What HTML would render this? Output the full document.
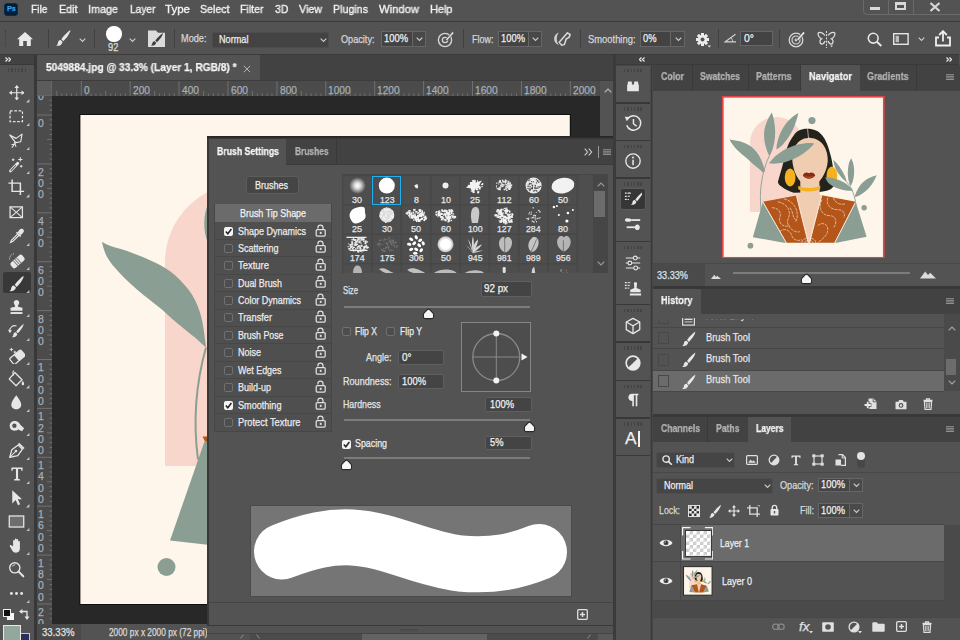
<!DOCTYPE html>
<html><head><meta charset="utf-8"><title>Photoshop</title>
<style>
*{box-sizing:border-box;margin:0;padding:0}
html,body{width:960px;height:640px;overflow:hidden;background:#535353;font-family:"Liberation Sans",sans-serif;color:#ddd;font-size:11px}
.a{position:absolute;display:block}
.t{position:absolute;white-space:nowrap;line-height:1;display:block;-webkit-text-stroke:0.25px currentColor}
</style></head><body>
<div class="a" style="left:0px;top:0px;width:960px;height:21px;background:#535353;"></div>
<div class="a" style="left:0px;top:21px;width:960px;height:1px;background:#3a3a3a;"></div>
<div class="a" style="left:4px;top:3px;width:14px;height:13px;background:#001e36;border-radius:3px;border:1px solid #0b2c4a"></div>
<span class="t" style="left:6.6px;top:5.3px;font-size:8px;color:#31a8ff;font-weight:bold;will-change:transform;transform:scaleX(0.899);transform-origin:0 0;">Ps</span>
<span class="t" style="left:31px;top:4.45px;font-size:11.4px;color:#f2f2f2;transform:scaleX(0.898);transform-origin:0 0;will-change:transform;-webkit-text-stroke:0.35px #f2f2f2;">File</span>
<span class="t" style="left:58.5px;top:4.45px;font-size:11.4px;color:#f2f2f2;transform:scaleX(0.942);transform-origin:0 0;will-change:transform;-webkit-text-stroke:0.35px #f2f2f2;">Edit</span>
<span class="t" style="left:88px;top:4.45px;font-size:11.4px;color:#f2f2f2;transform:scaleX(0.947);transform-origin:0 0;will-change:transform;-webkit-text-stroke:0.35px #f2f2f2;">Image</span>
<span class="t" style="left:129.5px;top:4.45px;font-size:11.4px;color:#f2f2f2;transform:scaleX(0.894);transform-origin:0 0;will-change:transform;-webkit-text-stroke:0.35px #f2f2f2;">Layer</span>
<span class="t" style="left:165px;top:4.45px;font-size:11.4px;color:#f2f2f2;transform:scaleX(1.012);transform-origin:0 0;will-change:transform;-webkit-text-stroke:0.35px #f2f2f2;">Type</span>
<span class="t" style="left:199.5px;top:4.45px;font-size:11.4px;color:#f2f2f2;transform:scaleX(0.931);transform-origin:0 0;will-change:transform;-webkit-text-stroke:0.35px #f2f2f2;">Select</span>
<span class="t" style="left:239.5px;top:4.45px;font-size:11.4px;color:#f2f2f2;transform:scaleX(0.928);transform-origin:0 0;will-change:transform;-webkit-text-stroke:0.35px #f2f2f2;">Filter</span>
<span class="t" style="left:274.5px;top:4.45px;font-size:11.4px;color:#f2f2f2;transform:scaleX(0.926);transform-origin:0 0;will-change:transform;-webkit-text-stroke:0.35px #f2f2f2;">3D</span>
<span class="t" style="left:298.5px;top:4.45px;font-size:11.4px;color:#f2f2f2;transform:scaleX(0.939);transform-origin:0 0;will-change:transform;-webkit-text-stroke:0.35px #f2f2f2;">View</span>
<span class="t" style="left:332.5px;top:4.45px;font-size:11.4px;color:#f2f2f2;transform:scaleX(0.936);transform-origin:0 0;will-change:transform;-webkit-text-stroke:0.35px #f2f2f2;">Plugins</span>
<span class="t" style="left:378.5px;top:4.45px;font-size:11.4px;color:#f2f2f2;transform:scaleX(0.987);transform-origin:0 0;will-change:transform;-webkit-text-stroke:0.35px #f2f2f2;">Window</span>
<span class="t" style="left:429.5px;top:4.45px;font-size:11.4px;color:#f2f2f2;transform:scaleX(0.960);transform-origin:0 0;will-change:transform;-webkit-text-stroke:0.35px #f2f2f2;">Help</span>
<div class="a" style="left:862.5px;top:-4px;width:101px;height:18.5px;background:transparent;border:1px solid #6a6a6a;border-radius:4px"></div>
<div class="a" style="left:887.5px;top:0px;width:1px;height:14px;background:#6a6a6a;"></div>
<div class="a" style="left:912.5px;top:0px;width:1px;height:14px;background:#6a6a6a;"></div>
<div class="a" style="left:870px;top:7px;width:10px;height:3px;background:#d8d8d8;"></div>
<div class="a" style="left:895px;top:2px;width:11px;height:8px;background:transparent;border:2px solid #d8d8d8;border-top-width:3px"></div>
<svg class="a" style="left:929px;top:1.5px;" width="12" height="10" viewBox="0 0 12 10"><path d="M1.5 1 L10.5 9 M10.5 1 L1.5 9" stroke="#d8d8d8" stroke-width="2.2" fill="none"/></svg>
<div class="a" style="left:0px;top:22px;width:960px;height:32px;background:#535353;"></div>
<div class="a" style="left:0px;top:53.5px;width:960px;height:1.5px;background:#3a3a3a;"></div>
<div class="a" style="left:5px;top:30px;width:1px;height:16px;background:transparent;border-left:1px dotted #3e3e3e"></div>
<svg class="a" style="left:16px;top:31px;" width="18" height="16" viewBox="0 0 18 16"><path d="M9 1 L1 8.2 L3.2 8.2 L3.2 15 L7.2 15 L7.2 10 L10.8 10 L10.8 15 L14.8 15 L14.8 8.2 L17 8.2 Z" fill="#e8e8e8"/></svg>
<div class="a" style="left:47.5px;top:29px;width:1px;height:19px;background:#404040;"></div>
<div class="a" style="left:93.5px;top:29px;width:1px;height:19px;background:#404040;"></div>
<div class="a" style="left:174px;top:29px;width:1px;height:19px;background:#404040;"></div>
<div class="a" style="left:462.5px;top:29px;width:1px;height:19px;background:#404040;"></div>
<div class="a" style="left:580px;top:29px;width:1px;height:19px;background:#404040;"></div>
<div class="a" style="left:717.5px;top:29px;width:1px;height:19px;background:#404040;"></div>
<div class="a" style="left:778.5px;top:29px;width:1px;height:19px;background:#404040;"></div>
<svg class="a" style="left:55px;top:29px;" width="17" height="18" viewBox="0 0 17 18"><path d="M15.5 1 C13 2.5 8.5 7 6.3 10.2 L8.3 12.2 C11.2 9.5 15 4.5 15.5 1 Z" fill="#e8e8e8"/><path d="M5.6 11 C3.5 11 3 13 2.8 14.5 C2.6 15.8 1.8 16.3 1 16.6 C3.6 17.4 6.6 16.5 7.6 13 Z" fill="#e8e8e8"/></svg>
<svg class="a" style="left:79px;top:37.5px;" width="7" height="5" viewBox="0 0 7 5"><path d="M0.7 0.7 L3.5 3.5 L6.3 0.7" stroke="#cfcfcf" stroke-width="1.1" fill="none"/></svg>
<div class="a" style="left:106.3px;top:26.4px;width:15.3px;height:15.3px;background:#ffffff;border-radius:50%"></div>
<span class="t" style="left:108px;top:43.4px;font-size:10px;color:#dedede;transform:scaleX(0.926);transform-origin:0 0;">92</span>
<svg class="a" style="left:129px;top:37.5px;" width="7" height="5" viewBox="0 0 7 5"><path d="M0.7 0.7 L3.5 3.5 L6.3 0.7" stroke="#cfcfcf" stroke-width="1.1" fill="none"/></svg>
<svg class="a" style="left:148px;top:30px;" width="17" height="17" viewBox="0 0 17 17"><path d="M0 0.5 L8 0.5 L10 2.8 L17 2.8 L17 17 L0 17 Z" fill="#dcdcdc"/><path d="M15 3 C12.5 4.5 9 8 7.3 10.6 L8.9 12.2 C11.4 10 14.5 6 15 3 Z" fill="#3c3c3c"/><path d="M6.6 11.2 C4.8 11.2 4.4 12.8 4.2 13.8 C4 14.8 3.4 15.2 2.8 15.4 C5 16 7.4 15.4 8.2 12.8 Z" fill="#3c3c3c"/></svg>
<span class="t" style="left:181px;top:32.8px;font-size:11px;color:#d6d6d6;transform:scaleX(0.834);transform-origin:0 0;">Mode:</span>
<div class="a" style="left:212px;top:32px;width:116.5px;height:16px;background:#434343;border-radius:2px;border:1px solid #4c4c4c"></div>
<span class="t" style="left:219px;top:34px;font-size:11px;color:#f0f0f0;transform:scaleX(0.832);transform-origin:0 0;">Normal</span>
<svg class="a" style="left:319.5px;top:38px;" width="7" height="5" viewBox="0 0 7 5"><path d="M0.7 0.7 L3.5 3.5 L6.3 0.7" stroke="#cfcfcf" stroke-width="1.1" fill="none"/></svg>
<span class="t" style="left:341px;top:33.8px;font-size:11px;color:#d6d6d6;transform:scaleX(0.830);transform-origin:0 0;">Opacity:</span>
<div class="a" style="left:381px;top:31px;width:31.5px;height:15.5px;background:#434343;border:1px solid #666"></div>
<div class="a" style="left:412.5px;top:31px;width:13.5px;height:15.5px;background:#484848;border:1px solid #666;border-left:none"></div>
<span class="t" style="left:384px;top:32.9px;font-size:11px;color:#f2f2f2;transform:scaleX(0.853);transform-origin:0 0;">100%</span>
<svg class="a" style="left:415.75px;top:37px;" width="7" height="5" viewBox="0 0 7 5"><path d="M0.7 0.7 L3.5 3.5 L6.3 0.7" stroke="#cfcfcf" stroke-width="1.1" fill="none"/></svg>
<svg class="a" style="left:437px;top:30px;" width="18" height="18" viewBox="0 0 18 18"><circle cx="8" cy="10" r="6.6" fill="none" stroke="#d4d4d4" stroke-width="1.4"/><circle cx="8" cy="10" r="2.6" fill="none" stroke="#d4d4d4" stroke-width="1.3"/><path d="M8.5 9.5 L15.6 1.6 L17.2 3 L10 10.8 Z" fill="#e8e8e8" stroke="#535353" stroke-width="0.8"/></svg>
<span class="t" style="left:471.5px;top:33.8px;font-size:11px;color:#d6d6d6;transform:scaleX(0.818);transform-origin:0 0;">Flow:</span>
<div class="a" style="left:498px;top:31px;width:31px;height:15.5px;background:#434343;border:1px solid #666"></div>
<div class="a" style="left:529px;top:31px;width:13px;height:15.5px;background:#484848;border:1px solid #666;border-left:none"></div>
<span class="t" style="left:501px;top:32.9px;font-size:11px;color:#f2f2f2;transform:scaleX(0.853);transform-origin:0 0;">100%</span>
<svg class="a" style="left:532px;top:37px;" width="7" height="5" viewBox="0 0 7 5"><path d="M0.7 0.7 L3.5 3.5 L6.3 0.7" stroke="#cfcfcf" stroke-width="1.1" fill="none"/></svg>
<svg class="a" style="left:552px;top:31px;" width="20" height="16" viewBox="0 0 20 16"><path d="M7 1.5 C0.5 3.5 0.5 12 7 14 C4 11 4 4.5 7 1.5 Z" fill="#d0d0d0"/><path d="M7.2 11.2 L15.5 1.8 L18.2 3.6 L17 6.4 L14.2 8 L12.4 13.4 L9.8 14.4 Z" fill="none" stroke="#dcdcdc" stroke-width="1.5" stroke-linejoin="round"/></svg>
<span class="t" style="left:587.5px;top:33.8px;font-size:11px;color:#d6d6d6;transform:scaleX(0.854);transform-origin:0 0;">Smoothing:</span>
<div class="a" style="left:640px;top:31px;width:31px;height:15.5px;background:#434343;border:1px solid #666"></div>
<div class="a" style="left:671px;top:31px;width:14px;height:15.5px;background:#484848;border:1px solid #666;border-left:none"></div>
<span class="t" style="left:643px;top:32.9px;font-size:11px;color:#f2f2f2;transform:scaleX(0.849);transform-origin:0 0;">0%</span>
<svg class="a" style="left:674.5px;top:37px;" width="7" height="5" viewBox="0 0 7 5"><path d="M0.7 0.7 L3.5 3.5 L6.3 0.7" stroke="#cfcfcf" stroke-width="1.1" fill="none"/></svg>
<svg class="a" style="left:695.5px;top:32.5px;" width="16" height="16" viewBox="0 0 16 16"><g transform="translate(6.5,6.5)"><rect x="-1.5" y="-6.5" width="3" height="13" fill="#ececec" transform="rotate(0)"/><rect x="-1.5" y="-6.5" width="3" height="13" fill="#ececec" transform="rotate(45)"/><rect x="-1.5" y="-6.5" width="3" height="13" fill="#ececec" transform="rotate(90)"/><rect x="-1.5" y="-6.5" width="3" height="13" fill="#ececec" transform="rotate(135)"/><circle r="4.4" fill="#ececec"/><circle r="2" fill="#535353"/></g><path d="M11.5 12.5 L15 12.5 L13.25 14.6 Z" fill="#e8e8e8"/></svg>
<svg class="a" style="left:724px;top:33px;" width="13" height="10" viewBox="0 0 13 10"><path d="M11.5 1.2 L1.2 8.8 L12 8.8" stroke="#d4d4d4" stroke-width="1.2" fill="none"/><path d="M7 4.8 C8.2 6 8.6 7.4 8.6 8.8" stroke="#d4d4d4" stroke-width="1" fill="none"/></svg>
<div class="a" style="left:740px;top:30.5px;width:32.5px;height:15.5px;background:#434343;border:1px solid #666"></div>
<span class="t" style="left:744px;top:32.9px;font-size:11px;color:#f2f2f2;transform:scaleX(0.951);transform-origin:0 0;">0°</span>
<svg class="a" style="left:787.5px;top:30px;" width="18" height="18" viewBox="0 0 18 18"><circle cx="8" cy="10" r="6.8" fill="none" stroke="#d4d4d4" stroke-width="1.3"/><circle cx="8" cy="10" r="4" fill="none" stroke="#d4d4d4" stroke-width="1.2"/><circle cx="8" cy="10" r="1.4" fill="#d4d4d4"/><path d="M8.6 9.2 L15.4 1.4 L17.2 3 L10.2 10.8 Z" fill="#e8e8e8" stroke="#535353" stroke-width="0.8"/></svg>
<svg class="a" style="left:816.5px;top:30.5px;" width="19" height="17" viewBox="0 0 19 17"><path d="M8 4.5 C6 1.5 2.5 0.8 1.2 2 C0.8 4.5 2.5 7 4.5 7.8 C2.8 8.5 2.6 11 3.6 12.6 C5.2 13.6 7.4 12.4 8 10" fill="none" stroke="#dcdcdc" stroke-width="1.3"/><path d="M11 4.5 C13 1.5 16.5 0.8 17.8 2 C18.2 4.5 16.5 7 14.5 7.8 C16.2 8.5 16.4 11 15.4 12.6 C13.8 13.6 11.6 12.4 11 10" fill="none" stroke="#dcdcdc" stroke-width="1.3"/><path d="M9.5 0 L9.5 17" stroke="#dcdcdc" stroke-width="1" stroke-dasharray="2 1.2"/><path d="M13 14.5 L16 14.5 L14.5 16.3 Z" fill="#dcdcdc"/></svg>
<svg class="a" style="left:866.5px;top:31.5px;" width="16" height="15" viewBox="0 0 16 15"><circle cx="6.2" cy="6.2" r="4.9" fill="none" stroke="#e6e6e6" stroke-width="1.6"/><path d="M9.8 9.8 L14.4 14" stroke="#e6e6e6" stroke-width="2"/></svg>
<svg class="a" style="left:892.5px;top:33px;" width="16" height="12" viewBox="0 0 16 12"><rect x="0.7" y="0.7" width="14.4" height="10.6" fill="none" stroke="#e6e6e6" stroke-width="1.4"/><rect x="2.6" y="2.8" width="3.4" height="6.4" fill="#bdbdbd"/></svg>
<svg class="a" style="left:917.5px;top:37px;" width="7" height="5" viewBox="0 0 7 5"><path d="M0.7 0.7 L3.5 3.5 L6.3 0.7" stroke="#cfcfcf" stroke-width="1.1" fill="none"/></svg>
<svg class="a" style="left:934.5px;top:29.5px;" width="16" height="17" viewBox="0 0 16 17"><path d="M4 7.5 L1 7.5 L1 15.5 L15 15.5 L15 7.5 L12 7.5" fill="none" stroke="#f0f0f0" stroke-width="1.8"/><path d="M8 11.5 L8 2" stroke="#f0f0f0" stroke-width="1.8"/><path d="M4.2 5 L8 1.2 L11.8 5" fill="none" stroke="#f0f0f0" stroke-width="1.8"/></svg>
<div class="a" style="left:0px;top:55px;width:960px;height:10px;background:#424242;"></div>
<div class="a" style="left:35px;top:55px;width:579px;height:26px;background:#424242;"></div>
<div class="a" style="left:34px;top:55px;width:3px;height:585px;background:#383838;"></div>
<div class="a" style="left:37px;top:55px;width:222.5px;height:26px;background:#535353;"></div>
<span class="t" style="left:46px;top:62.25px;font-size:10.5px;color:#f4f4f4;font-weight:bold;will-change:transform;transform:scaleX(0.967);transform-origin:0 0;">5049884.jpg @ 33.3% (Layer 1, RGB/8) *</span>
<svg class="a" style="left:243px;top:64.5px;" width="8" height="8" viewBox="0 0 8 8"><path d="M0.8 0.8 L7.2 7.2 M7.2 0.8 L0.8 7.2" stroke="#b4b4b4" stroke-width="1" fill="none"/></svg>
<svg class="a" style="left:5.3px;top:56.6px;" width="6.2" height="5" viewBox="0 0 6.2 5"><path d="M0.5 0.5 L2.5 2.5 L0.5 4.5 M3.5 0.5 L5.5 2.5 L3.5 4.5" stroke="#e4e4e4" stroke-width="1.3" fill="none"/></svg>
<svg class="a" style="left:946.3px;top:56.6px;" width="6.2" height="5" viewBox="0 0 6.2 5"><path d="M0.5 0.5 L2.5 2.5 L0.5 4.5 M3.5 0.5 L5.5 2.5 L3.5 4.5" stroke="#e4e4e4" stroke-width="1.3" fill="none"/></svg>
<svg class="a" style="left:638.5px;top:56.6px;" width="6.2" height="5" viewBox="0 0 6.2 5"><path d="M2.5 0.5 L0.5 2.5 L2.5 4.5 M5.5 0.5 L3.5 2.5 L5.5 4.5" stroke="#e4e4e4" stroke-width="1.3" fill="none"/></svg>
<div class="a" style="left:0px;top:64px;width:34px;height:1.6px;background:#383838;"></div>
<div class="a" style="left:37px;top:80px;width:577px;height:1.2px;background:#3c3c3c;"></div>
<div class="a" style="left:0px;top:65px;width:34px;height:575px;background:#535353;"></div>
<div class="a" style="left:8px;top:68.3px;width:18px;height:3.6px;background:transparent;background-image:repeating-linear-gradient(90deg,#444 0 1.4px,transparent 1.4px 3.3px)"></div>
<div class="a" style="left:3px;top:272px;width:27.5px;height:21px;background:#383838;border-radius:2px"></div>
<svg class="a" style="left:8.95px;top:84.85px;" width="15.5" height="15.5" viewBox="0 0 20 20"><path d="M10 1 L10 19 M1 10 L19 10" stroke="#e6e6e6" fill="none" stroke-width="1.6"/><path d="M10 0 L13 3.8 L7 3.8 Z M10 20 L13 16.2 L7 16.2 Z M0 10 L3.8 7 L3.8 13 Z M20 10 L16.2 7 L16.2 13 Z" fill="#e6e6e6"/></svg>
<svg class="a" style="left:26.3px;top:99.4px;" width="3.4" height="3.4" viewBox="0 0 3.4 3.4"><path d="M3.4 0 L3.4 3.4 L0 3.4 Z" fill="#c4c4c4"/></svg>
<svg class="a" style="left:8.45px;top:107.75px;" width="16.5" height="16.5" viewBox="0 0 20 20"><rect x="2.5" y="3.5" width="15" height="13" stroke="#e6e6e6" fill="none" stroke-width="1.5" stroke-dasharray="3.2 2"/></svg>
<svg class="a" style="left:26.3px;top:122.8px;" width="3.4" height="3.4" viewBox="0 0 3.4 3.4"><path d="M3.4 0 L3.4 3.4 L0 3.4 Z" fill="#c4c4c4"/></svg>
<svg class="a" style="left:8.2px;top:131.5px;" width="17" height="17" viewBox="0 0 20 20"><path d="M2 3.5 L9.5 7.5 L16.5 2.5 L15 11.5 L9 12.5 Z" stroke="#e6e6e6" fill="none" stroke-width="1.4" stroke-linejoin="round"/><path d="M9 12.5 L4.5 18.5 M7.5 12 L9.5 17.5 M4 15 L8 14" stroke="#e6e6e6" fill="none" stroke-width="1.2"/></svg>
<svg class="a" style="left:26.3px;top:146.8px;" width="3.4" height="3.4" viewBox="0 0 3.4 3.4"><path d="M3.4 0 L3.4 3.4 L0 3.4 Z" fill="#c4c4c4"/></svg>
<svg class="a" style="left:8.2px;top:155.5px;" width="17" height="17" viewBox="0 0 20 20"><path d="M3 17.5 L11.5 8.5" stroke="#e6e6e6" stroke-width="3.4" stroke-linecap="round"/><path d="M3.6 16.9 L9 11.2" stroke="#535353" stroke-width="1.2" stroke-linecap="round"/><path d="M14.5 1.5 L14.5 6.5 M12 4 L17 4 M6 3 L6 6 M4.5 4.5 L7.5 4.5 M15.5 10.5 L15.5 13.5 M14 12 L17 12" stroke="#e6e6e6" fill="none" stroke-width="1.2"/></svg>
<svg class="a" style="left:26.3px;top:170.8px;" width="3.4" height="3.4" viewBox="0 0 3.4 3.4"><path d="M3.4 0 L3.4 3.4 L0 3.4 Z" fill="#c4c4c4"/></svg>
<svg class="a" style="left:8.45px;top:179.25px;" width="16.5" height="16.5" viewBox="0 0 20 20"><path d="M5 0.5 L5 15 L19.5 15 M0.5 5 L15 5 L15 19.5" stroke="#e6e6e6" fill="none" stroke-width="1.8"/></svg>
<svg class="a" style="left:26.3px;top:194.3px;" width="3.4" height="3.4" viewBox="0 0 3.4 3.4"><path d="M3.4 0 L3.4 3.4 L0 3.4 Z" fill="#c4c4c4"/></svg>
<svg class="a" style="left:8.45px;top:203.75px;" width="16.5" height="16.5" viewBox="0 0 20 20"><rect x="2.5" y="3.5" width="15" height="13" stroke="#e6e6e6" fill="none" stroke-width="1.5"/><path d="M2.5 3.5 L17.5 16.5 M17.5 3.5 L2.5 16.5" stroke="#e6e6e6" fill="none" stroke-width="1.3"/></svg>
<svg class="a" style="left:8.2px;top:227.5px;" width="17" height="17" viewBox="0 0 20 20"><path d="M13.5 2 C15 0.5 17.5 0.8 18.3 2.2 C19.2 3.6 18.6 5 17.5 6 L15 8.5 L11.5 5 Z" fill="#e6e6e6"/><path d="M10 5 L15 10" stroke="#e6e6e6" stroke-width="2"/><path d="M11.5 7 L4 14.5 L3 17 L5.5 16 L13 8.5" stroke="#e6e6e6" fill="none" stroke-width="1.4"/></svg>
<svg class="a" style="left:26.3px;top:242.8px;" width="3.4" height="3.4" viewBox="0 0 3.4 3.4"><path d="M3.4 0 L3.4 3.4 L0 3.4 Z" fill="#c4c4c4"/></svg>
<svg class="a" style="left:8.2px;top:251.5px;" width="17" height="17" viewBox="0 0 20 20"><g transform="rotate(-42 11 11)"><rect x="2" y="7" width="18" height="8.5" rx="3" fill="#e6e6e6"/><path d="M8 7 V15.5 M10.5 7 V15.5 M13 7 V15.5" stroke="#535353" stroke-width="1"/></g><path d="M2 9 A6 6 0 0 1 8 2" stroke="#e6e6e6" fill="none" stroke-width="1" stroke-dasharray="1.4 1.2"/></svg>
<svg class="a" style="left:26.3px;top:266.8px;" width="3.4" height="3.4" viewBox="0 0 3.4 3.4"><path d="M3.4 0 L3.4 3.4 L0 3.4 Z" fill="#c4c4c4"/></svg>
<svg class="a" style="left:8.2px;top:274.5px;" width="17" height="17" viewBox="0 0 20 20"><path d="M18.5 0.8 C15.5 2.6 10.4 7.8 7.8 11.6 L10.2 14 C13.6 10.8 18 5 18.5 0.8 Z" fill="#e6e6e6"/><path d="M7 12.4 C4.4 12.4 3.8 14.8 3.6 16.4 C3.4 17.8 2.4 18.6 1.4 18.9 C4.6 19.8 8.2 18.8 9.4 14.8 Z" fill="#e6e6e6"/></svg>
<svg class="a" style="left:26.3px;top:289.8px;" width="3.4" height="3.4" viewBox="0 0 3.4 3.4"><path d="M3.4 0 L3.4 3.4 L0 3.4 Z" fill="#c4c4c4"/></svg>
<svg class="a" style="left:8.2px;top:298.5px;" width="17" height="17" viewBox="0 0 20 20"><path d="M6.8 4.2 C6.8 0 13.2 0 13.2 4.2 C13.2 6 11.8 7 11.6 9 L17 10.4 L17 13.8 L3 13.8 L3 10.4 L8.4 9 C8.2 7 6.8 6 6.8 4.2 Z" fill="#e6e6e6"/><rect x="3" y="15.4" width="14" height="2.2" fill="#e6e6e6"/></svg>
<svg class="a" style="left:26.3px;top:313.8px;" width="3.4" height="3.4" viewBox="0 0 3.4 3.4"><path d="M3.4 0 L3.4 3.4 L0 3.4 Z" fill="#c4c4c4"/></svg>
<svg class="a" style="left:8.2px;top:322.5px;" width="17" height="17" viewBox="0 0 20 20"><path d="M18.5 1 C16 2.6 11.8 7 9.6 10.2 L11.6 12.2 C14.4 9.4 18 4.6 18.5 1 Z" fill="#e6e6e6"/><path d="M9 11 C7 11 6.4 13 6.2 14.4 C6 15.6 5.2 16.2 4.4 16.5 C7 17.3 10 16.4 11 13 Z" fill="#e6e6e6"/><path d="M2 10 A6 6 0 0 1 10 3.5" stroke="#e6e6e6" fill="none" stroke-width="1.2"/><path d="M0 8 L4.5 8.5 L2.2 12 Z" fill="#e6e6e6"/></svg>
<svg class="a" style="left:26.3px;top:337.8px;" width="3.4" height="3.4" viewBox="0 0 3.4 3.4"><path d="M3.4 0 L3.4 3.4 L0 3.4 Z" fill="#c4c4c4"/></svg>
<svg class="a" style="left:8.2px;top:346.5px;" width="17" height="17" viewBox="0 0 20 20"><g transform="rotate(-40 11 12)"><rect x="2.5" y="7.5" width="17" height="9" rx="1.5" stroke="#e6e6e6" fill="none" stroke-width="1.5"/><rect x="9.5" y="7.5" width="10" height="9" rx="1" fill="#e6e6e6"/></g><path d="M4 1 L4 5 M2 3 L6 3 M8 4.5 L8 7.5 M6.5 6 L9.5 6" stroke="#e6e6e6" fill="none" stroke-width="1.1"/></svg>
<svg class="a" style="left:26.3px;top:361.8px;" width="3.4" height="3.4" viewBox="0 0 3.4 3.4"><path d="M3.4 0 L3.4 3.4 L0 3.4 Z" fill="#c4c4c4"/></svg>
<svg class="a" style="left:8.2px;top:370px;" width="17" height="17" viewBox="0 0 20 20"><path d="M8 3 L16.5 11.5 L9.5 18.5 L1.5 10.5 Z" stroke="#e6e6e6" fill="none" stroke-width="1.5" stroke-linejoin="round"/><path d="M7 1 C5.5 1.5 5.5 4 6.5 6.5" stroke="#e6e6e6" fill="none" stroke-width="1.3"/><path d="M17.5 12.5 C19.5 15.5 19.5 18 17.5 18 C15.5 18 15.5 15.5 17.5 12.5 Z" fill="#e6e6e6"/></svg>
<svg class="a" style="left:26.3px;top:385.3px;" width="3.4" height="3.4" viewBox="0 0 3.4 3.4"><path d="M3.4 0 L3.4 3.4 L0 3.4 Z" fill="#c4c4c4"/></svg>
<svg class="a" style="left:8.45px;top:393.75px;" width="16.5" height="16.5" viewBox="0 0 20 20"><path d="M10 1.5 C14 7 16 10 16 13 C16 16.5 13.3 18.5 10 18.5 C6.7 18.5 4 16.5 4 13 C4 10 6 7 10 1.5 Z" fill="#e6e6e6"/></svg>
<svg class="a" style="left:26.3px;top:408.8px;" width="3.4" height="3.4" viewBox="0 0 3.4 3.4"><path d="M3.4 0 L3.4 3.4 L0 3.4 Z" fill="#c4c4c4"/></svg>
<svg class="a" style="left:8.2px;top:417.5px;" width="17" height="17" viewBox="0 0 20 20"><path d="M2 9 C2 5 5.5 3 9 3.5 C12 4 13.5 6 14.5 8 L19 12 L16.5 15.5 L12 13.5 C10 15 7 15.5 4.5 14 C2.8 13 2 11 2 9 Z" fill="#e6e6e6"/><circle cx="7.5" cy="9.2" r="2.6" fill="#535353"/></svg>
<svg class="a" style="left:26.3px;top:432.8px;" width="3.4" height="3.4" viewBox="0 0 3.4 3.4"><path d="M3.4 0 L3.4 3.4 L0 3.4 Z" fill="#c4c4c4"/></svg>
<svg class="a" style="left:8.2px;top:441.5px;" width="17" height="17" viewBox="0 0 20 20"><path d="M2 18 L4.5 9 L12 3.5 L17 8.5 L11.5 16 Z" stroke="#e6e6e6" fill="none" stroke-width="1.5" stroke-linejoin="round"/><path d="M2 18 L8.8 11.2" stroke="#e6e6e6" fill="none" stroke-width="1.2"/><circle cx="9.4" cy="10.6" r="1.5" fill="#e6e6e6"/><path d="M12.5 1.5 L18.8 7.8" stroke="#e6e6e6" fill="none" stroke-width="2"/></svg>
<svg class="a" style="left:26.3px;top:456.8px;" width="3.4" height="3.4" viewBox="0 0 3.4 3.4"><path d="M3.4 0 L3.4 3.4 L0 3.4 Z" fill="#c4c4c4"/></svg>
<svg class="a" style="left:8.7px;top:466px;" width="16" height="16" viewBox="0 0 20 20"><path d="M3 2 L17 2 L17 6 L15.6 6 L15 3.8 L11.3 3.8 L11.3 16 L13.6 16.6 L13.6 18 L6.4 18 L6.4 16.6 L8.7 16 L8.7 3.8 L5 3.8 L4.4 6 L3 6 Z" fill="#e6e6e6"/></svg>
<svg class="a" style="left:26.3px;top:480.8px;" width="3.4" height="3.4" viewBox="0 0 3.4 3.4"><path d="M3.4 0 L3.4 3.4 L0 3.4 Z" fill="#c4c4c4"/></svg>
<svg class="a" style="left:8.2px;top:489px;" width="17" height="17" viewBox="0 0 20 20"><path d="M5 1.5 L5 17 L9 13 L11.8 19 L14.3 17.8 L11.5 12 L16.5 12 Z" fill="#e6e6e6"/></svg>
<svg class="a" style="left:26.3px;top:504.3px;" width="3.4" height="3.4" viewBox="0 0 3.4 3.4"><path d="M3.4 0 L3.4 3.4 L0 3.4 Z" fill="#c4c4c4"/></svg>
<svg class="a" style="left:8.2px;top:512.5px;" width="17" height="17" viewBox="0 0 20 20"><rect x="1.5" y="3.5" width="17" height="13" fill="#6e6e6e" stroke="#e6e6e6" stroke-width="1.5"/></svg>
<svg class="a" style="left:26.3px;top:527.8px;" width="3.4" height="3.4" viewBox="0 0 3.4 3.4"><path d="M3.4 0 L3.4 3.4 L0 3.4 Z" fill="#c4c4c4"/></svg>
<svg class="a" style="left:8.2px;top:536.5px;" width="17" height="17" viewBox="0 0 20 20"><path d="M6 11 L6 4.5 C6 3.2 8 3.2 8 4.5 L8 9 L8 2.8 C8 1.5 10 1.5 10 2.8 L10 9 L10 3.4 C10 2.1 12 2.1 12 3.4 L12 9.5 L12 5.6 C12 4.3 14 4.3 14 5.6 L14 13 C14 16.5 12.5 18.5 9.5 18.5 C7 18.5 5.6 17.4 4.4 15 L2.2 10.8 C1.6 9.6 3.2 8.8 4 9.9 Z" fill="#e6e6e6"/></svg>
<svg class="a" style="left:26.3px;top:551.8px;" width="3.4" height="3.4" viewBox="0 0 3.4 3.4"><path d="M3.4 0 L3.4 3.4 L0 3.4 Z" fill="#c4c4c4"/></svg>
<svg class="a" style="left:8.2px;top:560.5px;" width="17" height="17" viewBox="0 0 20 20"><circle cx="8" cy="8" r="6" stroke="#e6e6e6" fill="none" stroke-width="1.6"/><path d="M12.5 12.5 L18 18" stroke="#e6e6e6" stroke-width="2.4" stroke-linecap="round"/><path d="M5 6.5 A3.5 3.5 0 0 1 8.5 4.5" stroke="#e6e6e6" fill="none" stroke-width="1"/></svg>
<svg class="a" style="left:8.2px;top:584.5px;" width="17" height="17" viewBox="0 0 20 20"><circle cx="4" cy="10" r="1.7" fill="#e6e6e6"/><circle cx="10" cy="10" r="1.7" fill="#e6e6e6"/><circle cx="16" cy="10" r="1.7" fill="#e6e6e6"/></svg>
<svg class="a" style="left:26.3px;top:599.8px;" width="3.4" height="3.4" viewBox="0 0 3.4 3.4"><path d="M3.4 0 L3.4 3.4 L0 3.4 Z" fill="#c4c4c4"/></svg>
<div class="a" style="left:6.5px;top:612.5px;width:7px;height:7px;background:#f4f4f4;"></div>
<div class="a" style="left:3px;top:609px;width:7.5px;height:7.5px;background:#111;border:1.2px solid #f0f0f0"></div>
<svg class="a" style="left:19px;top:609px;" width="11" height="11" viewBox="0 0 11 11"><path d="M3 2.5 L8 2.5 L8 8" stroke="#e6e6e6" stroke-width="1.3" fill="none"/><path d="M0 2.5 L3.4 0 L3.4 5 Z M8 11 L5.5 7.6 L10.5 7.6 Z" fill="#e6e6e6"/></svg>
<div class="a" style="left:20px;top:632.5px;width:9.5px;height:8px;background:#28305a;border:1px solid #c8c8c8"></div>
<div class="a" style="left:3px;top:625px;width:18px;height:17px;background:#93a79c;border:1px solid #e8e8e8"></div>
<div class="a" style="left:37px;top:81px;width:577px;height:559px;background:#535353;"></div>
<div class="a" style="left:52px;top:96px;width:548px;height:528px;background:#282828;"></div>
<div class="a" style="left:37px;top:81px;width:563px;height:15px;background:#4b4b4b;"></div>
<div class="a" style="left:37px;top:96px;width:15px;height:528px;background:#4b4b4b;"></div>
<div class="a" style="left:37px;top:81px;width:15px;height:15px;background:#5c5c5c;border-right:1px dotted #707070;border-bottom:1px dotted #707070"></div>
<svg class="a" style="left:37px;top:81px;" width="563" height="15" viewBox="0 0 563 15"><rect x="19.35" y="10.00" width="1" height="5.00" fill="#707070"/><rect x="24.24" y="12.50" width="1" height="2.50" fill="#707070"/><rect x="29.13" y="12.50" width="1" height="2.50" fill="#707070"/><rect x="34.02" y="12.50" width="1" height="2.50" fill="#707070"/><rect x="38.91" y="12.50" width="1" height="2.50" fill="#707070"/><rect x="43.80" y="0.00" width="1" height="15.00" fill="#707070"/><rect x="48.69" y="12.50" width="1" height="2.50" fill="#707070"/><rect x="53.58" y="12.50" width="1" height="2.50" fill="#707070"/><rect x="58.47" y="12.50" width="1" height="2.50" fill="#707070"/><rect x="63.36" y="12.50" width="1" height="2.50" fill="#707070"/><rect x="68.25" y="10.00" width="1" height="5.00" fill="#707070"/><rect x="73.14" y="12.50" width="1" height="2.50" fill="#707070"/><rect x="78.03" y="12.50" width="1" height="2.50" fill="#707070"/><rect x="82.92" y="12.50" width="1" height="2.50" fill="#707070"/><rect x="87.81" y="12.50" width="1" height="2.50" fill="#707070"/><rect x="92.70" y="0.00" width="1" height="15.00" fill="#707070"/><rect x="97.59" y="12.50" width="1" height="2.50" fill="#707070"/><rect x="102.48" y="12.50" width="1" height="2.50" fill="#707070"/><rect x="107.37" y="12.50" width="1" height="2.50" fill="#707070"/><rect x="112.26" y="12.50" width="1" height="2.50" fill="#707070"/><rect x="117.15" y="10.00" width="1" height="5.00" fill="#707070"/><rect x="122.04" y="12.50" width="1" height="2.50" fill="#707070"/><rect x="126.93" y="12.50" width="1" height="2.50" fill="#707070"/><rect x="131.82" y="12.50" width="1" height="2.50" fill="#707070"/><rect x="136.71" y="12.50" width="1" height="2.50" fill="#707070"/><rect x="141.60" y="0.00" width="1" height="15.00" fill="#707070"/><rect x="146.49" y="12.50" width="1" height="2.50" fill="#707070"/><rect x="151.38" y="12.50" width="1" height="2.50" fill="#707070"/><rect x="156.27" y="12.50" width="1" height="2.50" fill="#707070"/><rect x="161.16" y="12.50" width="1" height="2.50" fill="#707070"/><rect x="166.05" y="10.00" width="1" height="5.00" fill="#707070"/><rect x="170.94" y="12.50" width="1" height="2.50" fill="#707070"/><rect x="175.83" y="12.50" width="1" height="2.50" fill="#707070"/><rect x="180.72" y="12.50" width="1" height="2.50" fill="#707070"/><rect x="185.61" y="12.50" width="1" height="2.50" fill="#707070"/><rect x="190.50" y="0.00" width="1" height="15.00" fill="#707070"/><rect x="195.39" y="12.50" width="1" height="2.50" fill="#707070"/><rect x="200.28" y="12.50" width="1" height="2.50" fill="#707070"/><rect x="205.17" y="12.50" width="1" height="2.50" fill="#707070"/><rect x="210.06" y="12.50" width="1" height="2.50" fill="#707070"/><rect x="214.95" y="10.00" width="1" height="5.00" fill="#707070"/><rect x="219.84" y="12.50" width="1" height="2.50" fill="#707070"/><rect x="224.73" y="12.50" width="1" height="2.50" fill="#707070"/><rect x="229.62" y="12.50" width="1" height="2.50" fill="#707070"/><rect x="234.51" y="12.50" width="1" height="2.50" fill="#707070"/><rect x="239.40" y="0.00" width="1" height="15.00" fill="#707070"/><rect x="244.29" y="12.50" width="1" height="2.50" fill="#707070"/><rect x="249.18" y="12.50" width="1" height="2.50" fill="#707070"/><rect x="254.07" y="12.50" width="1" height="2.50" fill="#707070"/><rect x="258.96" y="12.50" width="1" height="2.50" fill="#707070"/><rect x="263.85" y="10.00" width="1" height="5.00" fill="#707070"/><rect x="268.74" y="12.50" width="1" height="2.50" fill="#707070"/><rect x="273.63" y="12.50" width="1" height="2.50" fill="#707070"/><rect x="278.52" y="12.50" width="1" height="2.50" fill="#707070"/><rect x="283.41" y="12.50" width="1" height="2.50" fill="#707070"/><rect x="288.30" y="0.00" width="1" height="15.00" fill="#707070"/><rect x="293.19" y="12.50" width="1" height="2.50" fill="#707070"/><rect x="298.08" y="12.50" width="1" height="2.50" fill="#707070"/><rect x="302.97" y="12.50" width="1" height="2.50" fill="#707070"/><rect x="307.86" y="12.50" width="1" height="2.50" fill="#707070"/><rect x="312.75" y="10.00" width="1" height="5.00" fill="#707070"/><rect x="317.64" y="12.50" width="1" height="2.50" fill="#707070"/><rect x="322.53" y="12.50" width="1" height="2.50" fill="#707070"/><rect x="327.42" y="12.50" width="1" height="2.50" fill="#707070"/><rect x="332.31" y="12.50" width="1" height="2.50" fill="#707070"/><rect x="337.20" y="0.00" width="1" height="15.00" fill="#707070"/><rect x="342.09" y="12.50" width="1" height="2.50" fill="#707070"/><rect x="346.98" y="12.50" width="1" height="2.50" fill="#707070"/><rect x="351.87" y="12.50" width="1" height="2.50" fill="#707070"/><rect x="356.76" y="12.50" width="1" height="2.50" fill="#707070"/><rect x="361.65" y="10.00" width="1" height="5.00" fill="#707070"/><rect x="366.54" y="12.50" width="1" height="2.50" fill="#707070"/><rect x="371.43" y="12.50" width="1" height="2.50" fill="#707070"/><rect x="376.32" y="12.50" width="1" height="2.50" fill="#707070"/><rect x="381.21" y="12.50" width="1" height="2.50" fill="#707070"/><rect x="386.10" y="0.00" width="1" height="15.00" fill="#707070"/><rect x="390.99" y="12.50" width="1" height="2.50" fill="#707070"/><rect x="395.88" y="12.50" width="1" height="2.50" fill="#707070"/><rect x="400.77" y="12.50" width="1" height="2.50" fill="#707070"/><rect x="405.66" y="12.50" width="1" height="2.50" fill="#707070"/><rect x="410.55" y="10.00" width="1" height="5.00" fill="#707070"/><rect x="415.44" y="12.50" width="1" height="2.50" fill="#707070"/><rect x="420.33" y="12.50" width="1" height="2.50" fill="#707070"/><rect x="425.22" y="12.50" width="1" height="2.50" fill="#707070"/><rect x="430.11" y="12.50" width="1" height="2.50" fill="#707070"/><rect x="435.00" y="0.00" width="1" height="15.00" fill="#707070"/><rect x="439.89" y="12.50" width="1" height="2.50" fill="#707070"/><rect x="444.78" y="12.50" width="1" height="2.50" fill="#707070"/><rect x="449.67" y="12.50" width="1" height="2.50" fill="#707070"/><rect x="454.56" y="12.50" width="1" height="2.50" fill="#707070"/><rect x="459.45" y="10.00" width="1" height="5.00" fill="#707070"/><rect x="464.34" y="12.50" width="1" height="2.50" fill="#707070"/><rect x="469.23" y="12.50" width="1" height="2.50" fill="#707070"/><rect x="474.12" y="12.50" width="1" height="2.50" fill="#707070"/><rect x="479.01" y="12.50" width="1" height="2.50" fill="#707070"/><rect x="483.90" y="0.00" width="1" height="15.00" fill="#707070"/><rect x="488.79" y="12.50" width="1" height="2.50" fill="#707070"/><rect x="493.68" y="12.50" width="1" height="2.50" fill="#707070"/><rect x="498.57" y="12.50" width="1" height="2.50" fill="#707070"/><rect x="503.46" y="12.50" width="1" height="2.50" fill="#707070"/><rect x="508.35" y="10.00" width="1" height="5.00" fill="#707070"/><rect x="513.24" y="12.50" width="1" height="2.50" fill="#707070"/><rect x="518.13" y="12.50" width="1" height="2.50" fill="#707070"/><rect x="523.02" y="12.50" width="1" height="2.50" fill="#707070"/><rect x="527.91" y="12.50" width="1" height="2.50" fill="#707070"/><rect x="532.80" y="0.00" width="1" height="15.00" fill="#707070"/><rect x="537.69" y="12.50" width="1" height="2.50" fill="#707070"/><rect x="542.58" y="12.50" width="1" height="2.50" fill="#707070"/><rect x="547.47" y="12.50" width="1" height="2.50" fill="#707070"/><rect x="552.36" y="12.50" width="1" height="2.50" fill="#707070"/><rect x="557.25" y="10.00" width="1" height="5.00" fill="#707070"/></svg>
<span class="t" style="left:83.9px;top:85px;font-size:11px;color:#a6aeb6;transform:scaleX(0.915);transform-origin:0 0;">0</span>
<span class="t" style="left:132.8px;top:85px;font-size:11px;color:#a6aeb6;transform:scaleX(0.926);transform-origin:0 0;">200</span>
<span class="t" style="left:181.7px;top:85px;font-size:11px;color:#a6aeb6;transform:scaleX(0.926);transform-origin:0 0;">400</span>
<span class="t" style="left:230.6px;top:85px;font-size:11px;color:#a6aeb6;transform:scaleX(0.926);transform-origin:0 0;">600</span>
<span class="t" style="left:279.5px;top:85px;font-size:11px;color:#a6aeb6;transform:scaleX(0.926);transform-origin:0 0;">800</span>
<span class="t" style="left:328.4px;top:85px;font-size:11px;color:#a6aeb6;transform:scaleX(0.924);transform-origin:0 0;">1000</span>
<span class="t" style="left:377.3px;top:85px;font-size:11px;color:#a6aeb6;transform:scaleX(0.924);transform-origin:0 0;">1200</span>
<span class="t" style="left:426.2px;top:85px;font-size:11px;color:#a6aeb6;transform:scaleX(0.924);transform-origin:0 0;">1400</span>
<span class="t" style="left:475.1px;top:85px;font-size:11px;color:#a6aeb6;transform:scaleX(0.924);transform-origin:0 0;">1600</span>
<span class="t" style="left:524px;top:85px;font-size:11px;color:#a6aeb6;transform:scaleX(0.924);transform-origin:0 0;">1800</span>
<span class="t" style="left:572.9px;top:85px;font-size:11px;color:#a6aeb6;transform:scaleX(0.924);transform-origin:0 0;">2000</span>
<svg class="a" style="left:37px;top:96px;" width="15" height="528" viewBox="0 0 15 528"><rect y="3.83" x="12.50" height="1" width="2.50" fill="#707070"/><rect y="8.72" x="12.50" height="1" width="2.50" fill="#707070"/><rect y="13.61" x="12.50" height="1" width="2.50" fill="#707070"/><rect y="18.50" x="0.00" height="1" width="15.00" fill="#707070"/><rect y="23.39" x="12.50" height="1" width="2.50" fill="#707070"/><rect y="28.28" x="12.50" height="1" width="2.50" fill="#707070"/><rect y="33.17" x="12.50" height="1" width="2.50" fill="#707070"/><rect y="38.06" x="12.50" height="1" width="2.50" fill="#707070"/><rect y="42.95" x="10.00" height="1" width="5.00" fill="#707070"/><rect y="47.84" x="12.50" height="1" width="2.50" fill="#707070"/><rect y="52.73" x="12.50" height="1" width="2.50" fill="#707070"/><rect y="57.62" x="12.50" height="1" width="2.50" fill="#707070"/><rect y="62.51" x="12.50" height="1" width="2.50" fill="#707070"/><rect y="67.40" x="0.00" height="1" width="15.00" fill="#707070"/><rect y="72.29" x="12.50" height="1" width="2.50" fill="#707070"/><rect y="77.18" x="12.50" height="1" width="2.50" fill="#707070"/><rect y="82.07" x="12.50" height="1" width="2.50" fill="#707070"/><rect y="86.96" x="12.50" height="1" width="2.50" fill="#707070"/><rect y="91.85" x="10.00" height="1" width="5.00" fill="#707070"/><rect y="96.74" x="12.50" height="1" width="2.50" fill="#707070"/><rect y="101.63" x="12.50" height="1" width="2.50" fill="#707070"/><rect y="106.52" x="12.50" height="1" width="2.50" fill="#707070"/><rect y="111.41" x="12.50" height="1" width="2.50" fill="#707070"/><rect y="116.30" x="0.00" height="1" width="15.00" fill="#707070"/><rect y="121.19" x="12.50" height="1" width="2.50" fill="#707070"/><rect y="126.08" x="12.50" height="1" width="2.50" fill="#707070"/><rect y="130.97" x="12.50" height="1" width="2.50" fill="#707070"/><rect y="135.86" x="12.50" height="1" width="2.50" fill="#707070"/><rect y="140.75" x="10.00" height="1" width="5.00" fill="#707070"/><rect y="145.64" x="12.50" height="1" width="2.50" fill="#707070"/><rect y="150.53" x="12.50" height="1" width="2.50" fill="#707070"/><rect y="155.42" x="12.50" height="1" width="2.50" fill="#707070"/><rect y="160.31" x="12.50" height="1" width="2.50" fill="#707070"/><rect y="165.20" x="0.00" height="1" width="15.00" fill="#707070"/><rect y="170.09" x="12.50" height="1" width="2.50" fill="#707070"/><rect y="174.98" x="12.50" height="1" width="2.50" fill="#707070"/><rect y="179.87" x="12.50" height="1" width="2.50" fill="#707070"/><rect y="184.76" x="12.50" height="1" width="2.50" fill="#707070"/><rect y="189.65" x="10.00" height="1" width="5.00" fill="#707070"/><rect y="194.54" x="12.50" height="1" width="2.50" fill="#707070"/><rect y="199.43" x="12.50" height="1" width="2.50" fill="#707070"/><rect y="204.32" x="12.50" height="1" width="2.50" fill="#707070"/><rect y="209.21" x="12.50" height="1" width="2.50" fill="#707070"/><rect y="214.10" x="0.00" height="1" width="15.00" fill="#707070"/><rect y="218.99" x="12.50" height="1" width="2.50" fill="#707070"/><rect y="223.88" x="12.50" height="1" width="2.50" fill="#707070"/><rect y="228.77" x="12.50" height="1" width="2.50" fill="#707070"/><rect y="233.66" x="12.50" height="1" width="2.50" fill="#707070"/><rect y="238.55" x="10.00" height="1" width="5.00" fill="#707070"/><rect y="243.44" x="12.50" height="1" width="2.50" fill="#707070"/><rect y="248.33" x="12.50" height="1" width="2.50" fill="#707070"/><rect y="253.22" x="12.50" height="1" width="2.50" fill="#707070"/><rect y="258.11" x="12.50" height="1" width="2.50" fill="#707070"/><rect y="263.00" x="0.00" height="1" width="15.00" fill="#707070"/><rect y="267.89" x="12.50" height="1" width="2.50" fill="#707070"/><rect y="272.78" x="12.50" height="1" width="2.50" fill="#707070"/><rect y="277.67" x="12.50" height="1" width="2.50" fill="#707070"/><rect y="282.56" x="12.50" height="1" width="2.50" fill="#707070"/><rect y="287.45" x="10.00" height="1" width="5.00" fill="#707070"/><rect y="292.34" x="12.50" height="1" width="2.50" fill="#707070"/><rect y="297.23" x="12.50" height="1" width="2.50" fill="#707070"/><rect y="302.12" x="12.50" height="1" width="2.50" fill="#707070"/><rect y="307.01" x="12.50" height="1" width="2.50" fill="#707070"/><rect y="311.90" x="0.00" height="1" width="15.00" fill="#707070"/><rect y="316.79" x="12.50" height="1" width="2.50" fill="#707070"/><rect y="321.68" x="12.50" height="1" width="2.50" fill="#707070"/><rect y="326.57" x="12.50" height="1" width="2.50" fill="#707070"/><rect y="331.46" x="12.50" height="1" width="2.50" fill="#707070"/><rect y="336.35" x="10.00" height="1" width="5.00" fill="#707070"/><rect y="341.24" x="12.50" height="1" width="2.50" fill="#707070"/><rect y="346.13" x="12.50" height="1" width="2.50" fill="#707070"/><rect y="351.02" x="12.50" height="1" width="2.50" fill="#707070"/><rect y="355.91" x="12.50" height="1" width="2.50" fill="#707070"/><rect y="360.80" x="0.00" height="1" width="15.00" fill="#707070"/><rect y="365.69" x="12.50" height="1" width="2.50" fill="#707070"/><rect y="370.58" x="12.50" height="1" width="2.50" fill="#707070"/><rect y="375.47" x="12.50" height="1" width="2.50" fill="#707070"/><rect y="380.36" x="12.50" height="1" width="2.50" fill="#707070"/><rect y="385.25" x="10.00" height="1" width="5.00" fill="#707070"/><rect y="390.14" x="12.50" height="1" width="2.50" fill="#707070"/><rect y="395.03" x="12.50" height="1" width="2.50" fill="#707070"/><rect y="399.92" x="12.50" height="1" width="2.50" fill="#707070"/><rect y="404.81" x="12.50" height="1" width="2.50" fill="#707070"/><rect y="409.70" x="0.00" height="1" width="15.00" fill="#707070"/><rect y="414.59" x="12.50" height="1" width="2.50" fill="#707070"/><rect y="419.48" x="12.50" height="1" width="2.50" fill="#707070"/><rect y="424.37" x="12.50" height="1" width="2.50" fill="#707070"/><rect y="429.26" x="12.50" height="1" width="2.50" fill="#707070"/><rect y="434.15" x="10.00" height="1" width="5.00" fill="#707070"/><rect y="439.04" x="12.50" height="1" width="2.50" fill="#707070"/><rect y="443.93" x="12.50" height="1" width="2.50" fill="#707070"/><rect y="448.82" x="12.50" height="1" width="2.50" fill="#707070"/><rect y="453.71" x="12.50" height="1" width="2.50" fill="#707070"/><rect y="458.60" x="0.00" height="1" width="15.00" fill="#707070"/><rect y="463.49" x="12.50" height="1" width="2.50" fill="#707070"/><rect y="468.38" x="12.50" height="1" width="2.50" fill="#707070"/><rect y="473.27" x="12.50" height="1" width="2.50" fill="#707070"/><rect y="478.16" x="12.50" height="1" width="2.50" fill="#707070"/><rect y="483.05" x="10.00" height="1" width="5.00" fill="#707070"/><rect y="487.94" x="12.50" height="1" width="2.50" fill="#707070"/><rect y="492.83" x="12.50" height="1" width="2.50" fill="#707070"/><rect y="497.72" x="12.50" height="1" width="2.50" fill="#707070"/><rect y="502.61" x="12.50" height="1" width="2.50" fill="#707070"/><rect y="507.50" x="0.00" height="1" width="15.00" fill="#707070"/><rect y="512.39" x="12.50" height="1" width="2.50" fill="#707070"/><rect y="517.28" x="12.50" height="1" width="2.50" fill="#707070"/><rect y="522.17" x="12.50" height="1" width="2.50" fill="#707070"/></svg>
<div class="a" style="left:37px;top:96px;width:15px;height:528px;overflow:hidden">
<span class="t" style="left:0.7px;top:-4.6px;font-size:11px;color:#a6aeb6;transform:scaleX(0.948);transform-origin:0 0;">0</span>
<span class="t" style="left:0.7px;top:21.9px;font-size:11px;color:#a6aeb6;transform:scaleX(0.948);transform-origin:0 0;">0</span>
<span class="t" style="left:0.7px;top:70.8px;font-size:11px;color:#a6aeb6;transform:scaleX(0.948);transform-origin:0 0;">2</span>
<span class="t" style="left:0.7px;top:82px;font-size:11px;color:#a6aeb6;transform:scaleX(0.948);transform-origin:0 0;">0</span>
<span class="t" style="left:0.7px;top:93.2px;font-size:11px;color:#a6aeb6;transform:scaleX(0.948);transform-origin:0 0;">0</span>
<span class="t" style="left:0.7px;top:119.7px;font-size:11px;color:#a6aeb6;transform:scaleX(0.948);transform-origin:0 0;">4</span>
<span class="t" style="left:0.7px;top:130.9px;font-size:11px;color:#a6aeb6;transform:scaleX(0.948);transform-origin:0 0;">0</span>
<span class="t" style="left:0.7px;top:142.1px;font-size:11px;color:#a6aeb6;transform:scaleX(0.948);transform-origin:0 0;">0</span>
<span class="t" style="left:0.7px;top:168.6px;font-size:11px;color:#a6aeb6;transform:scaleX(0.948);transform-origin:0 0;">6</span>
<span class="t" style="left:0.7px;top:179.8px;font-size:11px;color:#a6aeb6;transform:scaleX(0.948);transform-origin:0 0;">0</span>
<span class="t" style="left:0.7px;top:191px;font-size:11px;color:#a6aeb6;transform:scaleX(0.948);transform-origin:0 0;">0</span>
<span class="t" style="left:0.7px;top:217.5px;font-size:11px;color:#a6aeb6;transform:scaleX(0.948);transform-origin:0 0;">8</span>
<span class="t" style="left:0.7px;top:228.7px;font-size:11px;color:#a6aeb6;transform:scaleX(0.948);transform-origin:0 0;">0</span>
<span class="t" style="left:0.7px;top:239.9px;font-size:11px;color:#a6aeb6;transform:scaleX(0.948);transform-origin:0 0;">0</span>
<span class="t" style="left:0.7px;top:266.4px;font-size:11px;color:#a6aeb6;transform:scaleX(0.948);transform-origin:0 0;">1</span>
<span class="t" style="left:0.7px;top:277.6px;font-size:11px;color:#a6aeb6;transform:scaleX(0.948);transform-origin:0 0;">0</span>
<span class="t" style="left:0.7px;top:288.8px;font-size:11px;color:#a6aeb6;transform:scaleX(0.948);transform-origin:0 0;">0</span>
<span class="t" style="left:0.7px;top:300px;font-size:11px;color:#a6aeb6;transform:scaleX(0.948);transform-origin:0 0;">0</span>
<span class="t" style="left:0.7px;top:315.3px;font-size:11px;color:#a6aeb6;transform:scaleX(0.948);transform-origin:0 0;">1</span>
<span class="t" style="left:0.7px;top:326.5px;font-size:11px;color:#a6aeb6;transform:scaleX(0.948);transform-origin:0 0;">2</span>
<span class="t" style="left:0.7px;top:337.7px;font-size:11px;color:#a6aeb6;transform:scaleX(0.948);transform-origin:0 0;">0</span>
<span class="t" style="left:0.7px;top:348.9px;font-size:11px;color:#a6aeb6;transform:scaleX(0.948);transform-origin:0 0;">0</span>
<span class="t" style="left:0.7px;top:364.2px;font-size:11px;color:#a6aeb6;transform:scaleX(0.948);transform-origin:0 0;">1</span>
<span class="t" style="left:0.7px;top:375.4px;font-size:11px;color:#a6aeb6;transform:scaleX(0.948);transform-origin:0 0;">4</span>
<span class="t" style="left:0.7px;top:386.6px;font-size:11px;color:#a6aeb6;transform:scaleX(0.948);transform-origin:0 0;">0</span>
<span class="t" style="left:0.7px;top:397.8px;font-size:11px;color:#a6aeb6;transform:scaleX(0.948);transform-origin:0 0;">0</span>
<span class="t" style="left:0.7px;top:413.1px;font-size:11px;color:#a6aeb6;transform:scaleX(0.948);transform-origin:0 0;">1</span>
<span class="t" style="left:0.7px;top:424.3px;font-size:11px;color:#a6aeb6;transform:scaleX(0.948);transform-origin:0 0;">6</span>
<span class="t" style="left:0.7px;top:435.5px;font-size:11px;color:#a6aeb6;transform:scaleX(0.948);transform-origin:0 0;">0</span>
<span class="t" style="left:0.7px;top:446.7px;font-size:11px;color:#a6aeb6;transform:scaleX(0.948);transform-origin:0 0;">0</span>
<span class="t" style="left:0.7px;top:462px;font-size:11px;color:#a6aeb6;transform:scaleX(0.948);transform-origin:0 0;">1</span>
<span class="t" style="left:0.7px;top:473.2px;font-size:11px;color:#a6aeb6;transform:scaleX(0.948);transform-origin:0 0;">8</span>
<span class="t" style="left:0.7px;top:484.4px;font-size:11px;color:#a6aeb6;transform:scaleX(0.948);transform-origin:0 0;">0</span>
<span class="t" style="left:0.7px;top:495.6px;font-size:11px;color:#a6aeb6;transform:scaleX(0.948);transform-origin:0 0;">0</span>
<span class="t" style="left:0.7px;top:510.9px;font-size:11px;color:#a6aeb6;transform:scaleX(0.948);transform-origin:0 0;">2</span>
<span class="t" style="left:0.7px;top:522.1px;font-size:11px;color:#a6aeb6;transform:scaleX(0.948);transform-origin:0 0;">0</span>
</div>
<svg class="a" style="left:79px;top:114px" width="493" height="491" viewBox="0 0 493 491"><rect x="0.4" y="0" width="491.4" height="491" fill="#101010"/><rect x="1.4" y="1" width="489.4" height="489" fill="#fef6ea"/><g transform="translate(1.5,0.5)"><path d="M84.5 351.5 L84.5 147.5 A78.5 78.5 0 0 1 241.5 147.5 L241.5 351.5 Z" fill="#f8d6cc"/><path d="M21.5 127.25 C27 131 33 132.5 39.5 134.25 C45 136 51 138 57 140.5 C65 143.5 72 146.5 79.5 150.5 C87 154.5 94 159.5 99.5 165.5 C106 172 111 178.5 114.5 185.5 C118 193 120.5 200 122 208 C123.5 216 124.5 224 125.5 233 C121 229 118 226 114.5 223 C110 219.5 106 216.5 102 213 C95 207.5 88.5 201.5 82 195.5 C73 188.5 65 182 57 175.5 C48 167.5 39.5 159.5 32 150.5 C28.5 146 26 142 24.5 138 C23 134 22 130.5 21.5 127.25 Z" fill="#8b9e94"/><path d="M125.5 233 C116.5 265 111.5 300 117.5 345" stroke="#8b9e94" stroke-width="2" fill="none"/><path d="M127.5 90 C122.5 100 122.5 118 127.5 128 Z" fill="#8b9e94"/><path d="M122 322 L128 322 L128 334 Z" fill="#b4551a"/><path d="M124 327 L89.5 426 L160 434 L160 327 Z" fill="#8b9e94"/><circle cx="86" cy="452.5" r="9" fill="#8b9e94"/></g></svg>
<div class="a" style="left:600px;top:81px;width:14px;height:543px;background:#535353;"></div>
<svg class="a" style="left:603.5px;top:88px;" width="8" height="5" viewBox="0 0 8 5"><path d="M0.7 4.3 L4 1 L7.3 4.3" stroke="#bdbdbd" stroke-width="1.1" fill="none"/></svg>
<div class="a" style="left:37px;top:624px;width:577px;height:16px;background:#535353;"></div>
<div class="a" style="left:37px;top:624px;width:44px;height:16px;background:#4a4a4a;"></div>
<span class="t" style="left:41.5px;top:626.8px;font-size:11px;color:#e2e2e2;transform:scaleX(0.871);transform-origin:0 0;">33.33%</span>
<span class="t" style="left:108.5px;top:627.1px;font-size:11px;color:#dcdcdc;transform:scaleX(0.756);transform-origin:0 0;">2000 px x 2000 px (72 ppi)</span>
<div class="a" style="left:207px;top:136px;width:408px;height:490px;background:#383838;"></div>
<div class="a" style="left:207px;top:136px;width:408px;height:1px;background:#262626;"></div>
<div class="a" style="left:207px;top:137px;width:408px;height:1px;background:#2f2f2f;"></div>
<div class="a" style="left:208.6px;top:139px;width:405.4px;height:485.5px;background:#535353;"></div>
<div class="a" style="left:208.6px;top:139px;width:405.4px;height:26px;background:#424242;"></div>
<div class="a" style="left:208.6px;top:139px;width:77.9px;height:26.5px;background:#535353;"></div>
<div class="a" style="left:336px;top:139px;width:1px;height:26px;background:#393939;"></div>
<div class="a" style="left:286.5px;top:164px;width:327.5px;height:1px;background:#3a3a3a;"></div>
<span class="t" style="left:217px;top:145.55px;font-size:10.5px;color:#f6f6f6;font-weight:bold;will-change:transform;transform:scaleX(0.830);transform-origin:0 0;">Brush Settings</span>
<span class="t" style="left:294.5px;top:145.55px;font-size:10.5px;color:#b4b4b4;font-weight:bold;will-change:transform;transform:scaleX(0.797);transform-origin:0 0;">Brushes</span>
<svg class="a" style="left:584px;top:147.5px;" width="9" height="8" viewBox="0 0 9 8"><path d="M0.7 0.7 L3.6 4 L0.7 7.3 M4.7 0.7 L7.6 4 L4.7 7.3" stroke="#cfcfcf" stroke-width="1.1" fill="none"/></svg>
<div class="a" style="left:597.5px;top:145.5px;width:1px;height:12px;background:#9a9a9a;"></div>
<svg class="a" style="left:603px;top:148.5px;" width="8" height="6" viewBox="0 0 8 6"><path d="M0 0.7 H8 M0 2.3 H8 M0 3.9 H8 M0 5.5 H8" stroke="#8e8e8e" stroke-width="1"/></svg>
<div class="a" style="left:245.5px;top:175.5px;width:53px;height:18.5px;background:#454545;border:1px solid #5c5c5c;border-radius:3px"></div>
<span class="t" style="left:255px;top:179.5px;font-size:11px;color:#f0f0f0;transform:scaleX(0.818);transform-origin:0 0;">Brushes</span>
<div class="a" style="left:214px;top:203.5px;width:118px;height:228px;background:#4f4f4f;border:1px solid #474747"></div>
<div class="a" style="left:215px;top:204px;width:116px;height:17.5px;background:#6b6b6b;"></div>
<span class="t" style="left:240px;top:207.7px;font-size:11px;color:#f2f2f2;transform:scaleX(0.812);transform-origin:0 0;">Brush Tip Shape</span>
<div class="a" style="left:224px;top:227.11px;width:9px;height:9px;background:#f4f4f4;border-radius:2px"></div>
<svg class="a" style="left:224px;top:227.11px;" width="9" height="9" viewBox="0 0 9 9"><path d="M1.8 4.6 L3.8 6.8 L7.4 2" stroke="#222" stroke-width="1.5" fill="none"/></svg>
<span class="t" style="left:237.5px;top:226.11px;font-size:11px;color:#ececec;transform:scaleX(0.818);transform-origin:0 0;">Shape Dynamics</span>
<svg class="a" style="left:315.3px;top:223.71px;" width="11.5" height="13" viewBox="0 0 11.5 13"><rect x="1.2" y="5.6" width="9" height="6.4" rx="1" fill="none" stroke="#e0e0e0" stroke-width="1.25"/><path d="M2.9 4.4 L2.9 3.6 C2.9 0.2 8 0.2 8 3.6 L8 5.4" fill="none" stroke="#e0e0e0" stroke-width="1.25"/><rect x="4.8" y="7.8" width="1.8" height="2.1" fill="#e0e0e0"/></svg>
<div class="a" style="left:215px;top:238.92px;width:116px;height:1px;background:#474747;"></div>
<div class="a" style="left:224px;top:243.73px;width:9px;height:9px;background:#4d4d4d;border:1px solid #707070;border-radius:2px"></div>
<span class="t" style="left:237.5px;top:242.73px;font-size:11px;color:#ececec;transform:scaleX(0.818);transform-origin:0 0;">Scattering</span>
<svg class="a" style="left:315.3px;top:240.33px;" width="11.5" height="13" viewBox="0 0 11.5 13"><rect x="1.2" y="5.6" width="9" height="6.4" rx="1" fill="none" stroke="#e0e0e0" stroke-width="1.25"/><path d="M2.9 4.4 L2.9 3.6 C2.9 0.2 8 0.2 8 3.6 L8 5.4" fill="none" stroke="#e0e0e0" stroke-width="1.25"/><rect x="4.8" y="7.8" width="1.8" height="2.1" fill="#e0e0e0"/></svg>
<div class="a" style="left:215px;top:256.34px;width:116px;height:1px;background:#474747;"></div>
<div class="a" style="left:224px;top:261.15px;width:9px;height:9px;background:#4d4d4d;border:1px solid #707070;border-radius:2px"></div>
<span class="t" style="left:237.5px;top:260.15px;font-size:11px;color:#ececec;transform:scaleX(0.859);transform-origin:0 0;">Texture</span>
<svg class="a" style="left:315.3px;top:257.75px;" width="11.5" height="13" viewBox="0 0 11.5 13"><rect x="1.2" y="5.6" width="9" height="6.4" rx="1" fill="none" stroke="#e0e0e0" stroke-width="1.25"/><path d="M2.9 4.4 L2.9 3.6 C2.9 0.2 8 0.2 8 3.6 L8 5.4" fill="none" stroke="#e0e0e0" stroke-width="1.25"/><rect x="4.8" y="7.8" width="1.8" height="2.1" fill="#e0e0e0"/></svg>
<div class="a" style="left:215px;top:273.76px;width:116px;height:1px;background:#474747;"></div>
<div class="a" style="left:224px;top:278.57px;width:9px;height:9px;background:#4d4d4d;border:1px solid #707070;border-radius:2px"></div>
<span class="t" style="left:237.5px;top:277.57px;font-size:11px;color:#ececec;transform:scaleX(0.809);transform-origin:0 0;">Dual Brush</span>
<svg class="a" style="left:315.3px;top:275.17px;" width="11.5" height="13" viewBox="0 0 11.5 13"><rect x="1.2" y="5.6" width="9" height="6.4" rx="1" fill="none" stroke="#e0e0e0" stroke-width="1.25"/><path d="M2.9 4.4 L2.9 3.6 C2.9 0.2 8 0.2 8 3.6 L8 5.4" fill="none" stroke="#e0e0e0" stroke-width="1.25"/><rect x="4.8" y="7.8" width="1.8" height="2.1" fill="#e0e0e0"/></svg>
<div class="a" style="left:215px;top:291.18px;width:116px;height:1px;background:#474747;"></div>
<div class="a" style="left:224px;top:295.99px;width:9px;height:9px;background:#4d4d4d;border:1px solid #707070;border-radius:2px"></div>
<span class="t" style="left:237.5px;top:294.99px;font-size:11px;color:#ececec;transform:scaleX(0.812);transform-origin:0 0;">Color Dynamics</span>
<svg class="a" style="left:315.3px;top:292.59px;" width="11.5" height="13" viewBox="0 0 11.5 13"><rect x="1.2" y="5.6" width="9" height="6.4" rx="1" fill="none" stroke="#e0e0e0" stroke-width="1.25"/><path d="M2.9 4.4 L2.9 3.6 C2.9 0.2 8 0.2 8 3.6 L8 5.4" fill="none" stroke="#e0e0e0" stroke-width="1.25"/><rect x="4.8" y="7.8" width="1.8" height="2.1" fill="#e0e0e0"/></svg>
<div class="a" style="left:215px;top:308.6px;width:116px;height:1px;background:#474747;"></div>
<div class="a" style="left:224px;top:313.41px;width:9px;height:9px;background:#4d4d4d;border:1px solid #707070;border-radius:2px"></div>
<span class="t" style="left:237.5px;top:312.41px;font-size:11px;color:#ececec;transform:scaleX(0.839);transform-origin:0 0;">Transfer</span>
<svg class="a" style="left:315.3px;top:310.01px;" width="11.5" height="13" viewBox="0 0 11.5 13"><rect x="1.2" y="5.6" width="9" height="6.4" rx="1" fill="none" stroke="#e0e0e0" stroke-width="1.25"/><path d="M2.9 4.4 L2.9 3.6 C2.9 0.2 8 0.2 8 3.6 L8 5.4" fill="none" stroke="#e0e0e0" stroke-width="1.25"/><rect x="4.8" y="7.8" width="1.8" height="2.1" fill="#e0e0e0"/></svg>
<div class="a" style="left:215px;top:326.02px;width:116px;height:1px;background:#474747;"></div>
<div class="a" style="left:224px;top:330.83px;width:9px;height:9px;background:#4d4d4d;border:1px solid #707070;border-radius:2px"></div>
<span class="t" style="left:237.5px;top:329.83px;font-size:11px;color:#ececec;transform:scaleX(0.800);transform-origin:0 0;">Brush Pose</span>
<svg class="a" style="left:315.3px;top:327.43px;" width="11.5" height="13" viewBox="0 0 11.5 13"><rect x="1.2" y="5.6" width="9" height="6.4" rx="1" fill="none" stroke="#e0e0e0" stroke-width="1.25"/><path d="M2.9 4.4 L2.9 3.6 C2.9 0.2 8 0.2 8 3.6 L8 5.4" fill="none" stroke="#e0e0e0" stroke-width="1.25"/><rect x="4.8" y="7.8" width="1.8" height="2.1" fill="#e0e0e0"/></svg>
<div class="a" style="left:215px;top:343.44px;width:116px;height:1px;background:#474747;"></div>
<div class="a" style="left:224px;top:348.25px;width:9px;height:9px;background:#4d4d4d;border:1px solid #707070;border-radius:2px"></div>
<span class="t" style="left:237.5px;top:347.25px;font-size:11px;color:#ececec;transform:scaleX(0.818);transform-origin:0 0;">Noise</span>
<svg class="a" style="left:315.3px;top:344.85px;" width="11.5" height="13" viewBox="0 0 11.5 13"><rect x="1.2" y="5.6" width="9" height="6.4" rx="1" fill="none" stroke="#e0e0e0" stroke-width="1.25"/><path d="M2.9 4.4 L2.9 3.6 C2.9 0.2 8 0.2 8 3.6 L8 5.4" fill="none" stroke="#e0e0e0" stroke-width="1.25"/><rect x="4.8" y="7.8" width="1.8" height="2.1" fill="#e0e0e0"/></svg>
<div class="a" style="left:215px;top:360.86px;width:116px;height:1px;background:#474747;"></div>
<div class="a" style="left:224px;top:365.67px;width:9px;height:9px;background:#4d4d4d;border:1px solid #707070;border-radius:2px"></div>
<span class="t" style="left:237.5px;top:364.67px;font-size:11px;color:#ececec;transform:scaleX(0.812);transform-origin:0 0;">Wet Edges</span>
<svg class="a" style="left:315.3px;top:362.27px;" width="11.5" height="13" viewBox="0 0 11.5 13"><rect x="1.2" y="5.6" width="9" height="6.4" rx="1" fill="none" stroke="#e0e0e0" stroke-width="1.25"/><path d="M2.9 4.4 L2.9 3.6 C2.9 0.2 8 0.2 8 3.6 L8 5.4" fill="none" stroke="#e0e0e0" stroke-width="1.25"/><rect x="4.8" y="7.8" width="1.8" height="2.1" fill="#e0e0e0"/></svg>
<div class="a" style="left:215px;top:378.28px;width:116px;height:1px;background:#474747;"></div>
<div class="a" style="left:224px;top:383.09px;width:9px;height:9px;background:#4d4d4d;border:1px solid #707070;border-radius:2px"></div>
<span class="t" style="left:237.5px;top:382.09px;font-size:11px;color:#ececec;transform:scaleX(0.818);transform-origin:0 0;">Build-up</span>
<svg class="a" style="left:315.3px;top:379.69px;" width="11.5" height="13" viewBox="0 0 11.5 13"><rect x="1.2" y="5.6" width="9" height="6.4" rx="1" fill="none" stroke="#e0e0e0" stroke-width="1.25"/><path d="M2.9 4.4 L2.9 3.6 C2.9 0.2 8 0.2 8 3.6 L8 5.4" fill="none" stroke="#e0e0e0" stroke-width="1.25"/><rect x="4.8" y="7.8" width="1.8" height="2.1" fill="#e0e0e0"/></svg>
<div class="a" style="left:215px;top:395.7px;width:116px;height:1px;background:#474747;"></div>
<div class="a" style="left:224px;top:400.51px;width:9px;height:9px;background:#f4f4f4;border-radius:2px"></div>
<svg class="a" style="left:224px;top:400.51px;" width="9" height="9" viewBox="0 0 9 9"><path d="M1.8 4.6 L3.8 6.8 L7.4 2" stroke="#222" stroke-width="1.5" fill="none"/></svg>
<span class="t" style="left:237.5px;top:399.51px;font-size:11px;color:#ececec;transform:scaleX(0.827);transform-origin:0 0;">Smoothing</span>
<svg class="a" style="left:315.3px;top:397.11px;" width="11.5" height="13" viewBox="0 0 11.5 13"><rect x="1.2" y="5.6" width="9" height="6.4" rx="1" fill="none" stroke="#e0e0e0" stroke-width="1.25"/><path d="M2.9 4.4 L2.9 3.6 C2.9 0.2 8 0.2 8 3.6 L8 5.4" fill="none" stroke="#e0e0e0" stroke-width="1.25"/><rect x="4.8" y="7.8" width="1.8" height="2.1" fill="#e0e0e0"/></svg>
<div class="a" style="left:215px;top:413.12px;width:116px;height:1px;background:#474747;"></div>
<div class="a" style="left:224px;top:417.93px;width:9px;height:9px;background:#4d4d4d;border:1px solid #707070;border-radius:2px"></div>
<span class="t" style="left:237.5px;top:416.93px;font-size:11px;color:#ececec;transform:scaleX(0.847);transform-origin:0 0;">Protect Texture</span>
<svg class="a" style="left:315.3px;top:414.53px;" width="11.5" height="13" viewBox="0 0 11.5 13"><rect x="1.2" y="5.6" width="9" height="6.4" rx="1" fill="none" stroke="#e0e0e0" stroke-width="1.25"/><path d="M2.9 4.4 L2.9 3.6 C2.9 0.2 8 0.2 8 3.6 L8 5.4" fill="none" stroke="#e0e0e0" stroke-width="1.25"/><rect x="4.8" y="7.8" width="1.8" height="2.1" fill="#e0e0e0"/></svg>
<div class="a" style="left:342px;top:174.3px;width:265.5px;height:98.7px;background:#474747;"></div>
<svg class="a" style="left:342px;top:175px" width="265" height="98" viewBox="0 0 265 98">
<rect x="1.30" y="1.20" width="28" height="28.1" fill="#4e4e4e"/><rect x="1.30" y="30.55" width="28" height="28.1" fill="#4e4e4e"/><rect x="1.30" y="59.90" width="28" height="28.1" fill="#4e4e4e"/><rect x="1.30" y="89.25" width="28" height="28.1" fill="#4e4e4e"/><rect x="30.65" y="1.20" width="28" height="28.1" fill="#4e4e4e"/><rect x="30.65" y="30.55" width="28" height="28.1" fill="#4e4e4e"/><rect x="30.65" y="59.90" width="28" height="28.1" fill="#4e4e4e"/><rect x="30.65" y="89.25" width="28" height="28.1" fill="#4e4e4e"/><rect x="60.00" y="1.20" width="28" height="28.1" fill="#4e4e4e"/><rect x="60.00" y="30.55" width="28" height="28.1" fill="#4e4e4e"/><rect x="60.00" y="59.90" width="28" height="28.1" fill="#4e4e4e"/><rect x="60.00" y="89.25" width="28" height="28.1" fill="#4e4e4e"/><rect x="89.35" y="1.20" width="28" height="28.1" fill="#4e4e4e"/><rect x="89.35" y="30.55" width="28" height="28.1" fill="#4e4e4e"/><rect x="89.35" y="59.90" width="28" height="28.1" fill="#4e4e4e"/><rect x="89.35" y="89.25" width="28" height="28.1" fill="#4e4e4e"/><rect x="118.70" y="1.20" width="28" height="28.1" fill="#4e4e4e"/><rect x="118.70" y="30.55" width="28" height="28.1" fill="#4e4e4e"/><rect x="118.70" y="59.90" width="28" height="28.1" fill="#4e4e4e"/><rect x="118.70" y="89.25" width="28" height="28.1" fill="#4e4e4e"/><rect x="148.05" y="1.20" width="28" height="28.1" fill="#4e4e4e"/><rect x="148.05" y="30.55" width="28" height="28.1" fill="#4e4e4e"/><rect x="148.05" y="59.90" width="28" height="28.1" fill="#4e4e4e"/><rect x="148.05" y="89.25" width="28" height="28.1" fill="#4e4e4e"/><rect x="177.40" y="1.20" width="28" height="28.1" fill="#4e4e4e"/><rect x="177.40" y="30.55" width="28" height="28.1" fill="#4e4e4e"/><rect x="177.40" y="59.90" width="28" height="28.1" fill="#4e4e4e"/><rect x="177.40" y="89.25" width="28" height="28.1" fill="#4e4e4e"/><rect x="206.75" y="1.20" width="28" height="28.1" fill="#4e4e4e"/><rect x="206.75" y="30.55" width="28" height="28.1" fill="#4e4e4e"/><rect x="206.75" y="59.90" width="28" height="28.1" fill="#4e4e4e"/><rect x="206.75" y="89.25" width="28" height="28.1" fill="#4e4e4e"/><rect x="236.10" y="0" width="16" height="98" fill="#4e4e4e"/><defs><radialGradient id="soft"><stop offset="0" stop-color="#fff"/><stop offset="0.35" stop-color="#ddd"/><stop offset="1" stop-color="#4a4a4a"/></radialGradient><radialGradient id="soft2"><stop offset="0.6" stop-color="#fff"/><stop offset="1" stop-color="#bbb"/></radialGradient></defs><circle cx="15.5" cy="10.6" r="8.5" fill="url(#soft)"/><circle cx="44.8" cy="10.6" r="8" fill="#fff"/><path d="M72.2 10.6 l3 -1.5 l1 2 l-0.5 2.5 l-2 -0.5 Z" fill="#f0f0f0"/><circle cx="103.5" cy="10.6" r="3" fill="#f0f0f0"/><path d="M127.9 9.6 l4 -5 l2 3 l6 -2 l-3 5 l3 2 l-6 1 l-3 5 l-2 -5 l-5 -1 Z" fill="#f0f0f0"/><rect x="127.9" y="7.0" width="2.1" height="2.1" fill="#f4f4f4"/><rect x="132.4" y="4.8" width="0.8" height="1.5" fill="#f4f4f4"/><rect x="138.9" y="8.9" width="2.2" height="1.0" fill="#f4f4f4"/><rect x="129.0" y="11.2" width="1.7" height="1.6" fill="#f4f4f4"/><rect x="136.6" y="10.8" width="1.2" height="2.1" fill="#f4f4f4"/><rect x="133.2" y="8.2" width="2.1" height="1.0" fill="#f4f4f4"/><rect x="130.8" y="9.2" width="0.8" height="2.0" fill="#f4f4f4"/><rect x="133.8" y="13.3" width="2.4" height="2.0" fill="#f4f4f4"/><rect x="131.0" y="16.3" width="1.7" height="1.7" fill="#f4f4f4"/><rect x="135.1" y="16.2" width="1.9" height="2.2" fill="#f4f4f4"/><rect x="136.3" y="8.6" width="1.4" height="1.0" fill="#f4f4f4"/><rect x="134.1" y="11.8" width="1.3" height="1.6" fill="#f4f4f4"/><rect x="139.5" y="10.7" width="1.3" height="1.2" fill="#f4f4f4"/><rect x="135.2" y="6.8" width="1.3" height="1.5" fill="#f4f4f4"/><rect x="132.3" y="9.2" width="2.4" height="0.8" fill="#f4f4f4"/><rect x="132.9" y="5.1" width="0.8" height="1.9" fill="#f4f4f4"/><rect x="128.8" y="14.0" width="0.8" height="0.9" fill="#f4f4f4"/><rect x="136.2" y="15.9" width="1.1" height="1.9" fill="#f4f4f4"/><rect x="139.9" y="8.1" width="1.4" height="1.3" fill="#f4f4f4"/><rect x="125.9" y="9.8" width="1.0" height="1.8" fill="#f4f4f4"/><rect x="135.0" y="5.3" width="0.9" height="2.1" fill="#f4f4f4"/><rect x="136.8" y="12.5" width="1.8" height="2.1" fill="#f4f4f4"/><rect x="128.8" y="15.5" width="1.7" height="1.2" fill="#f4f4f4"/><rect x="131.5" y="12.9" width="0.9" height="1.0" fill="#f4f4f4"/><rect x="129.9" y="5.0" width="1.1" height="0.9" fill="#f4f4f4"/><rect x="163.2" y="4.8" width="1.4" height="1.1" fill="#e8e8e8"/><rect x="167.7" y="9.6" width="1.4" height="1.7" fill="#e8e8e8"/><rect x="156.3" y="13.1" width="1.1" height="1.7" fill="#e8e8e8"/><rect x="160.6" y="6.1" width="1.5" height="1.6" fill="#e8e8e8"/><rect x="163.3" y="13.4" width="1.8" height="1.1" fill="#e8e8e8"/><rect x="163.4" y="5.3" width="1.9" height="1.2" fill="#e8e8e8"/><rect x="167.2" y="12.3" width="1.8" height="1.3" fill="#e8e8e8"/><rect x="164.2" y="11.0" width="1.6" height="1.1" fill="#e8e8e8"/><rect x="167.1" y="8.3" width="1.1" height="1.5" fill="#e8e8e8"/><rect x="156.3" y="13.7" width="2.0" height="1.4" fill="#e8e8e8"/><rect x="157.1" y="6.0" width="1.8" height="1.9" fill="#e8e8e8"/><rect x="166.0" y="10.2" width="1.6" height="1.1" fill="#e8e8e8"/><rect x="159.2" y="8.7" width="1.9" height="1.4" fill="#e8e8e8"/><rect x="166.1" y="12.6" width="1.2" height="1.0" fill="#e8e8e8"/><rect x="158.3" y="9.8" width="1.1" height="1.8" fill="#e8e8e8"/><rect x="160.9" y="9.0" width="1.8" height="0.8" fill="#e8e8e8"/><rect x="157.4" y="14.1" width="1.6" height="1.1" fill="#e8e8e8"/><rect x="157.6" y="12.0" width="1.0" height="1.9" fill="#e8e8e8"/><rect x="166.1" y="10.8" width="1.8" height="1.2" fill="#e8e8e8"/><rect x="165.2" y="9.3" width="2.1" height="1.8" fill="#e8e8e8"/><rect x="157.6" y="5.1" width="1.4" height="1.7" fill="#e8e8e8"/><rect x="162.9" y="5.8" width="1.4" height="1.6" fill="#e8e8e8"/><rect x="159.3" y="10.5" width="1.8" height="1.1" fill="#e8e8e8"/><rect x="154.2" y="10.0" width="1.0" height="0.8" fill="#e8e8e8"/><rect x="165.6" y="12.6" width="1.3" height="1.1" fill="#e8e8e8"/><rect x="153.9" y="11.2" width="1.1" height="1.3" fill="#e8e8e8"/><rect x="165.8" y="6.6" width="1.1" height="1.3" fill="#e8e8e8"/><rect x="158.2" y="9.9" width="1.3" height="1.1" fill="#e8e8e8"/><rect x="162.8" y="6.7" width="1.6" height="1.9" fill="#e8e8e8"/><rect x="165.6" y="8.0" width="1.6" height="1.2" fill="#e8e8e8"/><rect x="156.7" y="11.9" width="1.8" height="1.8" fill="#e8e8e8"/><rect x="161.1" y="10.0" width="1.4" height="0.9" fill="#e8e8e8"/><rect x="168.1" y="10.5" width="0.9" height="1.6" fill="#e8e8e8"/><rect x="156.2" y="13.7" width="1.9" height="0.9" fill="#e8e8e8"/><rect x="164.0" y="14.6" width="1.6" height="1.3" fill="#e8e8e8"/><rect x="162.7" y="4.7" width="1.4" height="1.3" fill="#e8e8e8"/><rect x="165.1" y="11.5" width="1.0" height="1.5" fill="#e8e8e8"/><rect x="158.8" y="8.3" width="1.6" height="0.9" fill="#e8e8e8"/><rect x="166.3" y="12.3" width="1.4" height="1.8" fill="#e8e8e8"/><rect x="156.6" y="6.3" width="1.0" height="1.7" fill="#e8e8e8"/><rect x="166.7" y="11.8" width="2.0" height="1.8" fill="#e8e8e8"/><rect x="165.4" y="7.3" width="1.7" height="1.7" fill="#e8e8e8"/><rect x="166.3" y="13.7" width="2.0" height="1.3" fill="#e8e8e8"/><rect x="162.2" y="6.0" width="1.2" height="1.6" fill="#e8e8e8"/><rect x="167.8" y="11.5" width="2.1" height="1.1" fill="#e8e8e8"/><rect x="163.4" y="9.0" width="1.9" height="1.1" fill="#e8e8e8"/><rect x="166.4" y="8.8" width="2.0" height="0.8" fill="#e8e8e8"/><rect x="167.4" y="12.1" width="1.6" height="1.4" fill="#e8e8e8"/><rect x="164.5" y="10.1" width="1.3" height="0.9" fill="#e8e8e8"/><rect x="168.2" y="9.4" width="2.0" height="1.6" fill="#e8e8e8"/><rect x="160.0" y="10.9" width="1.7" height="0.9" fill="#e8e8e8"/><rect x="156.0" y="8.5" width="1.4" height="0.9" fill="#e8e8e8"/><rect x="166.4" y="11.4" width="0.8" height="1.4" fill="#e8e8e8"/><rect x="163.7" y="12.0" width="1.0" height="1.4" fill="#e8e8e8"/><rect x="158.3" y="11.3" width="1.1" height="1.4" fill="#e8e8e8"/><rect x="165.6" y="7.7" width="1.0" height="1.2" fill="#e8e8e8"/><rect x="161.6" y="13.8" width="1.8" height="1.4" fill="#e8e8e8"/><rect x="163.0" y="12.5" width="1.3" height="1.3" fill="#e8e8e8"/><rect x="154.8" y="12.9" width="1.5" height="1.5" fill="#e8e8e8"/><rect x="159.9" y="5.3" width="1.8" height="1.2" fill="#e8e8e8"/><rect x="157.3" y="4.9" width="1.0" height="1.5" fill="#e8e8e8"/><rect x="159.7" y="10.5" width="0.9" height="1.7" fill="#e8e8e8"/><rect x="166.3" y="12.7" width="0.9" height="1.2" fill="#e8e8e8"/><rect x="167.0" y="10.4" width="1.8" height="1.1" fill="#e8e8e8"/><rect x="154.2" y="7.5" width="1.2" height="1.3" fill="#e8e8e8"/><rect x="160.0" y="4.6" width="1.0" height="1.5" fill="#e8e8e8"/><rect x="163.2" y="10.9" width="2.1" height="0.9" fill="#e8e8e8"/><rect x="167.3" y="7.3" width="1.7" height="1.6" fill="#e8e8e8"/><rect x="158.7" y="7.2" width="1.4" height="1.0" fill="#e8e8e8"/><rect x="165.7" y="5.8" width="1.8" height="1.0" fill="#e8e8e8"/><circle cx="191.6" cy="10.6" r="8" fill="#e9e9e9"/><rect x="189.9" y="12.5" width="1.3" height="0.8" fill="#4a4a4a"/><rect x="186.9" y="9.2" width="0.8" height="1.1" fill="#4a4a4a"/><rect x="195.6" y="11.2" width="0.9" height="0.9" fill="#4a4a4a"/><rect x="185.4" y="13.0" width="0.9" height="0.9" fill="#4a4a4a"/><rect x="186.3" y="5.2" width="1.2" height="1.0" fill="#4a4a4a"/><rect x="192.6" y="9.9" width="1.4" height="1.0" fill="#4a4a4a"/><rect x="192.6" y="12.0" width="1.0" height="1.3" fill="#4a4a4a"/><rect x="193.3" y="14.9" width="1.3" height="1.0" fill="#4a4a4a"/><rect x="189.4" y="9.6" width="0.8" height="0.9" fill="#4a4a4a"/><rect x="189.1" y="6.0" width="1.0" height="1.2" fill="#4a4a4a"/><rect x="187.4" y="11.2" width="1.4" height="1.2" fill="#4a4a4a"/><rect x="191.3" y="15.4" width="1.2" height="1.4" fill="#4a4a4a"/><rect x="190.6" y="6.4" width="1.5" height="0.9" fill="#4a4a4a"/><rect x="185.8" y="13.1" width="0.9" height="1.1" fill="#4a4a4a"/><rect x="196.6" y="11.5" width="1.4" height="1.2" fill="#4a4a4a"/><rect x="193.9" y="7.3" width="1.3" height="1.2" fill="#4a4a4a"/><rect x="186.9" y="7.8" width="1.4" height="1.4" fill="#4a4a4a"/><rect x="185.4" y="11.0" width="0.8" height="1.2" fill="#4a4a4a"/><rect x="186.9" y="4.5" width="1.4" height="1.0" fill="#4a4a4a"/><rect x="186.8" y="13.9" width="0.8" height="1.1" fill="#4a4a4a"/><rect x="192.3" y="12.2" width="0.8" height="1.3" fill="#4a4a4a"/><rect x="193.5" y="12.6" width="1.1" height="1.3" fill="#4a4a4a"/><rect x="195.2" y="12.4" width="1.2" height="1.4" fill="#4a4a4a"/><rect x="193.8" y="4.2" width="1.0" height="1.1" fill="#4a4a4a"/><rect x="186.9" y="15.2" width="1.5" height="0.9" fill="#4a4a4a"/><rect x="192.6" y="13.1" width="1.0" height="1.1" fill="#4a4a4a"/><rect x="188.0" y="8.2" width="0.8" height="1.1" fill="#4a4a4a"/><rect x="187.5" y="14.0" width="1.5" height="1.2" fill="#4a4a4a"/><rect x="185.6" y="9.6" width="1.3" height="0.8" fill="#4a4a4a"/><rect x="196.1" y="6.5" width="1.4" height="1.3" fill="#4a4a4a"/><rect x="187.6" y="12.9" width="0.9" height="1.2" fill="#4a4a4a"/><rect x="192.8" y="10.8" width="1.0" height="0.9" fill="#4a4a4a"/><rect x="190.2" y="11.5" width="0.8" height="0.9" fill="#4a4a4a"/><rect x="194.5" y="12.6" width="0.8" height="1.4" fill="#4a4a4a"/><rect x="189.0" y="8.3" width="1.0" height="1.0" fill="#4a4a4a"/><rect x="189.5" y="11.9" width="1.4" height="1.4" fill="#4a4a4a"/><rect x="186.3" y="11.1" width="0.9" height="0.9" fill="#4a4a4a"/><rect x="189.1" y="13.1" width="1.4" height="0.9" fill="#4a4a4a"/><rect x="197.8" y="11.1" width="1.2" height="0.9" fill="#4a4a4a"/><rect x="190.0" y="9.8" width="1.2" height="1.4" fill="#4a4a4a"/><rect x="194.9" y="5.7" width="1.0" height="1.0" fill="#4a4a4a"/><rect x="194.1" y="15.4" width="1.2" height="1.3" fill="#4a4a4a"/><rect x="189.5" y="13.0" width="1.4" height="1.4" fill="#4a4a4a"/><rect x="194.9" y="5.1" width="1.4" height="1.3" fill="#4a4a4a"/><rect x="191.8" y="15.1" width="1.1" height="0.8" fill="#4a4a4a"/><ellipse cx="220.9" cy="10.6" rx="11.5" ry="7.8" fill="#f2f2f2" transform="rotate(-10 220.9 10.6)"/><path d="M8.0 38.0 c1 -3 4 -5 7 -5.5 c3 -0.8 6 -1.2 7.5 0.2 c1 2 0 4 0.8 6 c0.8 2.5 0.2 5 -2 6.5 c-2.5 2 -5.5 3.5 -8.5 3.2 c-2.5 -0.6 -3.5 -3 -4.5 -5 c-0.8 -1.8 -1 -3.6 -0.3 -5.4 Z" fill="#fff"/><circle cx="44.8" cy="40.0" r="7.5" fill="#dcdcdc"/><rect x="38.7" y="40.4" width="1.4" height="0.9" fill="#f6f6f6"/><rect x="48.6" y="39.8" width="1.1" height="1.5" fill="#f6f6f6"/><rect x="42.3" y="34.0" width="1.3" height="1.4" fill="#f6f6f6"/><rect x="47.2" y="43.4" width="1.0" height="1.6" fill="#f6f6f6"/><rect x="50.2" y="41.9" width="0.9" height="1.4" fill="#f6f6f6"/><rect x="42.0" y="43.5" width="1.6" height="0.8" fill="#f6f6f6"/><rect x="50.5" y="42.1" width="1.3" height="0.9" fill="#f6f6f6"/><rect x="51.1" y="38.9" width="0.9" height="1.2" fill="#f6f6f6"/><rect x="46.9" y="42.6" width="1.4" height="0.9" fill="#f6f6f6"/><rect x="43.8" y="37.8" width="1.0" height="1.5" fill="#f6f6f6"/><rect x="40.7" y="42.3" width="1.4" height="1.2" fill="#f6f6f6"/><rect x="43.4" y="40.3" width="1.5" height="1.6" fill="#f6f6f6"/><rect x="50.0" y="38.5" width="1.1" height="1.1" fill="#f6f6f6"/><rect x="42.2" y="33.7" width="0.9" height="1.0" fill="#f6f6f6"/><rect x="41.1" y="43.5" width="1.6" height="1.2" fill="#f6f6f6"/><rect x="50.6" y="40.6" width="1.2" height="1.2" fill="#f6f6f6"/><rect x="45.1" y="44.3" width="1.2" height="1.4" fill="#f6f6f6"/><rect x="48.5" y="42.8" width="1.0" height="1.4" fill="#f6f6f6"/><rect x="47.9" y="40.4" width="1.1" height="1.3" fill="#f6f6f6"/><rect x="48.8" y="41.1" width="1.0" height="1.0" fill="#f6f6f6"/><rect x="37.5" y="40.5" width="1.3" height="1.6" fill="#f6f6f6"/><rect x="47.7" y="45.7" width="1.1" height="1.0" fill="#f6f6f6"/><rect x="44.3" y="32.3" width="0.8" height="1.0" fill="#f6f6f6"/><rect x="44.9" y="35.1" width="1.0" height="0.8" fill="#f6f6f6"/><rect x="49.7" y="40.9" width="1.7" height="1.6" fill="#f6f6f6"/><rect x="43.2" y="39.4" width="1.1" height="1.5" fill="#f6f6f6"/><rect x="47.1" y="34.2" width="1.0" height="1.2" fill="#f6f6f6"/><rect x="38.8" y="40.3" width="1.1" height="1.6" fill="#f6f6f6"/><rect x="46.5" y="37.6" width="1.1" height="1.5" fill="#f6f6f6"/><rect x="43.1" y="46.6" width="1.3" height="1.4" fill="#f6f6f6"/><rect x="43.4" y="36.1" width="1.1" height="1.0" fill="#f6f6f6"/><rect x="42.0" y="33.7" width="0.9" height="1.5" fill="#f6f6f6"/><rect x="41.3" y="41.2" width="1.2" height="1.6" fill="#f6f6f6"/><rect x="39.2" y="37.3" width="1.7" height="1.6" fill="#f6f6f6"/><rect x="44.6" y="34.6" width="1.4" height="1.6" fill="#f6f6f6"/><rect x="45.6" y="33.9" width="1.1" height="1.1" fill="#f6f6f6"/><rect x="43.9" y="33.8" width="0.8" height="1.4" fill="#f6f6f6"/><rect x="49.5" y="35.6" width="1.7" height="1.6" fill="#f6f6f6"/><rect x="38.3" y="38.0" width="1.2" height="0.9" fill="#f6f6f6"/><rect x="42.0" y="42.8" width="1.7" height="1.4" fill="#f6f6f6"/><rect x="72.7" y="41.7" width="1.9" height="2.0" fill="#f4f4f4"/><rect x="75.1" y="39.9" width="1.0" height="1.1" fill="#f4f4f4"/><rect x="72.8" y="36.3" width="1.7" height="1.1" fill="#f4f4f4"/><rect x="71.4" y="40.8" width="2.1" height="1.7" fill="#f4f4f4"/><rect x="78.4" y="38.2" width="1.0" height="2.0" fill="#f4f4f4"/><rect x="76.5" y="34.2" width="2.1" height="1.8" fill="#f4f4f4"/><rect x="81.6" y="36.7" width="1.2" height="2.0" fill="#f4f4f4"/><rect x="64.5" y="38.3" width="1.7" height="1.4" fill="#f4f4f4"/><rect x="68.9" y="40.2" width="1.3" height="1.0" fill="#f4f4f4"/><rect x="77.0" y="34.3" width="2.4" height="1.8" fill="#f4f4f4"/><rect x="65.0" y="36.6" width="1.0" height="1.7" fill="#f4f4f4"/><rect x="69.2" y="38.6" width="1.1" height="1.5" fill="#f4f4f4"/><rect x="73.0" y="41.0" width="1.8" height="1.4" fill="#f4f4f4"/><rect x="77.9" y="40.3" width="1.2" height="1.1" fill="#f4f4f4"/><rect x="75.2" y="40.5" width="0.9" height="1.7" fill="#f4f4f4"/><rect x="79.2" y="37.1" width="2.0" height="2.1" fill="#f4f4f4"/><rect x="76.8" y="38.4" width="2.1" height="2.0" fill="#f4f4f4"/><rect x="70.6" y="36.6" width="1.5" height="2.0" fill="#f4f4f4"/><rect x="79.9" y="35.3" width="1.1" height="2.0" fill="#f4f4f4"/><rect x="67.2" y="40.6" width="1.0" height="2.2" fill="#f4f4f4"/><rect x="66.4" y="35.6" width="1.1" height="1.7" fill="#f4f4f4"/><rect x="66.5" y="36.3" width="1.4" height="1.8" fill="#f4f4f4"/><rect x="70.2" y="40.0" width="1.1" height="1.8" fill="#f4f4f4"/><rect x="76.8" y="39.3" width="0.9" height="1.7" fill="#f4f4f4"/><rect x="66.3" y="36.8" width="0.9" height="1.4" fill="#f4f4f4"/><rect x="71.5" y="39.1" width="0.8" height="2.2" fill="#f4f4f4"/><rect x="77.1" y="39.7" width="1.2" height="1.6" fill="#f4f4f4"/><rect x="79.2" y="39.4" width="1.4" height="2.0" fill="#f4f4f4"/><rect x="79.0" y="38.0" width="1.6" height="2.2" fill="#f4f4f4"/><rect x="66.3" y="37.6" width="1.9" height="1.2" fill="#f4f4f4"/><rect x="80.1" y="38.6" width="2.3" height="1.8" fill="#f4f4f4"/><rect x="72.7" y="41.7" width="2.2" height="1.2" fill="#f4f4f4"/><rect x="68.1" y="36.5" width="1.2" height="1.2" fill="#f4f4f4"/><rect x="74.9" y="40.5" width="0.9" height="1.4" fill="#f4f4f4"/><rect x="80.6" y="40.0" width="1.8" height="0.8" fill="#f4f4f4"/><rect x="73.8" y="36.0" width="1.6" height="1.6" fill="#f4f4f4"/><rect x="70.5" y="40.1" width="1.5" height="1.0" fill="#f4f4f4"/><rect x="75.4" y="36.8" width="2.1" height="1.1" fill="#f4f4f4"/><rect x="71.1" y="40.6" width="0.9" height="1.0" fill="#f4f4f4"/><rect x="68.9" y="40.2" width="2.2" height="2.2" fill="#f4f4f4"/><rect x="80.2" y="38.8" width="1.0" height="1.9" fill="#f4f4f4"/><rect x="69.0" y="41.8" width="1.7" height="1.0" fill="#f4f4f4"/><rect x="78.2" y="38.0" width="2.2" height="1.0" fill="#f4f4f4"/><rect x="67.1" y="38.3" width="1.4" height="1.9" fill="#f4f4f4"/><rect x="75.1" y="41.7" width="1.9" height="2.1" fill="#f4f4f4"/><rect x="63.7" y="37.4" width="1.5" height="1.6" fill="#f4f4f4"/><rect x="66.5" y="35.1" width="2.2" height="1.0" fill="#f4f4f4"/><rect x="77.9" y="40.4" width="2.1" height="1.5" fill="#f4f4f4"/><rect x="70.2" y="42.2" width="1.3" height="0.9" fill="#f4f4f4"/><rect x="74.8" y="38.2" width="2.0" height="1.0" fill="#f4f4f4"/><rect x="71.2" y="33.9" width="2.4" height="1.9" fill="#f4f4f4"/><rect x="66.2" y="39.6" width="2.1" height="1.8" fill="#f4f4f4"/><rect x="71.0" y="41.8" width="1.0" height="1.2" fill="#f4f4f4"/><rect x="80.0" y="37.9" width="1.2" height="1.9" fill="#f4f4f4"/><rect x="72.6" y="38.0" width="0.8" height="1.2" fill="#f4f4f4"/><rect x="68.4" y="41.7" width="1.2" height="2.0" fill="#f4f4f4"/><rect x="77.1" y="35.6" width="2.4" height="1.9" fill="#f4f4f4"/><rect x="68.1" y="38.2" width="1.5" height="2.1" fill="#f4f4f4"/><rect x="68.9" y="37.5" width="1.4" height="1.5" fill="#f4f4f4"/><rect x="75.9" y="41.1" width="0.9" height="1.9" fill="#f4f4f4"/><rect x="81.4" y="44.0" width="1.8" height="2.1" fill="#f4f4f4"/><rect x="75.6" y="44.0" width="2.0" height="1.7" fill="#f4f4f4"/><rect x="74.0" y="45.1" width="1.4" height="1.9" fill="#f4f4f4"/><rect x="79.0" y="43.2" width="2.2" height="1.3" fill="#f4f4f4"/><rect x="75.7" y="45.5" width="1.8" height="1.0" fill="#f4f4f4"/><rect x="70.0" y="40.9" width="1.1" height="1.7" fill="#f4f4f4"/><rect x="79.5" y="43.6" width="0.9" height="1.1" fill="#f4f4f4"/><rect x="81.2" y="41.6" width="2.4" height="1.4" fill="#f4f4f4"/><rect x="70.3" y="39.6" width="1.9" height="1.0" fill="#f4f4f4"/><rect x="70.8" y="40.3" width="1.1" height="0.9" fill="#f4f4f4"/><rect x="80.2" y="39.9" width="1.1" height="1.4" fill="#f4f4f4"/><rect x="77.6" y="45.5" width="1.6" height="0.9" fill="#f4f4f4"/><rect x="77.2" y="40.9" width="1.2" height="0.8" fill="#f4f4f4"/><rect x="76.0" y="40.6" width="1.6" height="0.9" fill="#f4f4f4"/><rect x="69.6" y="42.4" width="1.7" height="1.4" fill="#f4f4f4"/><rect x="70.9" y="42.2" width="1.8" height="0.9" fill="#f4f4f4"/><rect x="72.3" y="42.3" width="2.2" height="2.1" fill="#f4f4f4"/><rect x="78.9" y="42.6" width="1.9" height="1.6" fill="#f4f4f4"/><rect x="82.8" y="42.4" width="2.3" height="1.4" fill="#f4f4f4"/><rect x="72.7" y="44.4" width="2.3" height="1.2" fill="#f4f4f4"/><rect x="75.1" y="43.6" width="1.8" height="1.5" fill="#f4f4f4"/><rect x="76.0" y="44.4" width="0.9" height="1.2" fill="#f4f4f4"/><rect x="82.3" y="41.6" width="1.3" height="2.1" fill="#f4f4f4"/><rect x="73.7" y="43.5" width="0.9" height="1.0" fill="#f4f4f4"/><rect x="77.4" y="43.8" width="2.2" height="1.2" fill="#f4f4f4"/><rect x="76.2" y="45.1" width="2.3" height="1.2" fill="#f4f4f4"/><rect x="76.5" y="39.5" width="1.7" height="1.6" fill="#f4f4f4"/><rect x="82.7" y="40.7" width="1.6" height="2.0" fill="#f4f4f4"/><rect x="72.9" y="43.8" width="2.3" height="1.6" fill="#f4f4f4"/><rect x="76.8" y="39.7" width="2.3" height="1.7" fill="#f4f4f4"/><rect x="76.3" y="45.8" width="1.6" height="1.3" fill="#f4f4f4"/><rect x="76.0" y="43.2" width="1.1" height="1.8" fill="#f4f4f4"/><rect x="78.8" y="43.5" width="1.5" height="1.6" fill="#f4f4f4"/><rect x="71.0" y="44.4" width="1.2" height="1.3" fill="#f4f4f4"/><rect x="73.6" y="42.6" width="1.2" height="1.0" fill="#f4f4f4"/><rect x="75.7" y="40.4" width="1.9" height="1.1" fill="#f4f4f4"/><rect x="72.3" y="39.4" width="1.4" height="2.1" fill="#f4f4f4"/><rect x="72.9" y="39.5" width="0.9" height="1.4" fill="#f4f4f4"/><rect x="75.6" y="44.7" width="2.3" height="2.0" fill="#f4f4f4"/><rect x="82.3" y="43.2" width="2.3" height="1.6" fill="#f4f4f4"/><rect x="103.6" y="37.8" width="2.0" height="1.0" fill="#f4f4f4"/><rect x="103.8" y="37.9" width="2.2" height="1.8" fill="#f4f4f4"/><rect x="108.8" y="34.4" width="1.2" height="1.3" fill="#f4f4f4"/><rect x="101.1" y="35.6" width="1.2" height="1.1" fill="#f4f4f4"/><rect x="108.4" y="34.7" width="2.1" height="1.1" fill="#f4f4f4"/><rect x="108.9" y="36.5" width="1.2" height="1.4" fill="#f4f4f4"/><rect x="100.1" y="38.6" width="1.7" height="1.3" fill="#f4f4f4"/><rect x="93.8" y="36.1" width="1.8" height="1.4" fill="#f4f4f4"/><rect x="109.1" y="34.6" width="1.6" height="2.1" fill="#f4f4f4"/><rect x="106.2" y="38.1" width="1.1" height="2.1" fill="#f4f4f4"/><rect x="99.4" y="34.4" width="1.3" height="1.5" fill="#f4f4f4"/><rect x="104.9" y="37.0" width="1.0" height="0.9" fill="#f4f4f4"/><rect x="93.5" y="38.8" width="1.7" height="1.4" fill="#f4f4f4"/><rect x="98.3" y="37.9" width="2.3" height="1.3" fill="#f4f4f4"/><rect x="103.0" y="40.4" width="2.1" height="1.2" fill="#f4f4f4"/><rect x="107.3" y="36.5" width="1.5" height="0.9" fill="#f4f4f4"/><rect x="110.0" y="35.7" width="1.6" height="1.0" fill="#f4f4f4"/><rect x="96.4" y="38.1" width="2.1" height="2.1" fill="#f4f4f4"/><rect x="102.2" y="35.5" width="0.9" height="2.1" fill="#f4f4f4"/><rect x="106.3" y="37.3" width="1.6" height="1.5" fill="#f4f4f4"/><rect x="104.6" y="37.8" width="0.9" height="2.0" fill="#f4f4f4"/><rect x="96.4" y="36.7" width="2.0" height="1.6" fill="#f4f4f4"/><rect x="100.7" y="35.8" width="0.9" height="0.8" fill="#f4f4f4"/><rect x="98.5" y="41.1" width="1.4" height="1.3" fill="#f4f4f4"/><rect x="96.4" y="35.4" width="1.8" height="1.2" fill="#f4f4f4"/><rect x="106.4" y="34.3" width="2.2" height="2.0" fill="#f4f4f4"/><rect x="110.7" y="38.3" width="1.4" height="1.3" fill="#f4f4f4"/><rect x="98.8" y="37.8" width="1.2" height="2.2" fill="#f4f4f4"/><rect x="97.9" y="41.7" width="1.9" height="1.2" fill="#f4f4f4"/><rect x="99.3" y="41.1" width="1.9" height="1.3" fill="#f4f4f4"/><rect x="106.4" y="38.6" width="2.2" height="1.8" fill="#f4f4f4"/><rect x="109.6" y="40.5" width="1.7" height="1.3" fill="#f4f4f4"/><rect x="105.3" y="37.0" width="1.0" height="1.3" fill="#f4f4f4"/><rect x="102.0" y="34.6" width="1.6" height="2.1" fill="#f4f4f4"/><rect x="95.5" y="40.4" width="0.8" height="1.9" fill="#f4f4f4"/><rect x="107.1" y="41.0" width="2.1" height="1.7" fill="#f4f4f4"/><rect x="96.0" y="36.4" width="2.0" height="1.3" fill="#f4f4f4"/><rect x="103.3" y="41.3" width="1.6" height="1.0" fill="#f4f4f4"/><rect x="95.8" y="37.4" width="1.1" height="1.8" fill="#f4f4f4"/><rect x="103.6" y="35.4" width="2.2" height="2.2" fill="#f4f4f4"/><rect x="99.2" y="35.5" width="1.2" height="1.0" fill="#f4f4f4"/><rect x="101.1" y="42.4" width="0.9" height="2.1" fill="#f4f4f4"/><rect x="99.6" y="34.2" width="1.0" height="1.7" fill="#f4f4f4"/><rect x="104.8" y="41.5" width="2.1" height="1.8" fill="#f4f4f4"/><rect x="93.4" y="37.0" width="1.2" height="1.0" fill="#f4f4f4"/><rect x="104.1" y="37.2" width="1.5" height="1.4" fill="#f4f4f4"/><rect x="106.9" y="36.0" width="1.7" height="1.5" fill="#f4f4f4"/><rect x="95.7" y="38.4" width="1.5" height="1.6" fill="#f4f4f4"/><rect x="96.6" y="39.2" width="2.3" height="2.2" fill="#f4f4f4"/><rect x="102.7" y="42.3" width="0.8" height="1.3" fill="#f4f4f4"/><rect x="105.8" y="36.9" width="1.9" height="2.2" fill="#f4f4f4"/><rect x="97.4" y="36.0" width="0.8" height="1.4" fill="#f4f4f4"/><rect x="93.9" y="38.8" width="1.4" height="1.9" fill="#f4f4f4"/><rect x="95.9" y="40.0" width="2.0" height="1.0" fill="#f4f4f4"/><rect x="108.9" y="37.1" width="1.6" height="2.2" fill="#f4f4f4"/><rect x="96.0" y="36.5" width="1.1" height="1.1" fill="#f4f4f4"/><rect x="103.0" y="34.8" width="1.9" height="1.8" fill="#f4f4f4"/><rect x="100.2" y="35.6" width="2.2" height="1.4" fill="#f4f4f4"/><rect x="106.7" y="41.7" width="2.2" height="1.0" fill="#f4f4f4"/><rect x="108.8" y="35.5" width="1.2" height="1.6" fill="#f4f4f4"/><rect x="101.9" y="44.1" width="1.5" height="1.4" fill="#f4f4f4"/><rect x="100.1" y="43.7" width="1.2" height="1.7" fill="#f4f4f4"/><rect x="109.9" y="42.1" width="1.3" height="1.0" fill="#f4f4f4"/><rect x="105.3" y="39.7" width="2.1" height="2.1" fill="#f4f4f4"/><rect x="105.4" y="45.7" width="2.1" height="1.7" fill="#f4f4f4"/><rect x="110.9" y="42.4" width="1.8" height="1.2" fill="#f4f4f4"/><rect x="106.2" y="44.1" width="1.2" height="1.9" fill="#f4f4f4"/><rect x="102.5" y="44.1" width="1.8" height="2.1" fill="#f4f4f4"/><rect x="105.1" y="42.8" width="2.4" height="2.0" fill="#f4f4f4"/><rect x="107.0" y="39.1" width="1.2" height="1.0" fill="#f4f4f4"/><rect x="103.7" y="44.5" width="0.9" height="1.8" fill="#f4f4f4"/><rect x="105.4" y="41.5" width="2.1" height="1.5" fill="#f4f4f4"/><rect x="110.3" y="40.6" width="2.1" height="1.4" fill="#f4f4f4"/><rect x="101.2" y="40.1" width="0.8" height="1.0" fill="#f4f4f4"/><rect x="106.1" y="44.5" width="1.4" height="1.6" fill="#f4f4f4"/><rect x="102.8" y="39.8" width="1.3" height="1.5" fill="#f4f4f4"/><rect x="112.3" y="40.9" width="1.8" height="1.9" fill="#f4f4f4"/><rect x="105.9" y="43.2" width="0.9" height="1.0" fill="#f4f4f4"/><rect x="111.8" y="42.1" width="2.3" height="1.0" fill="#f4f4f4"/><rect x="102.5" y="38.4" width="2.0" height="1.0" fill="#f4f4f4"/><rect x="102.9" y="40.4" width="1.1" height="0.8" fill="#f4f4f4"/><rect x="98.0" y="41.3" width="1.0" height="1.0" fill="#f4f4f4"/><rect x="104.3" y="42.5" width="1.5" height="1.8" fill="#f4f4f4"/><rect x="104.0" y="42.1" width="0.8" height="1.1" fill="#f4f4f4"/><rect x="101.7" y="38.6" width="1.6" height="0.9" fill="#f4f4f4"/><rect x="106.6" y="44.5" width="1.0" height="1.0" fill="#f4f4f4"/><rect x="98.8" y="43.4" width="1.2" height="2.0" fill="#f4f4f4"/><rect x="109.3" y="40.1" width="1.2" height="1.1" fill="#f4f4f4"/><rect x="101.9" y="38.8" width="2.2" height="1.1" fill="#f4f4f4"/><rect x="104.5" y="42.2" width="1.3" height="1.2" fill="#f4f4f4"/><rect x="107.1" y="42.7" width="2.4" height="1.2" fill="#f4f4f4"/><rect x="99.7" y="42.0" width="1.6" height="1.6" fill="#f4f4f4"/><rect x="99.9" y="41.9" width="0.9" height="1.7" fill="#f4f4f4"/><rect x="102.2" y="39.0" width="1.3" height="1.4" fill="#f4f4f4"/><rect x="107.9" y="38.7" width="0.9" height="1.3" fill="#f4f4f4"/><rect x="108.7" y="44.9" width="1.4" height="1.3" fill="#f4f4f4"/><rect x="106.4" y="44.6" width="1.9" height="1.7" fill="#f4f4f4"/><rect x="106.4" y="44.4" width="1.8" height="0.9" fill="#f4f4f4"/><rect x="106.5" y="41.6" width="1.8" height="1.0" fill="#f4f4f4"/><rect x="111.9" y="41.0" width="1.2" height="1.5" fill="#f4f4f4"/><path d="M128.9 42.0 c0 -8 2 -10 5 -10 c3 0 4 4 3 10 l-1 6 l-6 0 Z" fill="#c8c8c8"/><rect x="155.0" y="34.6" width="2.3" height="1.2" fill="#f4f4f4"/><rect x="161.8" y="32.9" width="1.9" height="1.0" fill="#f4f4f4"/><rect x="165.5" y="35.2" width="2.0" height="1.2" fill="#f4f4f4"/><rect x="157.3" y="34.9" width="2.2" height="2.1" fill="#f4f4f4"/><rect x="155.5" y="36.4" width="0.9" height="1.9" fill="#f4f4f4"/><rect x="163.2" y="34.3" width="1.9" height="1.6" fill="#f4f4f4"/><rect x="164.3" y="34.6" width="1.7" height="2.0" fill="#f4f4f4"/><rect x="158.7" y="33.9" width="0.9" height="2.1" fill="#f4f4f4"/><rect x="154.3" y="35.4" width="1.0" height="1.9" fill="#f4f4f4"/><rect x="163.8" y="32.7" width="0.8" height="1.3" fill="#f4f4f4"/><rect x="167.0" y="35.6" width="1.4" height="2.1" fill="#f4f4f4"/><rect x="156.9" y="36.5" width="2.2" height="1.1" fill="#f4f4f4"/><rect x="154.8" y="34.1" width="1.6" height="1.3" fill="#f4f4f4"/><rect x="160.6" y="37.2" width="1.1" height="1.6" fill="#f4f4f4"/><rect x="156.3" y="34.3" width="1.0" height="1.7" fill="#f4f4f4"/><rect x="164.6" y="34.2" width="1.3" height="2.1" fill="#f4f4f4"/><rect x="158.0" y="34.3" width="0.8" height="1.9" fill="#f4f4f4"/><rect x="158.5" y="36.3" width="1.2" height="1.7" fill="#f4f4f4"/><rect x="160.7" y="33.6" width="0.9" height="2.2" fill="#f4f4f4"/><rect x="162.1" y="34.8" width="1.7" height="1.8" fill="#f4f4f4"/><rect x="156.3" y="36.2" width="2.3" height="1.6" fill="#f4f4f4"/><rect x="158.8" y="35.6" width="1.2" height="1.0" fill="#f4f4f4"/><rect x="163.7" y="35.7" width="2.1" height="1.6" fill="#f4f4f4"/><rect x="163.5" y="32.7" width="2.1" height="0.9" fill="#f4f4f4"/><rect x="163.1" y="34.6" width="2.0" height="2.0" fill="#f4f4f4"/><rect x="158.8" y="33.6" width="0.9" height="0.9" fill="#f4f4f4"/><rect x="159.0" y="34.0" width="1.7" height="1.2" fill="#f4f4f4"/><rect x="163.2" y="36.1" width="2.0" height="1.5" fill="#f4f4f4"/><rect x="157.4" y="36.0" width="1.7" height="1.5" fill="#f4f4f4"/><rect x="154.7" y="35.8" width="2.0" height="1.1" fill="#f4f4f4"/><rect x="165.6" y="42.2" width="1.3" height="1.1" fill="#f4f4f4"/><rect x="155.2" y="40.1" width="1.6" height="1.4" fill="#f4f4f4"/><rect x="161.8" y="41.5" width="1.9" height="1.3" fill="#f4f4f4"/><rect x="158.2" y="37.6" width="2.2" height="2.1" fill="#f4f4f4"/><rect x="162.7" y="41.4" width="2.0" height="1.6" fill="#f4f4f4"/><rect x="164.7" y="42.3" width="2.2" height="2.0" fill="#f4f4f4"/><rect x="163.4" y="41.6" width="0.8" height="2.2" fill="#f4f4f4"/><rect x="163.8" y="42.5" width="1.7" height="1.6" fill="#f4f4f4"/><rect x="153.3" y="39.5" width="1.8" height="1.2" fill="#f4f4f4"/><rect x="167.4" y="41.3" width="2.3" height="1.0" fill="#f4f4f4"/><rect x="159.0" y="37.8" width="1.1" height="1.1" fill="#f4f4f4"/><rect x="159.6" y="38.1" width="1.5" height="1.5" fill="#f4f4f4"/><rect x="169.0" y="41.4" width="1.7" height="1.5" fill="#f4f4f4"/><rect x="157.4" y="42.2" width="2.1" height="1.6" fill="#f4f4f4"/><rect x="165.5" y="40.6" width="1.0" height="0.9" fill="#f4f4f4"/><rect x="157.8" y="38.2" width="1.1" height="2.1" fill="#f4f4f4"/><rect x="156.1" y="38.0" width="2.1" height="1.8" fill="#f4f4f4"/><rect x="152.4" y="39.5" width="1.0" height="1.8" fill="#f4f4f4"/><rect x="167.4" y="38.6" width="2.1" height="1.1" fill="#f4f4f4"/><rect x="157.7" y="40.7" width="1.4" height="1.8" fill="#f4f4f4"/><rect x="165.8" y="41.3" width="2.2" height="1.2" fill="#f4f4f4"/><rect x="169.2" y="42.1" width="1.7" height="0.8" fill="#f4f4f4"/><rect x="158.8" y="39.5" width="1.1" height="1.8" fill="#f4f4f4"/><rect x="158.5" y="38.3" width="1.6" height="1.6" fill="#f4f4f4"/><rect x="159.1" y="40.2" width="2.0" height="1.9" fill="#f4f4f4"/><rect x="156.6" y="40.8" width="1.8" height="1.5" fill="#f4f4f4"/><rect x="154.2" y="41.4" width="2.2" height="1.0" fill="#f4f4f4"/><rect x="166.4" y="42.3" width="2.3" height="1.8" fill="#f4f4f4"/><rect x="161.5" y="40.6" width="2.1" height="2.1" fill="#f4f4f4"/><rect x="162.7" y="37.4" width="2.4" height="1.5" fill="#f4f4f4"/><rect x="166.9" y="39.3" width="0.9" height="2.0" fill="#f4f4f4"/><rect x="159.4" y="37.4" width="1.0" height="1.2" fill="#f4f4f4"/><rect x="160.1" y="39.6" width="1.3" height="1.6" fill="#f4f4f4"/><rect x="170.0" y="39.0" width="1.4" height="1.4" fill="#f4f4f4"/><rect x="153.6" y="39.7" width="2.4" height="0.8" fill="#f4f4f4"/><rect x="170.2" y="38.7" width="0.9" height="1.2" fill="#f4f4f4"/><rect x="161.5" y="41.3" width="1.1" height="1.0" fill="#f4f4f4"/><rect x="159.3" y="38.2" width="1.0" height="2.0" fill="#f4f4f4"/><rect x="164.8" y="38.6" width="2.1" height="1.9" fill="#f4f4f4"/><rect x="159.3" y="39.8" width="1.9" height="2.0" fill="#f4f4f4"/><rect x="169.6" y="38.0" width="1.1" height="2.2" fill="#f4f4f4"/><rect x="167.2" y="41.0" width="1.7" height="1.7" fill="#f4f4f4"/><rect x="152.9" y="39.4" width="2.0" height="2.0" fill="#f4f4f4"/><rect x="159.2" y="38.1" width="0.8" height="1.7" fill="#f4f4f4"/><rect x="166.2" y="39.4" width="2.4" height="0.8" fill="#f4f4f4"/><rect x="155.3" y="41.5" width="1.9" height="1.6" fill="#f4f4f4"/><rect x="161.3" y="41.4" width="1.0" height="1.7" fill="#f4f4f4"/><rect x="165.8" y="40.1" width="1.9" height="1.4" fill="#f4f4f4"/><rect x="168.7" y="40.2" width="2.3" height="1.5" fill="#f4f4f4"/><rect x="161.8" y="41.1" width="1.6" height="1.1" fill="#f4f4f4"/><rect x="160.1" y="43.0" width="1.6" height="1.5" fill="#f4f4f4"/><rect x="157.0" y="46.5" width="1.3" height="1.0" fill="#f4f4f4"/><rect x="162.9" y="46.2" width="1.3" height="1.2" fill="#f4f4f4"/><rect x="166.8" y="45.8" width="1.3" height="1.6" fill="#f4f4f4"/><rect x="163.9" y="45.6" width="1.1" height="1.6" fill="#f4f4f4"/><rect x="158.0" y="46.3" width="2.1" height="1.4" fill="#f4f4f4"/><rect x="168.8" y="46.2" width="2.0" height="1.4" fill="#f4f4f4"/><rect x="160.8" y="43.8" width="2.3" height="2.0" fill="#f4f4f4"/><rect x="165.3" y="42.6" width="1.2" height="1.6" fill="#f4f4f4"/><rect x="162.4" y="42.7" width="1.4" height="1.0" fill="#f4f4f4"/><rect x="161.4" y="44.4" width="1.9" height="0.8" fill="#f4f4f4"/><rect x="157.9" y="45.4" width="1.0" height="1.5" fill="#f4f4f4"/><rect x="158.4" y="44.9" width="2.2" height="2.0" fill="#f4f4f4"/><rect x="166.3" y="44.2" width="0.8" height="1.3" fill="#f4f4f4"/><rect x="168.3" y="46.3" width="1.2" height="1.0" fill="#f4f4f4"/><rect x="162.2" y="46.5" width="2.0" height="1.4" fill="#f4f4f4"/><rect x="161.1" y="46.9" width="0.9" height="1.1" fill="#f4f4f4"/><rect x="160.6" y="42.9" width="1.0" height="0.9" fill="#f4f4f4"/><rect x="156.7" y="44.9" width="0.8" height="1.4" fill="#f4f4f4"/><rect x="162.9" y="45.7" width="1.1" height="1.2" fill="#f4f4f4"/><rect x="160.6" y="45.1" width="1.8" height="2.0" fill="#f4f4f4"/><rect x="162.4" y="44.4" width="1.8" height="1.7" fill="#f4f4f4"/><rect x="168.2" y="45.0" width="1.8" height="2.1" fill="#f4f4f4"/><rect x="168.7" y="44.1" width="1.7" height="2.1" fill="#f4f4f4"/><rect x="164.6" y="46.7" width="0.9" height="1.9" fill="#f4f4f4"/><rect x="161.1" y="44.0" width="1.1" height="1.5" fill="#f4f4f4"/><rect x="163.3" y="44.0" width="1.3" height="1.5" fill="#f4f4f4"/><rect x="162.7" y="47.3" width="2.0" height="2.1" fill="#f4f4f4"/><rect x="159.0" y="43.4" width="1.3" height="1.5" fill="#f4f4f4"/><rect x="158.2" y="45.7" width="0.9" height="2.0" fill="#f4f4f4"/><rect x="166.3" y="46.3" width="2.3" height="1.5" fill="#f4f4f4"/><rect x="166.0" y="44.0" width="1.5" height="1.3" fill="#f4f4f4"/><rect x="161.0" y="46.3" width="1.5" height="2.0" fill="#f4f4f4"/><rect x="165.6" y="44.8" width="1.9" height="1.5" fill="#f4f4f4"/><rect x="161.8" y="45.2" width="1.4" height="1.2" fill="#f4f4f4"/><rect x="197.1" y="36.2" width="1.4" height="1.4" fill="#e0e0e0"/><rect x="191.2" y="46.3" width="1.5" height="1.4" fill="#e0e0e0"/><rect x="188.6" y="38.5" width="1.1" height="1.5" fill="#e0e0e0"/><rect x="195.2" y="42.7" width="1.6" height="1.1" fill="#e0e0e0"/><rect x="192.7" y="44.3" width="1.5" height="1.0" fill="#e0e0e0"/><rect x="185.9" y="42.7" width="1.4" height="1.1" fill="#e0e0e0"/><rect x="196.9" y="42.9" width="0.8" height="0.9" fill="#e0e0e0"/><rect x="194.0" y="46.1" width="1.0" height="1.3" fill="#e0e0e0"/><rect x="193.0" y="42.3" width="0.8" height="1.3" fill="#e0e0e0"/><rect x="193.9" y="37.0" width="1.0" height="0.8" fill="#e0e0e0"/><rect x="188.9" y="36.5" width="0.9" height="1.3" fill="#e0e0e0"/><rect x="187.2" y="36.8" width="0.9" height="1.2" fill="#e0e0e0"/><rect x="186.6" y="38.1" width="0.9" height="1.5" fill="#e0e0e0"/><rect x="195.9" y="34.9" width="1.6" height="1.2" fill="#e0e0e0"/><rect x="190.0" y="42.2" width="1.3" height="1.2" fill="#e0e0e0"/><rect x="184.2" y="43.0" width="1.5" height="0.9" fill="#e0e0e0"/><rect x="191.8" y="39.7" width="1.3" height="1.0" fill="#e0e0e0"/><rect x="190.6" y="32.2" width="1.2" height="1.3" fill="#e0e0e0"/><rect x="197.7" y="42.1" width="0.9" height="1.1" fill="#e0e0e0"/><rect x="190.5" y="41.8" width="1.4" height="0.9" fill="#e0e0e0"/><rect x="191.5" y="42.3" width="1.3" height="1.0" fill="#e0e0e0"/><rect x="192.8" y="40.3" width="1.0" height="1.2" fill="#e0e0e0"/><rect x="192.8" y="40.0" width="1.3" height="1.2" fill="#e0e0e0"/><rect x="194.5" y="43.3" width="0.9" height="1.0" fill="#e0e0e0"/><rect x="188.7" y="42.4" width="1.0" height="1.0" fill="#e0e0e0"/><rect x="189.7" y="45.6" width="1.5" height="1.3" fill="#e0e0e0"/><rect x="191.1" y="40.1" width="1.0" height="1.2" fill="#e0e0e0"/><rect x="185.5" y="44.1" width="1.5" height="1.0" fill="#e0e0e0"/><circle cx="211.9" cy="32.0" r="1.2" fill="#fff"/><circle cx="214.9" cy="31.0" r="1.0" fill="#fff"/><circle cx="216.9" cy="40.0" r="1.0" fill="#fff"/><circle cx="225.9" cy="38.0" r="1.3" fill="#fff"/><circle cx="230.9" cy="35.0" r="1.0" fill="#fff"/><circle cx="224.9" cy="46.0" r="1.6" fill="#fff"/><rect x="20.1" y="74.3" width="1.7" height="1.4" fill="#ededed"/><rect x="17.6" y="75.4" width="2.0" height="1.4" fill="#ededed"/><rect x="10.1" y="69.2" width="0.8" height="1.3" fill="#ededed"/><rect x="13.0" y="68.4" width="1.9" height="1.1" fill="#ededed"/><rect x="15.7" y="70.7" width="2.2" height="1.7" fill="#ededed"/><rect x="21.6" y="65.4" width="0.8" height="1.2" fill="#ededed"/><rect x="11.7" y="69.3" width="2.2" height="1.3" fill="#ededed"/><rect x="21.1" y="74.5" width="1.0" height="2.0" fill="#ededed"/><rect x="7.7" y="70.8" width="1.3" height="1.4" fill="#ededed"/><rect x="16.3" y="70.5" width="2.0" height="1.1" fill="#ededed"/><rect x="16.4" y="66.2" width="2.2" height="1.9" fill="#ededed"/><rect x="15.8" y="63.2" width="1.6" height="1.7" fill="#ededed"/><rect x="20.9" y="72.7" width="2.0" height="1.1" fill="#ededed"/><rect x="24.7" y="66.2" width="1.4" height="1.3" fill="#ededed"/><rect x="9.0" y="70.6" width="2.2" height="1.3" fill="#ededed"/><rect x="18.8" y="69.7" width="1.8" height="2.1" fill="#ededed"/><rect x="7.8" y="69.4" width="1.6" height="1.7" fill="#ededed"/><rect x="17.0" y="74.7" width="1.6" height="1.6" fill="#ededed"/><rect x="17.4" y="71.9" width="1.3" height="2.0" fill="#ededed"/><rect x="10.6" y="73.7" width="1.2" height="0.9" fill="#ededed"/><rect x="24.6" y="71.8" width="1.9" height="1.3" fill="#ededed"/><rect x="11.8" y="64.0" width="2.1" height="2.0" fill="#ededed"/><rect x="6.4" y="73.1" width="2.2" height="1.5" fill="#ededed"/><rect x="21.2" y="66.0" width="1.3" height="1.1" fill="#ededed"/><rect x="18.6" y="67.3" width="0.9" height="1.8" fill="#ededed"/><rect x="16.6" y="64.5" width="2.0" height="0.9" fill="#ededed"/><rect x="15.2" y="73.1" width="1.4" height="1.0" fill="#ededed"/><rect x="21.3" y="71.0" width="2.1" height="2.0" fill="#ededed"/><rect x="15.3" y="64.5" width="1.2" height="2.0" fill="#ededed"/><rect x="6.2" y="68.3" width="0.8" height="1.1" fill="#ededed"/><rect x="20.6" y="64.0" width="2.1" height="1.6" fill="#ededed"/><rect x="8.0" y="71.7" width="2.0" height="1.2" fill="#ededed"/><rect x="9.8" y="68.5" width="1.9" height="0.8" fill="#ededed"/><rect x="11.2" y="63.0" width="0.8" height="1.5" fill="#ededed"/><rect x="9.2" y="64.2" width="1.6" height="1.1" fill="#ededed"/><rect x="6.5" y="73.1" width="2.1" height="1.0" fill="#ededed"/><rect x="18.3" y="70.5" width="0.8" height="1.4" fill="#ededed"/><rect x="22.0" y="74.3" width="1.7" height="1.0" fill="#ededed"/><rect x="9.4" y="68.3" width="1.5" height="1.1" fill="#ededed"/><rect x="17.8" y="71.9" width="1.3" height="1.7" fill="#ededed"/><rect x="13.2" y="68.8" width="1.8" height="1.9" fill="#ededed"/><rect x="17.0" y="63.1" width="0.8" height="1.4" fill="#ededed"/><rect x="24.3" y="71.7" width="1.1" height="1.7" fill="#ededed"/><rect x="15.3" y="75.1" width="1.3" height="0.9" fill="#ededed"/><rect x="10.8" y="71.8" width="2.1" height="1.2" fill="#ededed"/><rect x="7.3" y="69.2" width="2.2" height="0.9" fill="#ededed"/><rect x="9.2" y="66.3" width="1.9" height="2.0" fill="#ededed"/><rect x="12.1" y="74.7" width="1.6" height="1.5" fill="#ededed"/><rect x="24.6" y="71.8" width="2.2" height="1.2" fill="#ededed"/><rect x="10.9" y="75.6" width="1.0" height="0.9" fill="#ededed"/><rect x="24.4" y="72.1" width="1.9" height="1.4" fill="#ededed"/><rect x="14.4" y="68.6" width="1.7" height="1.4" fill="#ededed"/><rect x="8.7" y="68.8" width="1.4" height="1.1" fill="#ededed"/><rect x="22.4" y="70.7" width="1.2" height="1.7" fill="#ededed"/><rect x="19.3" y="63.9" width="1.5" height="1.1" fill="#ededed"/><rect x="9.7" y="72.5" width="1.7" height="2.0" fill="#ededed"/><rect x="22.0" y="71.8" width="1.5" height="1.7" fill="#ededed"/><rect x="23.0" y="65.4" width="1.7" height="1.8" fill="#ededed"/><rect x="10.5" y="63.7" width="1.8" height="1.7" fill="#ededed"/><rect x="15.8" y="76.0" width="1.4" height="1.6" fill="#ededed"/><rect x="20.4" y="63.2" width="2.2" height="0.8" fill="#ededed"/><rect x="13.1" y="72.9" width="1.4" height="1.0" fill="#ededed"/><rect x="12.5" y="68.7" width="1.2" height="2.0" fill="#ededed"/><rect x="15.1" y="64.5" width="1.0" height="2.0" fill="#ededed"/><rect x="14.1" y="66.3" width="1.3" height="1.6" fill="#ededed"/><rect x="13.1" y="66.0" width="2.2" height="1.2" fill="#ededed"/><rect x="15.2" y="75.7" width="1.0" height="1.7" fill="#ededed"/><rect x="18.1" y="74.4" width="1.2" height="1.3" fill="#ededed"/><rect x="22.5" y="67.6" width="1.4" height="1.6" fill="#ededed"/><rect x="14.6" y="72.2" width="1.4" height="1.1" fill="#ededed"/><rect x="19.5" y="75.7" width="0.8" height="1.8" fill="#ededed"/><rect x="23.9" y="67.0" width="0.8" height="1.4" fill="#ededed"/><rect x="23.8" y="70.6" width="1.8" height="1.1" fill="#ededed"/><rect x="23.6" y="69.5" width="0.9" height="1.2" fill="#ededed"/><rect x="5.5" y="71.2" width="1.3" height="1.0" fill="#ededed"/><rect x="18.1" y="63.2" width="1.6" height="0.9" fill="#ededed"/><rect x="18.1" y="73.4" width="1.6" height="1.1" fill="#ededed"/><rect x="18.7" y="63.2" width="2.1" height="1.9" fill="#ededed"/><rect x="23.8" y="69.9" width="0.9" height="1.9" fill="#ededed"/><rect x="15.3" y="63.2" width="1.1" height="0.9" fill="#ededed"/><rect x="18.9" y="64.3" width="1.7" height="1.4" fill="#ededed"/><rect x="17.5" y="65.4" width="1.2" height="1.2" fill="#ededed"/><rect x="12.9" y="74.6" width="2.1" height="0.9" fill="#ededed"/><rect x="22.6" y="71.4" width="1.8" height="1.0" fill="#ededed"/><rect x="15.1" y="71.0" width="0.9" height="1.4" fill="#ededed"/><rect x="11.7" y="64.2" width="1.0" height="0.9" fill="#ededed"/><rect x="22.8" y="67.1" width="1.4" height="1.7" fill="#ededed"/><rect x="14.4" y="64.3" width="0.9" height="1.8" fill="#ededed"/><rect x="16.0" y="70.7" width="1.3" height="1.5" fill="#ededed"/><rect x="12.3" y="67.2" width="1.8" height="1.4" fill="#ededed"/><path d="M4.5 62.3 h20 M7.5 75.3 h18" stroke="#eee" stroke-width="1.2"/><rect x="48.4" y="68.5" width="0.8" height="1.4" fill="#777"/><rect x="46.2" y="71.8" width="1.3" height="1.0" fill="#777"/><rect x="48.5" y="66.8" width="1.5" height="1.0" fill="#777"/><rect x="37.1" y="64.7" width="1.3" height="1.4" fill="#777"/><rect x="44.3" y="67.6" width="1.4" height="1.2" fill="#777"/><rect x="43.2" y="72.5" width="1.4" height="1.2" fill="#777"/><rect x="53.0" y="66.6" width="1.5" height="1.2" fill="#777"/><rect x="42.3" y="63.4" width="1.0" height="1.4" fill="#777"/><rect x="41.4" y="75.8" width="1.5" height="1.2" fill="#777"/><rect x="50.5" y="75.0" width="1.3" height="0.9" fill="#777"/><rect x="51.8" y="71.1" width="0.8" height="1.4" fill="#777"/><rect x="37.6" y="69.1" width="1.1" height="1.2" fill="#777"/><rect x="49.6" y="67.1" width="1.1" height="1.2" fill="#777"/><rect x="42.6" y="75.2" width="1.2" height="1.1" fill="#777"/><rect x="41.5" y="64.1" width="0.9" height="1.4" fill="#777"/><rect x="40.8" y="73.4" width="1.1" height="1.4" fill="#777"/><rect x="51.7" y="67.6" width="1.1" height="0.9" fill="#777"/><rect x="48.1" y="67.3" width="1.2" height="1.0" fill="#777"/><rect x="42.0" y="73.5" width="0.9" height="0.8" fill="#777"/><rect x="36.1" y="67.7" width="1.3" height="0.9" fill="#777"/><rect x="44.0" y="67.6" width="1.1" height="1.3" fill="#777"/><rect x="50.8" y="66.7" width="1.4" height="1.1" fill="#777"/><rect x="37.3" y="68.4" width="1.5" height="1.3" fill="#777"/><rect x="36.4" y="70.5" width="1.3" height="1.0" fill="#777"/><rect x="46.8" y="62.2" width="1.2" height="1.4" fill="#777"/><rect x="51.9" y="69.9" width="1.3" height="1.0" fill="#777"/><rect x="48.8" y="75.2" width="1.1" height="1.0" fill="#777"/><rect x="54.3" y="71.3" width="1.1" height="0.9" fill="#777"/><rect x="45.9" y="73.2" width="1.4" height="0.9" fill="#777"/><rect x="44.3" y="71.8" width="1.1" height="0.9" fill="#777"/><rect x="40.0" y="75.0" width="1.5" height="1.3" fill="#777"/><rect x="50.8" y="70.5" width="1.4" height="0.8" fill="#777"/><rect x="46.9" y="74.7" width="1.1" height="1.3" fill="#777"/><rect x="43.5" y="64.0" width="1.0" height="0.9" fill="#777"/><rect x="44.6" y="71.3" width="1.3" height="0.9" fill="#777"/><rect x="51.0" y="65.2" width="0.8" height="1.1" fill="#777"/><rect x="43.2" y="68.3" width="1.2" height="0.8" fill="#777"/><rect x="44.9" y="68.8" width="1.3" height="1.4" fill="#777"/><rect x="47.6" y="66.1" width="1.2" height="0.9" fill="#777"/><rect x="39.7" y="75.5" width="1.4" height="0.8" fill="#777"/><rect x="39.0" y="73.7" width="0.9" height="1.3" fill="#777"/><rect x="50.6" y="65.6" width="1.1" height="1.3" fill="#777"/><rect x="40.5" y="69.0" width="1.0" height="0.9" fill="#777"/><rect x="48.6" y="64.5" width="1.3" height="1.3" fill="#777"/><rect x="49.1" y="68.7" width="1.1" height="1.4" fill="#777"/><rect x="45.3" y="64.3" width="1.3" height="0.9" fill="#777"/><rect x="46.0" y="70.8" width="1.1" height="0.9" fill="#777"/><rect x="35.0" y="68.4" width="0.9" height="1.2" fill="#777"/><rect x="49.9" y="64.6" width="1.2" height="1.3" fill="#777"/><rect x="54.5" y="70.4" width="1.3" height="1.3" fill="#777"/><rect x="46.3" y="67.1" width="0.8" height="0.9" fill="#777"/><rect x="35.1" y="69.1" width="1.5" height="1.1" fill="#777"/><rect x="38.6" y="64.5" width="1.0" height="1.4" fill="#777"/><rect x="52.8" y="66.9" width="1.4" height="1.3" fill="#777"/><rect x="41.6" y="65.6" width="1.0" height="1.0" fill="#777"/><rect x="53.8" y="72.0" width="1.0" height="0.8" fill="#777"/><rect x="43.5" y="71.7" width="1.1" height="1.0" fill="#777"/><rect x="47.9" y="74.2" width="1.1" height="1.0" fill="#777"/><rect x="47.0" y="65.2" width="1.2" height="1.4" fill="#777"/><rect x="50.7" y="68.1" width="0.8" height="1.4" fill="#777"/><ellipse cx="69.2" cy="64.3" rx="2.2" ry="1.5" fill="#fff" transform="rotate(30 69.2 64.3)"/><ellipse cx="74.2" cy="62.3" rx="2.2" ry="1.5" fill="#fff" transform="rotate(60 74.2 62.3)"/><ellipse cx="78.2" cy="65.3" rx="2.2" ry="1.5" fill="#fff" transform="rotate(-30 78.2 65.3)"/><ellipse cx="67.2" cy="69.3" rx="2.2" ry="1.5" fill="#fff" transform="rotate(10 67.2 69.3)"/><ellipse cx="72.2" cy="68.3" rx="2.2" ry="1.5" fill="#fff" transform="rotate(-40 72.2 68.3)"/><ellipse cx="77.2" cy="70.3" rx="2.2" ry="1.5" fill="#fff" transform="rotate(40 77.2 70.3)"/><ellipse cx="81.2" cy="68.3" rx="2.2" ry="1.5" fill="#fff" transform="rotate(70 81.2 68.3)"/><ellipse cx="69.2" cy="74.3" rx="2.2" ry="1.5" fill="#fff" transform="rotate(-20 69.2 74.3)"/><ellipse cx="74.2" cy="74.3" rx="2.2" ry="1.5" fill="#fff" transform="rotate(30 74.2 74.3)"/><ellipse cx="79.2" cy="75.3" rx="2.2" ry="1.5" fill="#fff" transform="rotate(-50 79.2 75.3)"/><ellipse cx="73.2" cy="78.3" rx="2.2" ry="1.5" fill="#fff" transform="rotate(0 73.2 78.3)"/><circle cx="103.5" cy="69.3" r="8" fill="url(#soft2)"/><path d="M130.9 78.3 q-3.0 -8.4 -5.0 -14.0 q3.5 4.2 5.0 14.0 Z" fill="#d8d8d8"/><path d="M130.9 78.3 q-2.0 -10.2 0.0 -17.0 q2.0 5.1 0.0 17.0 Z" fill="#d8d8d8"/><path d="M130.9 78.3 q-1.0 -8.4 5.0 -14.0 q0.5 4.2 -5.0 14.0 Z" fill="#d8d8d8"/><path d="M130.9 78.3 q-0.2 -5.4 9.0 -9.0 q-0.7 2.7 -9.0 9.0 Z" fill="#d8d8d8"/><path d="M130.9 78.3 q0.0 -1.8 10.0 -3.0 q-1.0 0.9 -10.0 3.0 Z" fill="#d8d8d8"/><path d="M130.9 78.3 q-3.4 -4.8 -7.0 -8.0 q4.1 2.4 7.0 8.0 Z" fill="#d8d8d8"/><path d="M162.2 77.3 c-6 -3 -7 -12 -2 -15 c2 -1 3 0 3 2 c0 -2 2 -3 4 -2 c5 3 3 12 -3 15 Z" fill="#bdbdbd"/><path d="M162.7 77.3 v-15" stroke="#666" stroke-width="0.8"/><path d="M189.6 77.3 c-5 -4 -4 -11 1 -15 c3 -1 6 1 6 5 c0 5 -3 9 -7 10 Z" fill="#c4c4c4"/><path d="M188.6 78.3 l6 -14" stroke="#666" stroke-width="0.8"/><path d="M220.9 76.3 c-6 -3 -8 -12 -3 -15 c2 -1 3 0 4 1 c1 -1 2 -2 4 -1 c5 3 3 12 -3 15 Z" fill="#b4b4b4"/><path d="M221.4 78.3 v-13" stroke="#666" stroke-width="0.8"/><path d="M11.0 98 c0 -5 2 -7.5 4.5 -7.5 c2.5 0 4.5 2.5 4.5 7.5 Z" fill="#b4b4b4"/><path d="M36.8 94 c3 -1.5 6 -1 9 1 c2 1.2 4 2.2 6 3 l-8 0 c-3 -1 -5 -2.5 -7 -4 Z" fill="#c0c0c0"/><path d="M65.2 95 c3 -2.5 8 -2 12 0 c2.5 1 4.5 2 6 3 l-12 0 c-2.5 -0.8 -4.5 -1.8 -6 -3 Z" fill="#c0c0c0"/><path d="M92.5 97.5 c4 -2.5 10 -3.5 16 -2.5 c3 0.5 5 1.5 6 3 l-22 0 Z" fill="#bcbcbc"/><path d="M122.9 98 c3 -2 8 -3 13 -2.5 c3 0.3 5 1.2 6 2.5 Z" fill="#bcbcbc"/><rect x="160.7" y="92" width="3" height="6" rx="1.2" fill="#e0e0e0"/><path d="M189.6 98 l0.6 -4 l2 -2.5 l1 6.5 Z" fill="#d4d4d4"/><rect x="218.0" y="95.2" width="1.3" height="1.0" fill="#808080"/><rect x="218.7" y="94.1" width="1.4" height="0.9" fill="#808080"/><rect x="219.1" y="94.4" width="1.1" height="1.3" fill="#808080"/><rect x="218.3" y="95.7" width="1.4" height="1.2" fill="#808080"/><rect x="220.2" y="97.3" width="1.1" height="0.8" fill="#808080"/><rect x="218.2" y="94.7" width="1.1" height="1.3" fill="#808080"/><rect x="223.6" y="95.2" width="1.2" height="0.9" fill="#808080"/><rect x="224.6" y="96.9" width="1.0" height="0.9" fill="#808080"/>
</svg>
<span class="t" style="left:352.475px;top:194.65px;font-size:9.5px;color:#e3e6ea;transform:scaleX(0.946);transform-origin:0 0;">30</span>
<span class="t" style="left:379.525px;top:194.65px;font-size:9.5px;color:#e3e6ea;transform:scaleX(0.921);transform-origin:0 0;">123</span>
<span class="t" style="left:413.725px;top:194.65px;font-size:9.5px;color:#e3e6ea;transform:scaleX(0.927);transform-origin:0 0;">8</span>
<span class="t" style="left:440.525px;top:194.65px;font-size:9.5px;color:#e3e6ea;transform:scaleX(0.946);transform-origin:0 0;">10</span>
<span class="t" style="left:469.875px;top:194.65px;font-size:9.5px;color:#e3e6ea;transform:scaleX(0.946);transform-origin:0 0;">25</span>
<span class="t" style="left:496.925px;top:194.65px;font-size:9.5px;color:#e3e6ea;transform:scaleX(0.964);transform-origin:0 0;">112</span>
<span class="t" style="left:528.575px;top:194.65px;font-size:9.5px;color:#e3e6ea;transform:scaleX(0.946);transform-origin:0 0;">60</span>
<span class="t" style="left:557.925px;top:194.65px;font-size:9.5px;color:#e3e6ea;transform:scaleX(0.946);transform-origin:0 0;">50</span>
<span class="t" style="left:352.475px;top:224px;font-size:9.5px;color:#e3e6ea;transform:scaleX(0.946);transform-origin:0 0;">25</span>
<span class="t" style="left:381.825px;top:224px;font-size:9.5px;color:#e3e6ea;transform:scaleX(0.946);transform-origin:0 0;">30</span>
<span class="t" style="left:411.175px;top:224px;font-size:9.5px;color:#e3e6ea;transform:scaleX(0.946);transform-origin:0 0;">50</span>
<span class="t" style="left:440.525px;top:224px;font-size:9.5px;color:#e3e6ea;transform:scaleX(0.946);transform-origin:0 0;">60</span>
<span class="t" style="left:467.575px;top:224px;font-size:9.5px;color:#e3e6ea;transform:scaleX(0.921);transform-origin:0 0;">100</span>
<span class="t" style="left:496.925px;top:224px;font-size:9.5px;color:#e3e6ea;transform:scaleX(0.921);transform-origin:0 0;">127</span>
<span class="t" style="left:526.275px;top:224px;font-size:9.5px;color:#e3e6ea;transform:scaleX(0.921);transform-origin:0 0;">284</span>
<span class="t" style="left:557.925px;top:224px;font-size:9.5px;color:#e3e6ea;transform:scaleX(0.946);transform-origin:0 0;">80</span>
<span class="t" style="left:350.175px;top:253.35px;font-size:9.5px;color:#e3e6ea;transform:scaleX(0.921);transform-origin:0 0;">174</span>
<span class="t" style="left:379.525px;top:253.35px;font-size:9.5px;color:#e3e6ea;transform:scaleX(0.921);transform-origin:0 0;">175</span>
<span class="t" style="left:408.875px;top:253.35px;font-size:9.5px;color:#e3e6ea;transform:scaleX(0.921);transform-origin:0 0;">306</span>
<span class="t" style="left:440.525px;top:253.35px;font-size:9.5px;color:#e3e6ea;transform:scaleX(0.946);transform-origin:0 0;">50</span>
<span class="t" style="left:467.575px;top:253.35px;font-size:9.5px;color:#e3e6ea;transform:scaleX(0.921);transform-origin:0 0;">945</span>
<span class="t" style="left:496.925px;top:253.35px;font-size:9.5px;color:#e3e6ea;transform:scaleX(0.921);transform-origin:0 0;">981</span>
<span class="t" style="left:526.275px;top:253.35px;font-size:9.5px;color:#e3e6ea;transform:scaleX(0.921);transform-origin:0 0;">989</span>
<span class="t" style="left:555.625px;top:253.35px;font-size:9.5px;color:#e3e6ea;transform:scaleX(0.921);transform-origin:0 0;">956</span>
<div class="a" style="left:371.9px;top:175.6px;width:29.5px;height:29.7px;background:transparent;border:1.7px solid #1fb2f2"></div>
<div class="a" style="left:592.5px;top:175px;width:15px;height:98px;background:#464646;"></div>
<svg class="a" style="left:596.5px;top:181.5px;" width="8" height="5" viewBox="0 0 8 5"><path d="M0.7 4.3 L4 1 L7.3 4.3" stroke="#9c9c9c" stroke-width="1.1" fill="none"/></svg>
<svg class="a" style="left:596.5px;top:260.5px;" width="8" height="5" viewBox="0 0 8 5"><path d="M0.7 0.7 L4 4 L7.3 0.7" stroke="#9c9c9c" stroke-width="1.1" fill="none"/></svg>
<div class="a" style="left:594px;top:191px;width:11px;height:26px;background:#6c6c6c;background-image:radial-gradient(#5c5c5c 0.6px,transparent 0.7px);background-size:2px 2px"></div>
<span class="t" style="left:343px;top:284.8px;font-size:11px;color:#e4e4e4;transform:scaleX(0.701);transform-origin:0 0;">Size</span>
<div class="a" style="left:480.5px;top:281px;width:51px;height:15.5px;background:#444;border:1px solid #5f5f5f;border-radius:2px"></div>
<span class="t" style="left:484px;top:283.45px;font-size:11px;color:#f2f2f2;transform:scaleX(0.892);transform-origin:0 0;">92 px</span>
<div class="a" style="left:343.5px;top:306px;width:186.5px;height:2px;background:#7c7c7c;"></div>
<svg class="a" style="left:422px;top:308.3px;" width="13" height="11.6" viewBox="0 0 13 11.6"><path d="M6.5 1.7 C6.9 1.7 7.2 1.9 7.5 2.2 L10.6 5.6 C10.9 5.9 11 6.2 11 6.6 L11 8.8 C11 9.6 10.5 10.1 9.7 10.1 L3.3 10.1 C2.5 10.1 2 9.6 2 8.8 L2 6.6 C2 6.2 2.1 5.9 2.4 5.6 L5.5 2.2 C5.8 1.9 6.1 1.7 6.5 1.7 Z" fill="#f6f6f6" stroke="#2b2b2b" stroke-width="2.2" paint-order="stroke" stroke-linejoin="round"/></svg>
<div class="a" style="left:341.5px;top:327px;width:9px;height:9px;background:#4d4d4d;border:1px solid #707070;border-radius:2px"></div>
<span class="t" style="left:355px;top:325.8px;font-size:11px;color:#ececec;transform:scaleX(0.782);transform-origin:0 0;">Flip X</span>
<div class="a" style="left:386px;top:327px;width:9px;height:9px;background:#4d4d4d;border:1px solid #707070;border-radius:2px"></div>
<span class="t" style="left:399.5px;top:325.8px;font-size:11px;color:#ececec;transform:scaleX(0.788);transform-origin:0 0;">Flip Y</span>
<span class="t" style="left:366px;top:352.2px;font-size:11px;color:#e4e4e4;transform:scaleX(0.818);transform-origin:0 0;">Angle:</span>
<div class="a" style="left:397.5px;top:350px;width:46.5px;height:15px;background:#444;border:1px solid #5f5f5f;border-radius:2px"></div>
<span class="t" style="left:402px;top:352.2px;font-size:11px;color:#f2f2f2;transform:scaleX(0.903);transform-origin:0 0;">0°</span>
<span class="t" style="left:343px;top:376.2px;font-size:11px;color:#e4e4e4;transform:scaleX(0.826);transform-origin:0 0;">Roundness:</span>
<div class="a" style="left:397.5px;top:374px;width:46.5px;height:14.5px;background:#444;border:1px solid #5f5f5f;border-radius:2px"></div>
<span class="t" style="left:402px;top:375.95px;font-size:11px;color:#f2f2f2;transform:scaleX(0.853);transform-origin:0 0;">100%</span>
<div class="a" style="left:460.5px;top:321.5px;width:70.5px;height:70.5px;background:#4d4d4d;border:1px solid #868686"></div>
<svg class="a" style="left:461px;top:322px;" width="70" height="70" viewBox="0 0 70 70"><circle cx="35.3" cy="35" r="23.5" fill="none" stroke="#8a8a8a" stroke-width="1.3"/><path d="M11.8 35 H58.8 M35.3 11.5 V58.5" stroke="#8a8a8a" stroke-width="1"/><circle cx="35.3" cy="11.6" r="3" fill="#f2f2f2"/><circle cx="35.3" cy="58.6" r="3" fill="#f2f2f2"/><path d="M60.5 31.5 L66.5 35 L60.5 38.5 Z" fill="#f2f2f2"/></svg>
<span class="t" style="left:343px;top:399.2px;font-size:11px;color:#e4e4e4;transform:scaleX(0.797);transform-origin:0 0;">Hardness</span>
<div class="a" style="left:484.5px;top:397px;width:47px;height:15px;background:#444;border:1px solid #5f5f5f;border-radius:2px"></div>
<span class="t" style="left:489.5px;top:399.2px;font-size:11px;color:#f2f2f2;transform:scaleX(0.853);transform-origin:0 0;">100%</span>
<div class="a" style="left:343.5px;top:418.5px;width:186.5px;height:2px;background:#7c7c7c;"></div>
<svg class="a" style="left:523.2px;top:421.1px;" width="13" height="11.6" viewBox="0 0 13 11.6"><path d="M6.5 1.7 C6.9 1.7 7.2 1.9 7.5 2.2 L10.6 5.6 C10.9 5.9 11 6.2 11 6.6 L11 8.8 C11 9.6 10.5 10.1 9.7 10.1 L3.3 10.1 C2.5 10.1 2 9.6 2 8.8 L2 6.6 C2 6.2 2.1 5.9 2.4 5.6 L5.5 2.2 C5.8 1.9 6.1 1.7 6.5 1.7 Z" fill="#f6f6f6" stroke="#2b2b2b" stroke-width="2.2" paint-order="stroke" stroke-linejoin="round"/></svg>
<div class="a" style="left:341.5px;top:439.5px;width:9px;height:9px;background:#f4f4f4;border-radius:2px"></div>
<svg class="a" style="left:341.5px;top:439.5px;" width="9" height="9" viewBox="0 0 9 9"><path d="M1.8 4.6 L3.8 6.8 L7.4 2" stroke="#222" stroke-width="1.5" fill="none"/></svg>
<span class="t" style="left:355px;top:438.3px;font-size:11px;color:#ececec;transform:scaleX(0.805);transform-origin:0 0;">Spacing</span>
<div class="a" style="left:484.5px;top:435.5px;width:47px;height:14.5px;background:#444;border:1px solid #5f5f5f;border-radius:2px"></div>
<span class="t" style="left:489.5px;top:437.45px;font-size:11px;color:#f2f2f2;transform:scaleX(0.849);transform-origin:0 0;">5%</span>
<div class="a" style="left:343.5px;top:456.5px;width:186.5px;height:2px;background:#7c7c7c;"></div>
<svg class="a" style="left:340px;top:459.3px;" width="13" height="11.6" viewBox="0 0 13 11.6"><path d="M6.5 1.7 C6.9 1.7 7.2 1.9 7.5 2.2 L10.6 5.6 C10.9 5.9 11 6.2 11 6.6 L11 8.8 C11 9.6 10.5 10.1 9.7 10.1 L3.3 10.1 C2.5 10.1 2 9.6 2 8.8 L2 6.6 C2 6.2 2.1 5.9 2.4 5.6 L5.5 2.2 C5.8 1.9 6.1 1.7 6.5 1.7 Z" fill="#f6f6f6" stroke="#2b2b2b" stroke-width="2.2" paint-order="stroke" stroke-linejoin="round"/></svg>
<div class="a" style="left:250px;top:504.5px;width:321.5px;height:92px;background:#757575;border:1px solid #4a4a4a"></div>
<svg class="a" style="left:250px;top:504.5px;" width="321.5" height="92" viewBox="0 0 321.5 92"><path d="M32 46.5 C60 35.5 80 31.5 102 32.5 C140 34.5 170 53.5 210 58.5 C245 61.5 268 55.5 289 47" stroke="#fff" stroke-width="56" stroke-linecap="round" fill="none"/></svg>
<div class="a" style="left:209px;top:602px;width:405px;height:1px;background:#444;"></div>
<svg class="a" style="left:577px;top:608.5px;" width="11" height="11" viewBox="0 0 11 11"><rect x="0.7" y="0.7" width="9.6" height="9.6" rx="1" fill="none" stroke="#e0e0e0" stroke-width="1.3"/><path d="M5.5 3 V8 M3 5.5 H8" stroke="#e0e0e0" stroke-width="1.5"/></svg>
<div class="a" style="left:207px;top:626px;width:407px;height:7px;background:#535353;"></div>
<div class="a" style="left:207px;top:632.5px;width:407px;height:1px;background:#444;"></div>
<div class="a" style="left:207px;top:633.5px;width:407px;height:6.5px;background:#4b4b4b;"></div>
<div class="a" style="left:207px;top:633.5px;width:43px;height:6.5px;background:#525252;"></div>
<div class="a" style="left:598px;top:633.5px;width:16px;height:6.5px;background:#5a5a5a;"></div>
<svg class="a" style="left:240px;top:634px;" width="4" height="5" viewBox="0 0 4 5"><path d="M0.5 4.5 L3.5 0.5" stroke="#8c8c8c" stroke-width="1"/></svg>
<svg class="a" style="left:256px;top:634px;" width="4" height="5" viewBox="0 0 4 5"><path d="M0.5 0.5 L3.5 4.5" stroke="#8c8c8c" stroke-width="1"/></svg>
<svg class="a" style="left:587px;top:634px;" width="4" height="5" viewBox="0 0 4 5"><path d="M0.5 4.5 L3.5 0.5" stroke="#8c8c8c" stroke-width="1"/></svg>
<div class="a" style="left:362px;top:634px;width:125px;height:6px;background:#636363;"></div>
<span class="t" style="left:400px;top:627.5px;font-size:4px;color:#3e3e3e;transform:scaleX(2.025);transform-origin:0 0;">::::::::</span>
<div class="a" style="left:613px;top:54px;width:3px;height:586px;background:#3b3b3b;"></div>
<div class="a" style="left:650px;top:64px;width:1px;height:576px;background:#4b4b4b;"></div>
<div class="a" style="left:651px;top:64px;width:1px;height:576px;background:#393939;"></div>
<div class="a" style="left:652px;top:64px;width:1px;height:576px;background:#474747;"></div>
<div class="a" style="left:616px;top:64px;width:344px;height:1px;background:#3a3a3a;"></div>
<div class="a" style="left:616px;top:65px;width:344px;height:1px;background:#464646;"></div>
<div class="a" style="left:958.5px;top:54px;width:1.5px;height:586px;background:#505050;"></div>
<div class="a" style="left:616px;top:66px;width:34px;height:574px;background:#535353;"></div>
<div class="a" style="left:616px;top:102px;width:34px;height:1.5px;background:#383838;"></div>
<div class="a" style="left:616px;top:139.5px;width:34px;height:1.5px;background:#383838;"></div>
<div class="a" style="left:616px;top:177px;width:34px;height:1.5px;background:#383838;"></div>
<div class="a" style="left:616px;top:240.5px;width:34px;height:1.5px;background:#383838;"></div>
<div class="a" style="left:616px;top:303.5px;width:34px;height:1.5px;background:#383838;"></div>
<div class="a" style="left:616px;top:341px;width:34px;height:1.5px;background:#383838;"></div>
<div class="a" style="left:616px;top:379.5px;width:34px;height:1.5px;background:#383838;"></div>
<div class="a" style="left:616px;top:417px;width:34px;height:1.5px;background:#383838;"></div>
<div class="a" style="left:616px;top:454.5px;width:34px;height:1.5px;background:#383838;"></div>
<div class="a" style="left:624px;top:68.5px;width:18px;height:3.5px;background:transparent;background-image:repeating-linear-gradient(90deg,#444 0 1.4px,transparent 1.4px 3.3px)"></div>
<div class="a" style="left:624px;top:107px;width:18px;height:3.5px;background:transparent;background-image:repeating-linear-gradient(90deg,#444 0 1.4px,transparent 1.4px 3.3px)"></div>
<div class="a" style="left:624px;top:144.5px;width:18px;height:3.5px;background:transparent;background-image:repeating-linear-gradient(90deg,#444 0 1.4px,transparent 1.4px 3.3px)"></div>
<div class="a" style="left:624px;top:182px;width:18px;height:3.5px;background:transparent;background-image:repeating-linear-gradient(90deg,#444 0 1.4px,transparent 1.4px 3.3px)"></div>
<div class="a" style="left:624px;top:245.5px;width:18px;height:3.5px;background:transparent;background-image:repeating-linear-gradient(90deg,#444 0 1.4px,transparent 1.4px 3.3px)"></div>
<div class="a" style="left:624px;top:308.5px;width:18px;height:3.5px;background:transparent;background-image:repeating-linear-gradient(90deg,#444 0 1.4px,transparent 1.4px 3.3px)"></div>
<div class="a" style="left:624px;top:346px;width:18px;height:3.5px;background:transparent;background-image:repeating-linear-gradient(90deg,#444 0 1.4px,transparent 1.4px 3.3px)"></div>
<div class="a" style="left:624px;top:384.5px;width:18px;height:3.5px;background:transparent;background-image:repeating-linear-gradient(90deg,#444 0 1.4px,transparent 1.4px 3.3px)"></div>
<div class="a" style="left:624px;top:422px;width:18px;height:3.5px;background:transparent;background-image:repeating-linear-gradient(90deg,#444 0 1.4px,transparent 1.4px 3.3px)"></div>
<svg class="a" style="left:623.5px;top:77.8px;" width="18" height="18" viewBox="0 0 20 20"><path d="M4.2 7.2 L4.2 5.2 C4.2 4.4 4.8 4 5.4 4 L7.6 4 C8.2 4 8.8 4.4 8.8 5.2 L8.8 7.2 L11.2 7.2 L11.2 5.2 C11.2 4.4 11.8 4 12.4 4 L14.6 4 C15.2 4 15.8 4.4 15.8 5.2 L15.8 7.2 L16.5 7.2 L16.5 14.8 L3.5 14.8 L3.5 7.2 Z" fill="#e8e8e8"/></svg>
<svg class="a" style="left:623.5px;top:114px;" width="18" height="18" viewBox="0 0 20 20"><path d="M4.2 5.2 A8 8 0 1 1 3 12.5" stroke="#e8e8e8" fill="none" stroke-width="1.6"/><path d="M0.8 3 L6.6 3.4 L3.2 8 Z" fill="#e8e8e8"/><path d="M10.5 5.5 L10.5 10.8 L14 13.5" stroke="#e8e8e8" fill="none" stroke-width="1.6"/></svg>
<svg class="a" style="left:623.5px;top:152px;" width="18" height="18" viewBox="0 0 20 20"><circle cx="10" cy="10" r="8" stroke="#e8e8e8" fill="none" stroke-width="1.5"/><rect x="9.2" y="8.6" width="1.7" height="6" fill="#e8e8e8"/><circle cx="10" cy="6" r="1.1" fill="#e8e8e8"/></svg>
<div class="a" style="left:620px;top:188px;width:26px;height:21.5px;background:#363636;border-radius:3px;border:1px solid #5c5c5c"></div>
<svg class="a" style="left:623.5px;top:189.5px;" width="18" height="18" viewBox="0 0 20 20"><g transform="translate(6.5,1.5) scale(0.78)"><path d="M18.5 0.8 C15.5 2.6 10.4 7.8 7.8 11.6 L10.2 14 C13.6 10.8 18 5 18.5 0.8 Z" fill="#e8e8e8"/><path d="M7 12.4 C4.4 12.4 3.8 14.8 3.6 16.4 C3.4 17.8 2.4 18.6 1.4 18.9 C4.6 19.8 8.2 18.8 9.4 14.8 Z" fill="#e8e8e8"/></g><path d="M1 3.5 H3 M1 7 H3 M1 10.5 H3" stroke="#e8e8e8" stroke-width="1.4"/><path d="M4 3.5 H7.5 M4 7 H6.5 M4 10.5 H5.5" stroke="#e8e8e8" stroke-width="1.2"/></svg>
<svg class="a" style="left:623.5px;top:216px;" width="18" height="18" viewBox="0 0 20 20"><path d="M8 4.5 H18" stroke="#e8e8e8" stroke-width="2"/><path d="M1 4.5 C1 2.5 4 2 8 3.2 L8 5.8 C4 7 1 6.5 1 4.5 Z" fill="#e8e8e8"/><path d="M3 12.5 H12" stroke="#e8e8e8" stroke-width="2"/><path d="M12 12.5 C12 8.5 17.5 8 17.5 12.5 C17.5 17 12 16.5 12 12.5 Z" fill="#e8e8e8"/><path d="M11 12.5 L15 9.5 L15 15.5 Z" fill="#e8e8e8"/></svg>
<svg class="a" style="left:623.5px;top:254px;" width="18" height="18" viewBox="0 0 20 20"><path d="M2 4.5 H18 M2 10 H18 M2 15.5 H18" stroke="#e8e8e8" fill="none" stroke-width="1.2"/><circle cx="12.5" cy="4.5" r="2.1" fill="#535353" stroke="#e8e8e8" stroke-width="1.2"/><circle cx="6.5" cy="10" r="2.1" fill="#535353" stroke="#e8e8e8" stroke-width="1.2"/><circle cx="13" cy="15.5" r="2.1" fill="#535353" stroke="#e8e8e8" stroke-width="1.2"/></svg>
<svg class="a" style="left:623.5px;top:279.5px;" width="18" height="18" viewBox="0 0 20 20"><path d="M1 3 H3 M1 6 H3 M1 9 H3" stroke="#e8e8e8" stroke-width="1.3"/><path d="M4 3 H7 M4 6 H6.5 M4 9 H6" stroke="#e8e8e8" stroke-width="1.1"/><path d="M11 3.5 C11 2 14.5 2 14.5 3.5 L14 9 L18.5 10.8 L18.5 13.5 L7 13.5 L7 10.8 L11.5 9 Z" fill="#e8e8e8"/><rect x="6.5" y="15" width="12.5" height="2.2" fill="#e8e8e8"/></svg>
<svg class="a" style="left:623.5px;top:316.5px;" width="18" height="18" viewBox="0 0 20 20"><path d="M10 1.5 L17.5 5.5 L17.5 14 L10 18.5 L2.5 14 L2.5 5.5 Z" stroke="#e8e8e8" fill="none" stroke-width="1.4" stroke-linejoin="round"/><path d="M2.5 5.5 L10 9.8 L17.5 5.5 M10 9.8 L10 18.5" stroke="#e8e8e8" fill="none" stroke-width="1.4"/></svg>
<svg class="a" style="left:623.5px;top:353.5px;" width="18" height="18" viewBox="0 0 20 20"><circle cx="10" cy="10" r="7.6" stroke="#e8e8e8" fill="none" stroke-width="1.8"/><path d="M15.4 4.6 A7.6 7.6 0 0 1 4.6 15.4 Z" fill="#e8e8e8"/></svg>
<svg class="a" style="left:623.5px;top:391px;" width="18" height="18" viewBox="0 0 20 20"><path d="M9 3 H16 V4.8 H14.8 V17 H13 V4.8 H11 V17 H9.2 V11 C3.5 11 3.5 3 9 3 Z" fill="#e8e8e8"/></svg>
<span class="t" style="left:625.3px;top:429.8px;font-size:17px;color:#f0f0f0;transform:scaleX(1.014);transform-origin:0 0;">A</span>
<div class="a" style="left:638.3px;top:430.5px;width:1.3px;height:16px;background:#f0f0f0;"></div>
<div class="a" style="left:652.5px;top:65px;width:307.5px;height:575px;background:#535353;"></div>
<div class="a" style="left:652.5px;top:65px;width:307.5px;height:25.5px;background:#424242;"></div>
<div class="a" style="left:691.5px;top:65px;width:1px;height:25.5px;background:#393939;"></div>
<span class="t" style="left:661px;top:71.25px;font-size:10.5px;color:#b2b2b2;font-weight:bold;will-change:transform;transform:scaleX(0.839);transform-origin:0 0;">Color</span>
<div class="a" style="left:747.5px;top:65px;width:1px;height:25.5px;background:#393939;"></div>
<span class="t" style="left:700px;top:71.25px;font-size:10.5px;color:#b2b2b2;font-weight:bold;will-change:transform;transform:scaleX(0.826);transform-origin:0 0;">Swatches</span>
<div class="a" style="left:800px;top:65px;width:1px;height:25.5px;background:#393939;"></div>
<span class="t" style="left:756px;top:71.25px;font-size:10.5px;color:#b2b2b2;font-weight:bold;will-change:transform;transform:scaleX(0.845);transform-origin:0 0;">Patterns</span>
<div class="a" style="left:800.5px;top:65px;width:59px;height:26px;background:#535353;"></div>
<span class="t" style="left:808.5px;top:71.25px;font-size:10.5px;color:#f6f6f6;font-weight:bold;will-change:transform;transform:scaleX(0.888);transform-origin:0 0;">Navigator</span>
<div class="a" style="left:916px;top:65px;width:1px;height:25.5px;background:#393939;"></div>
<span class="t" style="left:867px;top:71.25px;font-size:10.5px;color:#b2b2b2;font-weight:bold;will-change:transform;transform:scaleX(0.847);transform-origin:0 0;">Gradients</span>
<svg class="a" style="left:946px;top:74px;" width="8" height="6" viewBox="0 0 8 6"><path d="M0 0.7 H8 M0 2.3 H8 M0 3.9 H8 M0 5.5 H8" stroke="#909090" stroke-width="1"/></svg>
<svg class="a" style="left:722px;top:95.5px" width="162.6" height="162.6" viewBox="0 0 163 163"><rect x="0.8" y="0.8" width="161.4" height="161.4" fill="#fef6ea" stroke="#e5444a" stroke-width="1.7"/><path d="M28 116.2 L28 47.5 A26.5 26.5 0 0 1 81 47.5 L81 116.2 Z" fill="#f8d6cc"/><path d="M85.6 32.8 C79 32.8 74 35.5 71.9 39.6 C67 46 65 52 63.7 57.4 C62 64 61 69 59.6 73.8 C58.5 78 57 82 56 86.2 C56.5 88.5 58 90 59.6 90.8 C63 93.5 67 95.5 71.9 97.1 L97.9 96.3 C102 95.8 106 95 108.8 93.5 C111 92 112.8 90 113.5 87.5 C112.8 83 112.2 78 111.6 73.8 C110.8 68 109.8 62 108.3 57.4 C106.5 50 104 44 100.6 39.6 C97 35 92 32.8 85.6 32.8 Z" fill="#23231c"/><path d="M78.5 84 L97.5 84 L98 99 L104 101 L87.1 149.8 L72 101 L78.5 99 Z" fill="#f0cdb0"/><path d="M70.5 64 C70 52 76 42.5 86 42 C87 41.8 88 41.8 89 42 C99 42.5 106.5 52 106 65 C105.5 76 98 90.3 88 90.3 C78 90.3 71 76 70.5 64 Z" fill="#f0cdb0"/><path d="M85.8 33 L86.8 43" stroke="#fef6ea" stroke-width="0.6"/><path d="M81 79.5 C83 76 85.5 76.5 87.2 77.5 C89 76.5 91.5 76 93.5 79.5 C91.5 84 83 84 81 79.5 Z" fill="#8b2a12"/><path d="M82.5 80 C85.5 81.3 89 81.3 92 80 C90 83 84.5 83 82.5 80 Z" fill="#b4551a"/><ellipse cx="68.3" cy="81.7" rx="5.4" ry="9" fill="#f6b11d"/><ellipse cx="110.2" cy="79.7" rx="5.4" ry="8.9" fill="#f6b11d"/><path d="M76.5 90 C82 93 93 93 98.5 89.6 L98.5 93 C93 96.6 82 96.6 76.5 93.4 Z" fill="#f6b11d"/><path d="M41 106.1 L74.6 99.8 L87.1 149.8 L100 99.5 L134 106.1 L113 147.2 L64.5 147.2 Z" fill="#b4551a"/><path d="M50 112 C56 112 60 116 58 122 C56 128 62 132 68 130 M56 106 C66 108 70 116 66 124 C64 130 72 138 78 136 M62 103 C74 106 78 118 74 126 M58 136 C62 132 68 134 70 140 C71 144 76 146 80 144 M100 104 C96 112 100 120 108 120 C114 120 116 126 112 132 M106 102 C104 108 108 114 116 114 C122 114 124 118 122 122 M112 102 C112 106 118 110 124 108 M96 130 C100 126 106 128 106 134 C106 140 100 144 96 147 M80 147 C80 141 94 141 94 147 M83 147 C83 144 91 144 91 147 M68 112 C72 116 70 122 74 124" stroke="#f2dcc6" stroke-width="0.7" fill="none" stroke-dasharray="3 0.8"/><path d="M41 106.1 L30.9 141.5 L62 147.2 L64.5 147.2 Z" fill="#8b9e94"/><path d="M134 106.1 L145 141 L115 147.2 L113 147.2 Z" fill="#8b9e94"/><path d="M41 106.1 L64.5 147.2 M74.6 99.8 L87.1 149.8 L100 99.5 M134 106.1 L113 147.2" stroke="#fef6ea" stroke-width="0.9" fill="none"/><path d="M7.6 43.7 C12 44.5 17 45 21.3 46.5 C25.5 48 29 50 32.2 53.3 C36 57 39 62 41 68.4 C42 71 42.4 73 42.6 75.2 L41 76.6 C39.5 75 38 73.5 36.3 72.4 C32.5 69.5 29 66.5 25.4 62.9 C21.5 59.5 17.5 56.5 14.5 53.3 C11.5 50 9 47 7.6 43.7 Z" fill="#8b9e94"/><path d="M50 16.5 C52.5 24 54.5 34 52.5 46 C51.5 52 49.5 57 47.5 60.5 C42.5 50 40 38 44.5 27 C46 23 48 19.5 50 16.5 Z" fill="#8b9e94"/><path d="M76.5 17 C74.5 28 69 40 61 48.5 C58.5 51 56.5 52.5 54.5 53.5 C55 42 61 29 70 21.5 C72 19.8 74.5 18 76.5 17 Z" fill="#8b9e94"/><path d="M92.5 47.5 C85 57 71 65.5 57 67.5 C53 68 49.5 68 47 67.5 C54.5 57 68 49 82.5 47.5 C86 47 89.5 47 92.5 47.5 Z" fill="#8b9e94"/><path d="M42 75 C38.5 88 37.5 102 39.5 118" stroke="#8b9e94" stroke-width="0.9" fill="none"/><path d="M47.5 60 C44.5 66 42.8 71 42.2 76" stroke="#8b9e94" stroke-width="0.9" fill="none"/><path d="M103.5 81.5 C111 81.5 121 84.5 127.5 90.5 C129.5 92.3 130.8 94 131.5 95 C122 95.5 112 92.5 106 86.5 C105 85 104 83 103.5 81.5 Z" fill="#8b9e94"/><path d="M111.5 64 C116 68 120.5 74 123.5 81 C124.3 83 124.8 85 125 86.5 C119.5 82.5 114.5 76 112.5 69 Z" fill="#8b9e94"/><path d="M129.5 62.5 C132.5 68 133.5 76 131.5 84 C130.8 87 129.8 89 129 90.5 C125.5 84 125.5 74 127.5 66.5 Z" fill="#8b9e94"/><path d="M155 79.5 C152 87.5 146 95.5 138 99.5 C136 100.5 134.3 101 133 101.3 C135 93.5 140 85.5 148 82 C150.5 80.8 153 80 155 79.5 Z" fill="#8b9e94"/><path d="M125 86 C130 92 133.5 100 134.5 111" stroke="#8b9e94" stroke-width="0.9" fill="none"/><circle cx="90.2" cy="24.6" r="3.6" fill="#8b9e94"/><circle cx="142.5" cy="112" r="2.7" fill="#8b9e94"/><circle cx="28.5" cy="150" r="2.9" fill="#8b9e94"/></svg>
<div class="a" style="left:652.5px;top:263px;width:307.5px;height:1px;background:#484848;"></div>
<div class="a" style="left:652.5px;top:264px;width:52.5px;height:21.5px;background:#4a4a4a;"></div>
<span class="t" style="left:657px;top:269.5px;font-size:11px;color:#dce4ec;transform:scaleX(0.831);transform-origin:0 0;">33.33%</span>
<svg class="a" style="left:710.5px;top:272.5px;" width="10" height="6" viewBox="0 0 10 6"><path d="M0 6 L3.2 1.8 L5 4 L6.3 2.8 L10 6 Z" fill="#dcdcdc"/></svg>
<div class="a" style="left:732.5px;top:272px;width:177.5px;height:2px;background:#7c7c7c;"></div>
<svg class="a" style="left:800.2px;top:273.1px;" width="13" height="11.6" viewBox="0 0 13 11.6"><path d="M6.5 1.7 C6.9 1.7 7.2 1.9 7.5 2.2 L10.6 5.6 C10.9 5.9 11 6.2 11 6.6 L11 8.8 C11 9.6 10.5 10.1 9.7 10.1 L3.3 10.1 C2.5 10.1 2 9.6 2 8.8 L2 6.6 C2 6.2 2.1 5.9 2.4 5.6 L5.5 2.2 C5.8 1.9 6.1 1.7 6.5 1.7 Z" fill="#f6f6f6" stroke="#2b2b2b" stroke-width="2.2" paint-order="stroke" stroke-linejoin="round"/></svg>
<svg class="a" style="left:920px;top:270px;" width="16" height="8.5" viewBox="0 0 16 8.5"><path d="M0 8.5 L5.2 1.5 L8 5 L10.2 2.8 L16 8.5 Z" fill="#dcdcdc"/></svg>
<div class="a" style="left:652.5px;top:285.5px;width:307.5px;height:3.5px;background:#383838;"></div>
<div class="a" style="left:652.5px;top:289px;width:307.5px;height:25px;background:#424242;"></div>
<div class="a" style="left:652.5px;top:289px;width:48.5px;height:25.5px;background:#535353;"></div>
<span class="t" style="left:661px;top:294.55px;font-size:10.5px;color:#f6f6f6;font-weight:bold;will-change:transform;transform:scaleX(0.871);transform-origin:0 0;">History</span>
<svg class="a" style="left:946px;top:297.5px;" width="8" height="6" viewBox="0 0 8 6"><path d="M0 0.7 H8 M0 2.3 H8 M0 3.9 H8 M0 5.5 H8" stroke="#909090" stroke-width="1"/></svg>
<div class="a" style="left:652.5px;top:314px;width:291px;height:77px;background:#535353;"></div>
<div class="a" style="left:652.5px;top:370px;width:291px;height:21px;background:#6b6b6b;"></div>
<div class="a" style="left:652.5px;top:327px;width:291px;height:1px;background:#474747;"></div>
<div class="a" style="left:652.5px;top:348.3px;width:291px;height:1px;background:#474747;"></div>
<div class="a" style="left:652.5px;top:369.7px;width:291px;height:1px;background:#474747;"></div>
<div class="a" style="left:652.5px;top:390.8px;width:291px;height:1px;background:#474747;"></div>
<div class="a" style="left:657.6px;top:318.6px;width:11.6px;height:5.2px;background:transparent;border:1px solid #484848;border-top:none"></div>
<svg class="a" style="left:681.5px;top:317.6px;" width="13" height="8" viewBox="0 0 13 8"><rect x="0.6" y="-5" width="11.8" height="12.1" fill="none" stroke="#dcdcdc" stroke-width="1.2"/><path d="M2.5 1.3 H10.5" stroke="#dcdcdc" stroke-width="1.4"/><path d="M2.5 3.9 H10.5" stroke="#dcdcdc" stroke-width="0.9"/></svg>
<div class="a" style="left:700px;top:318.5px;width:60px;height:9px;overflow:hidden"><span class="t" style="left:5.5px;top:-8.2px;font-size:11px;color:#dcdcdc;transform:scaleX(0.93);transform-origin:0 0">New Layer</span></div>
<div class="a" style="left:657.6px;top:332.4px;width:11.6px;height:11.8px;background:transparent;border:1px solid #484848"></div>
<svg class="a" style="left:681.2px;top:330.8px;" width="15.6" height="15.6" viewBox="0 0 20 20"><path d="M18.5 0.8 C15.5 2.6 10.4 7.8 7.8 11.6 L10.2 14 C13.6 10.8 18 5 18.5 0.8 Z" fill="#e8e8e8"/><path d="M7 12.4 C4.4 12.4 3.8 14.8 3.6 16.4 C3.4 17.8 2.4 18.6 1.4 18.9 C4.6 19.8 8.2 18.8 9.4 14.8 Z" fill="#e8e8e8"/></svg>
<span class="t" style="left:705.5px;top:331.5px;font-size:11px;color:#e6e6e6;transform:scaleX(0.850);transform-origin:0 0;">Brush Tool</span>
<div class="a" style="left:657.6px;top:353.9px;width:11.6px;height:11.8px;background:transparent;border:1px solid #484848"></div>
<svg class="a" style="left:681.2px;top:352.3px;" width="15.6" height="15.6" viewBox="0 0 20 20"><path d="M18.5 0.8 C15.5 2.6 10.4 7.8 7.8 11.6 L10.2 14 C13.6 10.8 18 5 18.5 0.8 Z" fill="#e8e8e8"/><path d="M7 12.4 C4.4 12.4 3.8 14.8 3.6 16.4 C3.4 17.8 2.4 18.6 1.4 18.9 C4.6 19.8 8.2 18.8 9.4 14.8 Z" fill="#e8e8e8"/></svg>
<span class="t" style="left:705.5px;top:353px;font-size:11px;color:#e6e6e6;transform:scaleX(0.850);transform-origin:0 0;">Brush Tool</span>
<div class="a" style="left:657.6px;top:375.1px;width:11.6px;height:11.8px;background:transparent;border:1px solid #484848"></div>
<svg class="a" style="left:681.2px;top:373.5px;" width="15.6" height="15.6" viewBox="0 0 20 20"><path d="M18.5 0.8 C15.5 2.6 10.4 7.8 7.8 11.6 L10.2 14 C13.6 10.8 18 5 18.5 0.8 Z" fill="#e8e8e8"/><path d="M7 12.4 C4.4 12.4 3.8 14.8 3.6 16.4 C3.4 17.8 2.4 18.6 1.4 18.9 C4.6 19.8 8.2 18.8 9.4 14.8 Z" fill="#e8e8e8"/></svg>
<span class="t" style="left:705.5px;top:374.2px;font-size:11px;color:#e6e6e6;transform:scaleX(0.850);transform-origin:0 0;">Brush Tool</span>
<div class="a" style="left:943.5px;top:314px;width:16.5px;height:77px;background:#4a4a4a;"></div>
<svg class="a" style="left:947.5px;top:325.5px;" width="8" height="5" viewBox="0 0 8 5"><path d="M0.7 4.3 L4 1 L7.3 4.3" stroke="#a8a8a8" stroke-width="1.1" fill="none"/></svg>
<svg class="a" style="left:947.5px;top:379.5px;" width="8" height="5" viewBox="0 0 8 5"><path d="M0.7 0.7 L4 4 L7.3 0.7" stroke="#a8a8a8" stroke-width="1.1" fill="none"/></svg>
<div class="a" style="left:946px;top:358.5px;width:9.5px;height:16.5px;background:#6c6c6c;background-image:radial-gradient(#5c5c5c 0.6px,transparent 0.7px);background-size:2px 2px"></div>
<svg class="a" style="left:864px;top:398px;" width="13" height="12" viewBox="0 0 13 12"><path d="M4.5 0.5 H9.5 L12.5 3.5 V11 H4.5 Z" fill="#e0e0e0"/><path d="M9.2 0.5 V3.8 H12.5" fill="none" stroke="#535353" stroke-width="0.9"/><path d="M0 7 H7.4 M3.7 3.3 V10.7" stroke="#535353" stroke-width="3.6"/><path d="M0.5 7 H6.9 M3.7 3.8 V10.2" stroke="#e8e8e8" stroke-width="1.8"/></svg>
<svg class="a" style="left:895px;top:398.5px;" width="12" height="11" viewBox="0 0 12 11"><path d="M0.5 2.8 H3.2 L4.3 1 H7.7 L8.8 2.8 H11.5 V10.3 H0.5 Z" fill="#e0e0e0"/><circle cx="6" cy="6.4" r="2.4" fill="#535353"/><circle cx="6" cy="6.4" r="1.2" fill="#e0e0e0"/></svg>
<svg class="a" style="left:922.5px;top:398px;" width="10" height="12" viewBox="0 0 10 12"><path d="M0.5 2.4 H9.5 M3.5 2.2 V0.8 H6.5 V2.2" stroke="#e0e0e0" stroke-width="1.2" fill="none"/><path d="M1.4 3.6 H8.6 L8 11.3 H2 Z" fill="none" stroke="#e0e0e0" stroke-width="1.2"/><path d="M3.6 5 V10 M5 5 V10 M6.4 5 V10" stroke="#e0e0e0" stroke-width="0.8"/></svg>
<div class="a" style="left:652.5px;top:413.5px;width:307.5px;height:3.5px;background:#383838;"></div>
<div class="a" style="left:652.5px;top:417px;width:307.5px;height:25px;background:#424242;"></div>
<div class="a" style="left:748px;top:417px;width:43px;height:25.5px;background:#535353;"></div>
<div class="a" style="left:707px;top:417px;width:1px;height:25px;background:#393939;"></div>
<span class="t" style="left:661px;top:422.75px;font-size:10.5px;color:#b2b2b2;font-weight:bold;will-change:transform;transform:scaleX(0.825);transform-origin:0 0;">Channels</span>
<span class="t" style="left:716px;top:422.75px;font-size:10.5px;color:#b2b2b2;font-weight:bold;will-change:transform;transform:scaleX(0.822);transform-origin:0 0;">Paths</span>
<span class="t" style="left:756px;top:422.75px;font-size:10.5px;color:#f6f6f6;font-weight:bold;will-change:transform;transform:scaleX(0.812);transform-origin:0 0;">Layers</span>
<svg class="a" style="left:946px;top:425.5px;" width="8" height="6" viewBox="0 0 8 6"><path d="M0 0.7 H8 M0 2.3 H8 M0 3.9 H8 M0 5.5 H8" stroke="#909090" stroke-width="1"/></svg>
<div class="a" style="left:656px;top:451.5px;width:78.5px;height:16px;background:#454545;border:1px solid #4e4e4e;border-radius:2px"></div>
<svg class="a" style="left:662px;top:454.5px;" width="10.5" height="10.5" viewBox="0 0 10.5 10.5"><circle cx="4.1" cy="4.1" r="3.2" fill="none" stroke="#e6e6e6" stroke-width="1.4"/><path d="M6.4 6.4 L9.8 9.8" stroke="#e6e6e6" stroke-width="1.7"/></svg>
<span class="t" style="left:675.5px;top:454.2px;font-size:11px;color:#f0f0f0;transform:scaleX(0.818);transform-origin:0 0;">Kind</span>
<svg class="a" style="left:725.5px;top:457.5px;" width="7" height="5" viewBox="0 0 7 5"><path d="M0.7 0.7 L3.5 3.5 L6.3 0.7" stroke="#cfcfcf" stroke-width="1.1" fill="none"/></svg>
<svg class="a" style="left:746px;top:454.5px;" width="12" height="10" viewBox="0 0 12 10"><rect x="0.6" y="0.6" width="10.8" height="8.8" rx="1" fill="none" stroke="#e0e0e0" stroke-width="1.2"/><path d="M2.2 7.8 L4.6 4.6 L6.2 6.4 L7.4 5.2 L9.8 7.8 Z" fill="#e0e0e0"/></svg>
<svg class="a" style="left:768px;top:454px;" width="12" height="12" viewBox="0 0 12 12"><circle cx="6" cy="6" r="4.8" fill="none" stroke="#e0e0e0" stroke-width="1.3"/><path d="M9.4 2.6 A4.8 4.8 0 0 1 2.6 9.4 Z" fill="#e0e0e0"/></svg>
<svg class="a" style="left:790.5px;top:454.5px;" width="10" height="11" viewBox="0 0 10 11"><path d="M0.5 0.5 H9.5 V3 H8.6 L8.2 1.8 H5.9 V9 L7.2 9.4 V10.3 H2.8 V9.4 L4.1 9 V1.8 H1.8 L1.4 3 H0.5 Z" fill="#e6e6e6"/></svg>
<svg class="a" style="left:811.5px;top:454px;" width="12" height="12" viewBox="0 0 12 12"><rect x="2" y="2" width="8" height="8" fill="none" stroke="#e0e0e0" stroke-width="1.2"/><rect x="0.3" y="0.3" width="3" height="3" fill="#e0e0e0"/><rect x="8.7" y="0.3" width="3" height="3" fill="#e0e0e0"/><rect x="0.3" y="8.7" width="3" height="3" fill="#e0e0e0"/><rect x="8.7" y="8.7" width="3" height="3" fill="#e0e0e0"/></svg>
<svg class="a" style="left:835px;top:454px;" width="11" height="12" viewBox="0 0 11 12"><path d="M3.5 0.6 H7.5 L10.4 3.6 V11.4 H6" fill="none" stroke="#e0e0e0" stroke-width="1.2"/><path d="M7.2 0.8 V4 H10.2" fill="none" stroke="#e0e0e0" stroke-width="1"/><rect x="0.5" y="5.5" width="5.5" height="6" fill="#e0e0e0"/></svg>
<div class="a" style="left:857px;top:453px;width:7.5px;height:15px;background:#474747;border-radius:4px"></div>
<div class="a" style="left:856.5px;top:451.5px;width:8px;height:8px;background:#e4e4e4;border-radius:50%"></div>
<div class="a" style="left:652.5px;top:471.5px;width:307.5px;height:1px;background:#484848;"></div>
<div class="a" style="left:656px;top:477.5px;width:117px;height:16px;background:#454545;border:1px solid #4e4e4e;border-radius:2px"></div>
<span class="t" style="left:663.5px;top:480.2px;font-size:11px;color:#f0f0f0;transform:scaleX(0.818);transform-origin:0 0;">Normal</span>
<svg class="a" style="left:764px;top:483.5px;" width="7" height="5" viewBox="0 0 7 5"><path d="M0.7 0.7 L3.5 3.5 L6.3 0.7" stroke="#cfcfcf" stroke-width="1.1" fill="none"/></svg>
<span class="t" style="left:780px;top:480.2px;font-size:11px;color:#d8d8d8;transform:scaleX(0.830);transform-origin:0 0;">Opacity:</span>
<div class="a" style="left:817.5px;top:477.5px;width:32px;height:14.5px;background:#454545;border:1px solid #666"></div>
<div class="a" style="left:849.5px;top:477.5px;width:13.5px;height:14.5px;background:#4a4a4a;border:1px solid #666;border-left:none"></div>
<span class="t" style="left:821px;top:479.4px;font-size:11px;color:#f2f2f2;transform:scaleX(0.853);transform-origin:0 0;">100%</span>
<svg class="a" style="left:852.5px;top:483px;" width="7" height="5" viewBox="0 0 7 5"><path d="M0.7 0.7 L3.5 3.5 L6.3 0.7" stroke="#cfcfcf" stroke-width="1.1" fill="none"/></svg>
<span class="t" style="left:658.5px;top:505.2px;font-size:11px;color:#d8d8d8;transform:scaleX(0.799);transform-origin:0 0;">Lock:</span>
<svg class="a" style="left:687.5px;top:505px;" width="12" height="12" viewBox="0 0 12 12"><rect x="0.5" y="0.5" width="11" height="11" fill="#2c2c2c" stroke="#e0e0e0" stroke-width="1"/><rect x="1.2" y="1.2" width="2.6" height="2.6" fill="#e8e8e8"/><rect x="1.2" y="6" width="2.6" height="2.6" fill="#e8e8e8"/><rect x="3.6" y="3.6" width="2.6" height="2.6" fill="#e8e8e8"/><rect x="3.6" y="8.4" width="2.6" height="2.6" fill="#e8e8e8"/><rect x="6" y="1.2" width="2.6" height="2.6" fill="#e8e8e8"/><rect x="6" y="6" width="2.6" height="2.6" fill="#e8e8e8"/><rect x="8.4" y="3.6" width="2.6" height="2.6" fill="#e8e8e8"/><rect x="8.4" y="8.4" width="2.6" height="2.6" fill="#e8e8e8"/></svg>
<svg class="a" style="left:707.5px;top:503.5px;" width="14" height="14.5" viewBox="0 0 20 20"><path d="M18.5 0.8 C15.5 2.6 10.4 7.8 7.8 11.6 L10.2 14 C13.6 10.8 18 5 18.5 0.8 Z" fill="#e8e8e8"/><path d="M7 12.4 C4.4 12.4 3.8 14.8 3.6 16.4 C3.4 17.8 2.4 18.6 1.4 18.9 C4.6 19.8 8.2 18.8 9.4 14.8 Z" fill="#e8e8e8"/></svg>
<svg class="a" style="left:727.5px;top:504.5px;" width="12" height="12" viewBox="0 0 12 12"><path d="M6 1 V11 M1 6 H11" stroke="#e6e6e6" stroke-width="1.2"/><path d="M6 0 L8 2.4 L4 2.4 Z M6 12 L8 9.6 L4 9.6 Z M0 6 L2.4 4 L2.4 8 Z M12 6 L9.6 4 L9.6 8 Z" fill="#e6e6e6"/></svg>
<svg class="a" style="left:746.5px;top:504.5px;" width="13" height="12" viewBox="0 0 13 12"><path d="M2.8 0 V9.2 H13 M0 2.8 H10.2 V12" stroke="#e0e0e0" stroke-width="1.3" fill="none"/><path d="M10.5 0.5 L12.5 0.5 M12.5 0.5 V2" stroke="#e0e0e0" stroke-width="0.9" stroke-dasharray="1 0.8"/></svg>
<svg class="a" style="left:769.5px;top:504px;" width="9" height="12" viewBox="0 0 9 12"><rect x="0.5" y="5" width="8" height="6.5" rx="0.8" fill="#e6e6e6"/><path d="M2.3 5 V3.4 C2.3 0.8 6.7 0.8 6.7 3.4 V5" fill="none" stroke="#e6e6e6" stroke-width="1.3"/><rect x="3.8" y="7" width="1.4" height="2.4" fill="#535353"/></svg>
<span class="t" style="left:799.5px;top:505.2px;font-size:11px;color:#d8d8d8;transform:scaleX(0.818);transform-origin:0 0;">Fill:</span>
<div class="a" style="left:817.5px;top:503px;width:32px;height:14.5px;background:#454545;border:1px solid #666"></div>
<div class="a" style="left:849.5px;top:503px;width:13.5px;height:14.5px;background:#4a4a4a;border:1px solid #666;border-left:none"></div>
<span class="t" style="left:821px;top:504.9px;font-size:11px;color:#f2f2f2;transform:scaleX(0.853);transform-origin:0 0;">100%</span>
<svg class="a" style="left:852.5px;top:508.5px;" width="7" height="5" viewBox="0 0 7 5"><path d="M0.7 0.7 L3.5 3.5 L6.3 0.7" stroke="#cfcfcf" stroke-width="1.1" fill="none"/></svg>
<div class="a" style="left:652.5px;top:524px;width:291px;height:1px;background:#474747;"></div>
<div class="a" style="left:680.5px;top:524.5px;width:263px;height:36.5px;background:#6b6b6b;"></div>
<div class="a" style="left:652.5px;top:561px;width:291px;height:1px;background:#474747;"></div>
<div class="a" style="left:680px;top:524.5px;width:1px;height:75px;background:#474747;"></div>
<div class="a" style="left:652.5px;top:599.5px;width:291px;height:1px;background:#474747;"></div>
<div class="a" style="left:943.5px;top:524.5px;width:16.5px;height:92px;background:#4a4a4a;"></div>
<div class="a" style="left:652.5px;top:600.5px;width:291px;height:16px;background:#4a4a4a;"></div>
<svg class="a" style="left:659px;top:538px;" width="14" height="10" viewBox="0 0 14 10"><path d="M0.5 5 C3 0.8 11 0.8 13.5 5 C11 9.2 3 9.2 0.5 5 Z" fill="#f0f0f0"/><circle cx="7" cy="4.8" r="2.5" fill="#535353"/><circle cx="7" cy="4.8" r="1.3" fill="#2a2a2a"/><circle cx="6.3" cy="4.1" r="0.6" fill="#f0f0f0"/></svg>
<svg class="a" style="left:659px;top:575.5px;" width="14" height="10" viewBox="0 0 14 10"><path d="M0.5 5 C3 0.8 11 0.8 13.5 5 C11 9.2 3 9.2 0.5 5 Z" fill="#f0f0f0"/><circle cx="7" cy="4.8" r="2.5" fill="#535353"/><circle cx="7" cy="4.8" r="1.3" fill="#2a2a2a"/><circle cx="6.3" cy="4.1" r="0.6" fill="#f0f0f0"/></svg>
<div class="a" style="left:684.5px;top:529.5px;width:27px;height:27.5px;background:#fff;background-image:linear-gradient(45deg,#ccc 25%,transparent 25%,transparent 75%,#ccc 75%),linear-gradient(45deg,#ccc 25%,transparent 25%,transparent 75%,#ccc 75%);background-size:7px 7px;background-position:0 0,3.5px 3.5px;border:1px solid #3a3a3a"></div>
<svg class="a" style="left:681.8px;top:527px;" width="31.4" height="32.6" viewBox="0 0 31.4 32.6"><path d="M0.6 8.5 V0.6 H8.5 M22.9 0.6 H30.8 V8.5 M30.8 24.1 V32 H22.9 M8.5 32 H0.6 V24.1" stroke="#f4f4f4" stroke-width="1.2" fill="none"/></svg>
<span class="t" style="left:720px;top:537.8px;font-size:11px;color:#f0f0f0;transform:scaleX(0.790);transform-origin:0 0;">Layer 1</span>
<svg class="a" style="left:683.4px;top:566px" width="29.6" height="29.8" viewBox="0 0 28.5 28.5"><rect x="0.5" y="0.5" width="27.5" height="27.5" fill="#fef6ea" stroke="#2c2c2c" stroke-width="1"/><path d="M6 21 V10 A4.5 4.5 0 0 1 15 10 V21 Z" fill="#f8d6cc"/><path d="M11.5 14 C10.5 8 13 5.8 15 5.8 C18 5.8 19.5 9 19 15 Z" fill="#23231c"/><path d="M12.8 9.5 C12.8 7 17.6 7 17.6 10 C17.6 13 16.2 15 15.2 15 C14.2 15 12.8 13 12.8 9.5 Z" fill="#f0cdb0"/><path d="M14 14 H16.5 L16.8 17 L19 18 L15.3 26 L11.5 18 L13.8 17 Z" fill="#f0cdb0"/><path d="M8 18.5 L13.5 17.5 L15.3 26 L17.5 17.5 L23 19 L19.5 25.5 H11.5 Z" fill="#b4551a"/><path d="M8 18.5 L6 25 L11.5 25.5 Z M23 19 L25 24.5 L19.5 25.5 Z" fill="#8b9e94"/><path d="M2.5 8 C5 9 7.5 11 8 14.5 C5.5 13 3.5 11 2.5 8 Z M9.5 3.5 C10.5 6 10 9 8.8 11.5 C8 9 8.2 6 9.5 3.5 Z M14 3.5 C13.5 6 12 8.5 10.2 10 C10.3 7.5 11.8 5 14 3.5 Z M16.5 8.8 C15 10.5 12 12 9 12 C10.5 10 13.5 8.8 16.5 8.8 Z M18.5 14.2 C20.5 14.2 22.5 15.2 23.5 16.8 C21.5 16.8 19.5 16 18.5 14.2 Z M27 14 C26.5 15.8 25 17.2 23.5 17.8 C24 16 25.2 14.5 27 14 Z M21 10.5 C21.8 12 21.8 13.8 21 15.2 C20.3 14 20.3 12 21 10.5 Z" fill="#8b9e94"/><ellipse cx="12.3" cy="14.5" rx="0.9" ry="1.3" fill="#f6b11d"/><ellipse cx="19.5" cy="14" rx="0.9" ry="1.3" fill="#f6b11d"/><rect x="14" y="16" width="3.3" height="0.9" fill="#f6b11d"/></svg>
<span class="t" style="left:722px;top:575.8px;font-size:11px;color:#f0f0f0;transform:scaleX(0.818);transform-origin:0 0;">Layer 0</span>
<div class="a" style="left:652.5px;top:616.5px;width:307.5px;height:1px;background:#474747;"></div>
<div class="a" style="left:652.5px;top:617.5px;width:307.5px;height:22.5px;background:#535353;"></div>
<svg class="a" style="left:772px;top:623px;" width="13" height="8" viewBox="0 0 13 8"><rect x="0.6" y="1.2" width="6.6" height="5.2" rx="2.6" fill="none" stroke="#8a8a8a" stroke-width="1.2"/><rect x="5.6" y="1.2" width="6.6" height="5.2" rx="2.6" fill="none" stroke="#8a8a8a" stroke-width="1.2"/></svg>
<span class="t" style="left:798.5px;top:619.8px;font-size:13px;color:#e0e0e0;transform:scaleX(1.038);transform-origin:0 0;font-style:italic;">fx</span>
<svg class="a" style="left:808.5px;top:631px;" width="4" height="3" viewBox="0 0 4 3"><path d="M0 0 H4 L2 2.6 Z" fill="#dcdcdc"/></svg>
<svg class="a" style="left:822px;top:621.5px;" width="12" height="10" viewBox="0 0 12 10"><rect x="0.2" y="0.2" width="11.6" height="9.6" rx="0.8" fill="#e0e0e0"/><circle cx="6" cy="5" r="2.8" fill="#535353"/></svg>
<svg class="a" style="left:847.5px;top:621px;" width="12" height="12" viewBox="0 0 12 12"><circle cx="6" cy="6" r="4.9" fill="none" stroke="#e0e0e0" stroke-width="1.3"/><path d="M9.5 2.5 A4.9 4.9 0 0 1 2.5 9.5 Z" fill="#e0e0e0"/></svg>
<svg class="a" style="left:858px;top:631px;" width="4" height="3" viewBox="0 0 4 3"><path d="M0 0 H4 L2 2.6 Z" fill="#dcdcdc"/></svg>
<svg class="a" style="left:871.5px;top:621.5px;" width="13" height="10" viewBox="0 0 13 10"><path d="M0.3 1.2 C0.3 0.6 0.7 0.2 1.2 0.2 H4.8 L6 1.8 H11.8 C12.3 1.8 12.7 2.2 12.7 2.8 V8.8 C12.7 9.4 12.3 9.8 11.8 9.8 H1.2 C0.7 9.8 0.3 9.4 0.3 8.8 Z" fill="#e0e0e0"/></svg>
<svg class="a" style="left:896px;top:621px;" width="11" height="11" viewBox="0 0 11 11"><rect x="0.7" y="0.7" width="9.6" height="9.6" rx="1" fill="none" stroke="#e0e0e0" stroke-width="1.3"/><path d="M5.5 3 V8 M3 5.5 H8" stroke="#e0e0e0" stroke-width="1.5"/></svg>
<svg class="a" style="left:921.5px;top:620.5px;" width="10" height="12" viewBox="0 0 10 12"><path d="M0.5 2.4 H9.5 M3.5 2.2 V0.8 H6.5 V2.2" stroke="#e0e0e0" stroke-width="1.2" fill="none"/><path d="M1.4 3.6 H8.6 L8 11.3 H2 Z" fill="none" stroke="#e0e0e0" stroke-width="1.2"/><path d="M3.6 5 V10 M5 5 V10 M6.4 5 V10" stroke="#e0e0e0" stroke-width="0.8"/></svg>
</body></html>
